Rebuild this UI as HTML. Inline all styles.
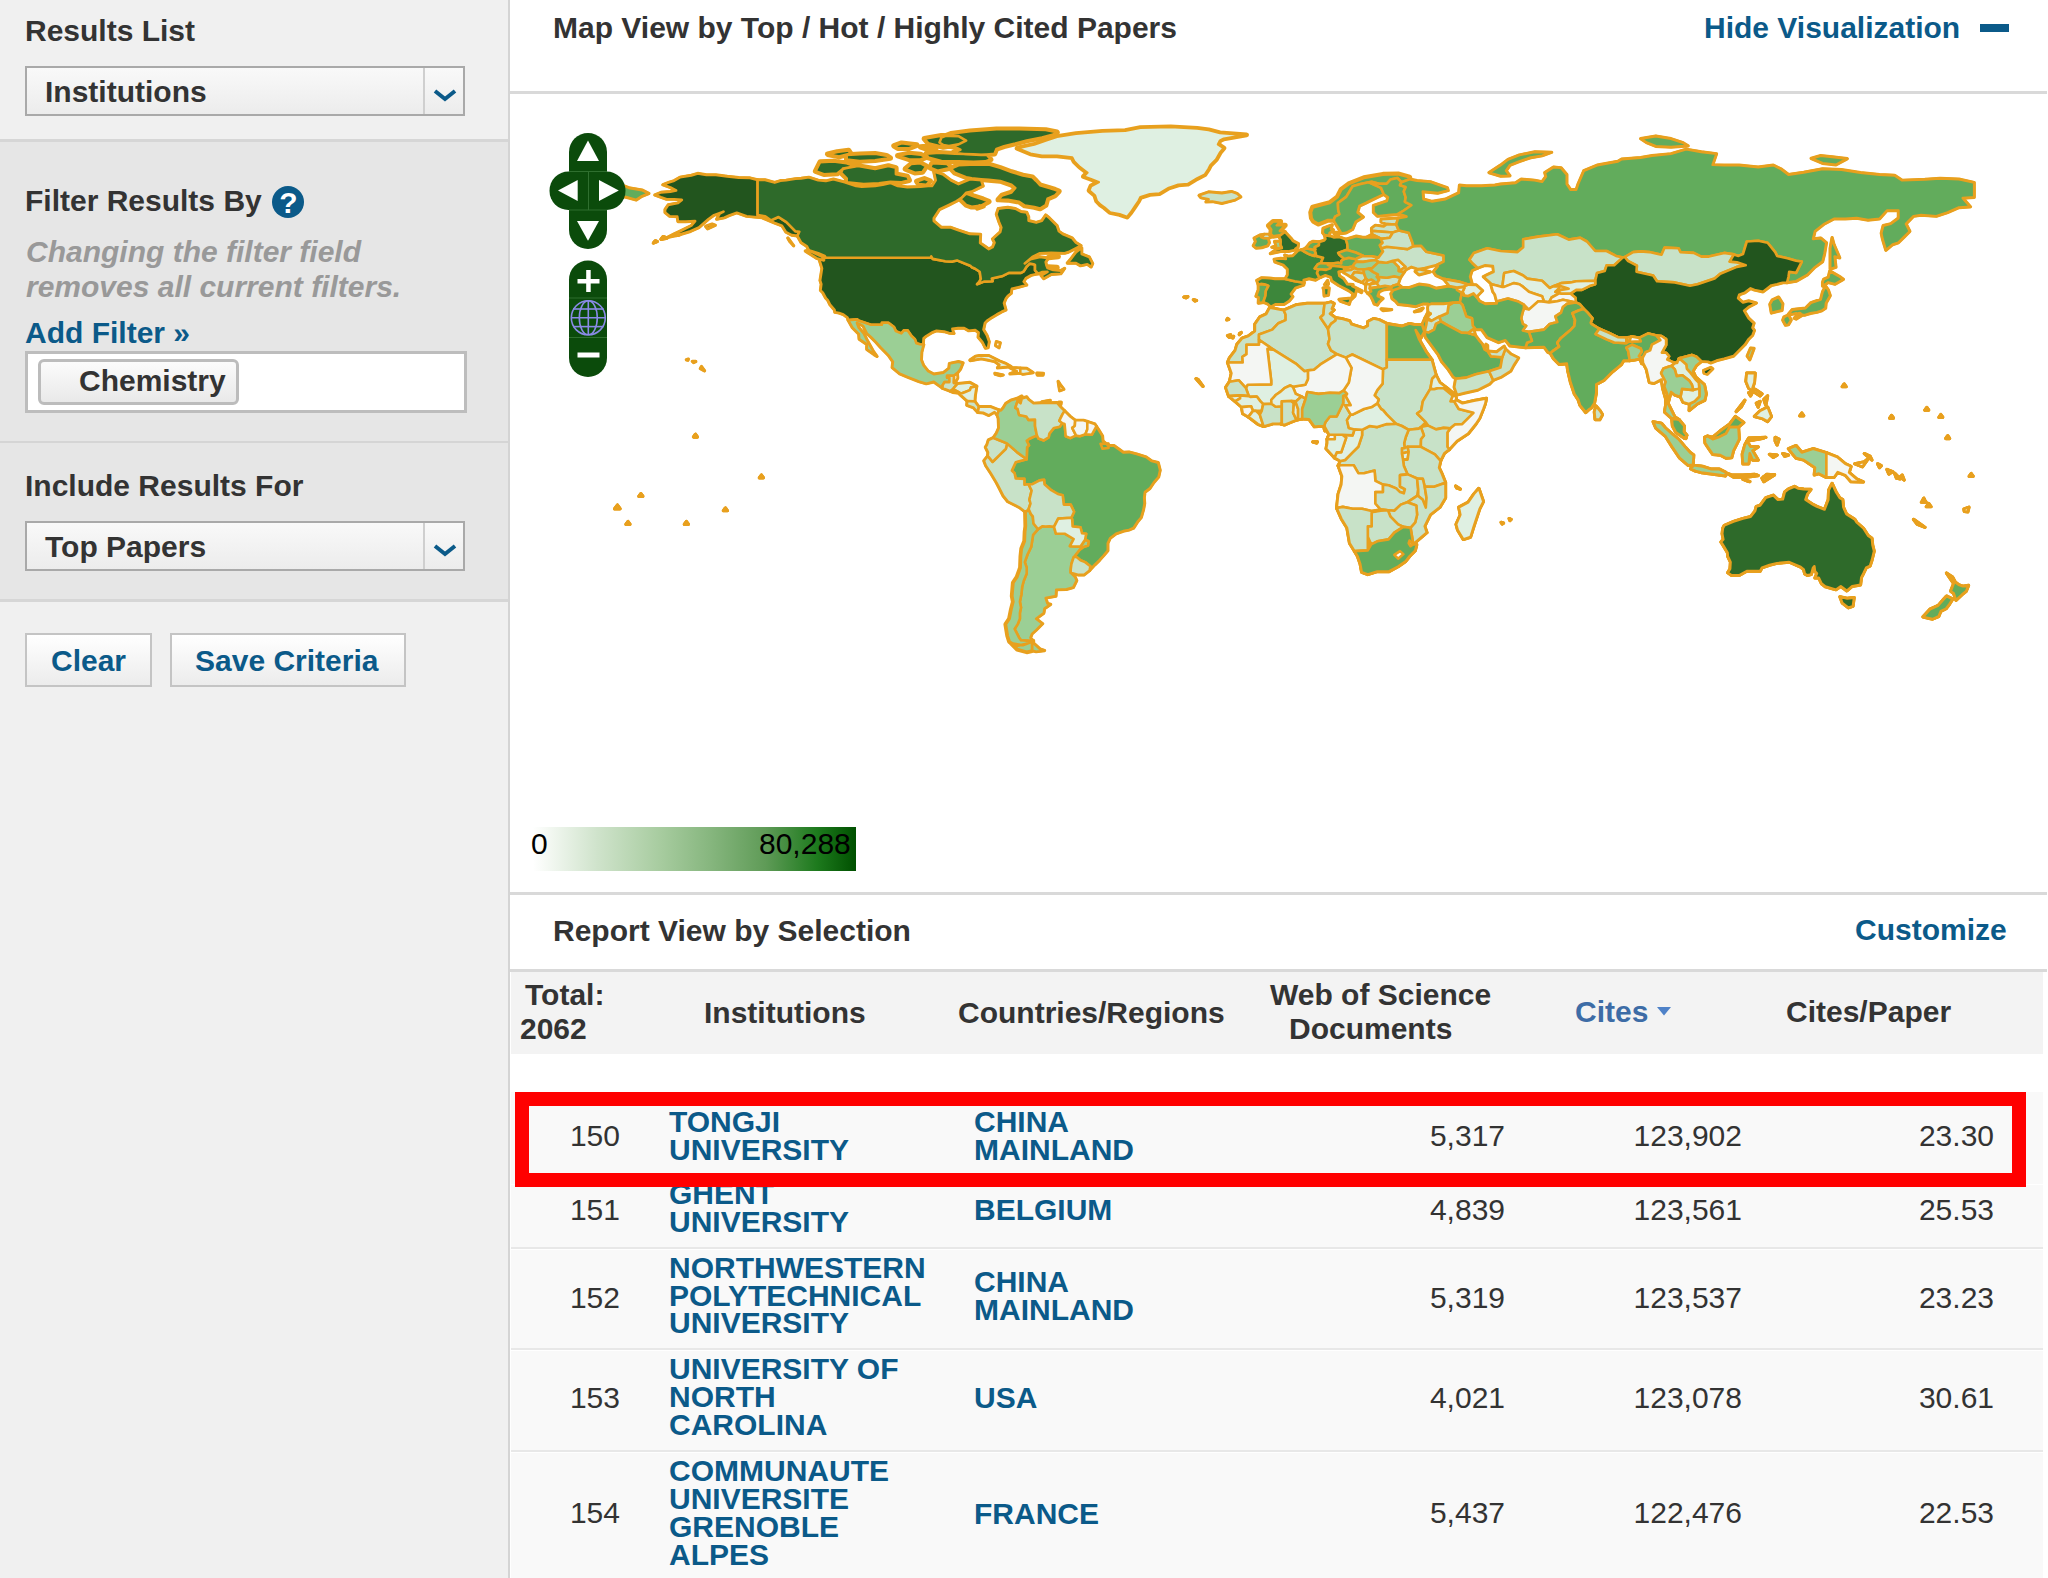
<!DOCTYPE html>
<html><head><meta charset="utf-8"><title>InCites</title>
<style>
html,body{margin:0;padding:0;width:2048px;height:1578px;overflow:hidden;background:#fff;}
body{font-family:"Liberation Sans",sans-serif;color:#333;position:relative;}
.a{position:absolute;white-space:nowrap;}
.b{font-weight:bold;}
.t30{font-size:30px;line-height:34px;}
.blue{color:#0b5a89;}
.sel{position:absolute;box-sizing:border-box;border:2px solid #a9a9a9;background:linear-gradient(#f9f9f9,#ececec);}
.sel .arr{position:absolute;right:0;top:0;bottom:0;width:38px;border-left:2px solid #cfcfcf;}
.btn{position:absolute;box-sizing:border-box;border:2.5px solid #c4c4c4;background:linear-gradient(#ffffff,#ececec);}
.hr{position:absolute;height:2.5px;background:#d9d9d9;}
.row{position:absolute;left:511px;width:1532px;background:#f9f9f9;}
.sep{position:absolute;left:511px;width:1532px;height:2px;background:#e8e8e8;}
.inst{position:absolute;left:669px;font-weight:bold;font-size:30px;line-height:27.5px;color:#0b5a89;white-space:nowrap;}
.ctry{position:absolute;left:974px;font-weight:bold;font-size:30px;line-height:27.5px;color:#0b5a89;white-space:nowrap;}
.num{position:absolute;font-size:30px;line-height:34px;color:#333;text-align:right;white-space:nowrap;}
</style></head><body>
<!-- sidebar -->
<div class="a" style="left:0;top:0;width:509px;height:1578px;background:#f0f0f0;"></div>
<div class="a" style="left:0;top:140px;width:509px;height:461px;background:#e6e6e6;"></div>
<div class="a" style="left:0;top:139px;width:508px;height:2.5px;background:#d6d6d6;"></div>
<div class="a" style="left:0;top:441px;width:509px;height:2px;background:#d5d5d5;"></div>
<div class="a" style="left:0;top:599px;width:508px;height:2.5px;background:#d6d6d6;"></div>
<div class="a" style="left:508px;top:0;width:2px;height:1578px;background:#d4d4d4;"></div>

<div class="a b t30" style="left:25px;top:13.5px;">Results List</div>
<div class="sel" style="left:25px;top:66px;width:440px;height:50px;"><div class="arr"></div></div>
<div class="a b t30" style="left:45px;top:74.5px;">Institutions</div>
<svg class="a" style="left:430px;top:86px;" width="30" height="20" viewBox="0 0 30 20"><path d="M5 5 L15 13 L25 5" fill="none" stroke="#0b5a89" stroke-width="4"/></svg>

<div class="a b t30" style="left:25px;top:184px;">Filter Results By</div>
<svg class="a" style="left:271px;top:185px;" width="34" height="34" viewBox="0 0 34 34"><circle cx="17" cy="17" r="16" fill="#0b5a89"/><text x="17.5" y="27.5" text-anchor="middle" font-family="Liberation Sans" font-weight="bold" font-size="30" fill="#fff">?</text></svg>
<div class="a b t30" style="left:26px;top:235px;font-style:italic;color:#999;">Changing the filter field</div>
<div class="a b t30" style="left:26px;top:270px;font-style:italic;color:#999;">removes all current filters.</div>
<div class="a b t30 blue" style="left:25px;top:315.5px;">Add Filter &raquo;</div>
<div class="a" style="left:25px;top:351px;width:442px;height:62px;box-sizing:border-box;border:3px solid #bdbdbd;background:#fff;"></div>
<div class="a" style="left:38px;top:359px;width:201px;height:46px;box-sizing:border-box;border:3px solid #bcbcbc;border-radius:6px;background:linear-gradient(#fbfbfb,#e9e9e9);"></div>
<div class="a b t30" style="left:79px;top:364px;">Chemistry</div>

<div class="a b t30" style="left:25px;top:468.5px;">Include Results For</div>
<div class="sel" style="left:25px;top:521px;width:440px;height:50px;"><div class="arr"></div></div>
<div class="a b t30" style="left:45px;top:530px;">Top Papers</div>
<svg class="a" style="left:430px;top:541px;" width="30" height="20" viewBox="0 0 30 20"><path d="M5 5 L15 13 L25 5" fill="none" stroke="#0b5a89" stroke-width="4"/></svg>

<div class="btn" style="left:25px;top:633px;width:127px;height:54px;"></div>
<div class="a b t30 blue" style="left:51px;top:644px;">Clear</div>
<div class="btn" style="left:170px;top:633px;width:236px;height:54px;"></div>
<div class="a b t30 blue" style="left:195px;top:644px;">Save Criteria</div>

<!-- main header -->
<div class="a b t30" style="left:553px;top:10.5px;">Map View by Top / Hot / Highly Cited Papers</div>
<div class="a b t30 blue" style="left:1704px;top:10.5px;">Hide Visualization</div>
<div class="a" style="left:1980px;top:24px;width:29px;height:8px;background:#0b5a89;"></div>
<div class="hr" style="left:510px;top:91px;width:1537px;"></div>

<!-- map -->
<svg class="a" style="left:511px;top:94px;" width="1537" height="796" viewBox="0 0 1537 796"><g stroke="#e8a01e" fill="#e8a01e" stroke-linejoin="round"><path d="M308.4 166.0L314.8 163.8L420.2 163.8L420.2 162.3L421.7 164.9L434.2 167.2L441.4 167.6L446.0 166.4L459.2 171.7L460.7 173.2L464.2 174.7L468.7 177.8L469.8 184.9L468.3 188.0L466.1 190.2L472.9 187.6L481.6 187.2L480.8 184.6L491.8 181.9L497.9 178.9L510.0 178.9L512.7 177.4L515.7 172.5L518.7 169.6L522.5 170.2L524.0 171.0L524.0 176.3L527.1 179.7L520.2 181.2L514.9 184.2L512.7 187.6L515.7 191.0L508.5 192.9L500.9 194.8L500.5 196.3L500.2 199.3L496.8 202.0L494.9 204.6L493.0 209.1L494.9 215.9L490.7 217.8L485.8 220.5L480.8 223.5L475.9 226.9L474.0 228.8L472.5 235.6L475.9 241.3L478.2 247.7L477.0 253.7L474.4 254.1L471.4 248.1L467.2 243.2L467.6 238.6L464.2 236.0L457.7 236.7L453.2 234.1L447.1 234.1L441.4 234.8L442.2 238.2L442.9 239.4L438.0 239.0L433.1 237.5L425.5 236.7L421.7 238.2L415.3 242.0L412.6 244.3L412.2 250.0L412.6 250.7L408.8 250.3L405.4 249.2L403.9 245.1L400.5 242.0L396.7 236.4L392.9 236.4L390.3 239.4L384.9 237.1L383.0 233.0L377.4 228.8L370.9 228.8L370.9 230.7L359.9 230.7L345.9 226.1L346.3 225.4L337.2 226.1L336.4 223.5L332.3 220.5L328.1 219.0L323.9 218.2L323.5 215.9L319.0 210.7L316.7 206.1L314.8 204.2L311.8 198.6L309.5 196.3L310.3 190.2L309.1 186.5L311.0 174.4L308.4 166.0ZM246.6 85.9L246.6 121.1L254.2 122.2L259.9 126.4L267.5 123.0L275.4 128.2L284.5 137.3L288.3 137.7L286.4 141.9L280.7 141.1L275.0 138.1L270.9 131.7L263.7 129.0L251.2 123.7L235.6 122.2L225.8 118.8L218.2 121.4L213.3 123.7L205.7 125.2L208.7 119.6L212.5 117.7L203.0 121.1L197.3 125.2L187.9 133.5L179.5 137.3L167.0 141.1L156.4 143.4L163.2 140.0L168.9 137.3L180.3 131.7L184.1 127.1L174.6 127.5L167.0 127.5L166.3 122.6L158.7 122.2L154.1 118.4L154.1 115.4L157.2 110.9L167.0 109.0L170.8 105.9L163.2 105.2L155.6 105.2L150.0 103.3L143.9 101.0L150.0 98.4L159.4 97.6L165.1 96.5L159.4 93.5L151.9 90.8L157.5 88.6L163.2 86.7L168.9 83.3L180.3 81.4L186.7 79.5L195.4 81.0L204.9 81.0L216.3 82.5L227.7 83.6L239.0 84.0ZM189.4 274.5L193.5 276.8L190.5 272.6ZM184.8 267.4L182.6 268.5L181.4 267.4ZM177.3 265.1L175.4 265.8L176.9 266.2ZM201.1 130.1L204.2 131.3L196.6 134.7L194.7 132.4Z" stroke-width="3.3"/><path d="M246.6 85.9L254.2 85.9L263.7 88.6L269.4 86.7L275.0 86.3L284.5 84.8L290.2 84.4L297.8 83.3L307.2 86.3L314.8 87.0L322.4 85.2L333.8 88.2L345.1 92.0L350.8 92.7L364.1 92.0L371.7 90.8L379.3 88.9L386.8 92.0L396.3 93.1L409.6 92.7L417.2 92.0L421.0 92.0L424.7 86.3L422.8 77.6L432.3 80.6L439.9 86.3L447.5 90.1L458.9 85.2L470.2 86.3L472.1 92.0L460.7 97.6L455.1 98.8L451.3 103.3L445.6 107.1L438.0 110.9L428.5 115.4L422.8 124.1L422.8 127.1L430.4 133.5L439.9 133.5L447.5 136.2L458.9 140.0L469.5 140.3L469.1 149.0L474.0 152.4L477.8 155.1L481.6 153.2L483.5 148.7L481.6 144.9L489.2 138.1L490.3 133.5L488.0 127.9L485.4 120.3L487.3 114.6L496.8 113.5L504.3 114.6L510.0 117.7L515.7 118.4L517.6 123.0L517.6 126.7L525.2 128.6L530.9 126.7L534.7 121.1L538.4 124.1L546.0 131.7L547.9 137.3L551.7 140.0L561.2 144.1L565.0 148.7L569.9 151.7L564.2 154.7L557.4 158.1L553.6 159.2L540.3 158.9L529.0 159.2L521.4 163.0L513.8 169.5L519.5 165.3L529.0 163.0L537.3 164.2L534.7 167.9L535.4 171.3L536.5 174.0L542.2 175.9L549.8 176.6L553.6 174.4L549.8 179.7L540.3 180.4L532.8 184.6L530.1 181.5L536.5 177.8L530.9 178.1L527.1 179.7L524.0 176.3L524.0 171.0L522.5 170.2L518.7 169.6L515.7 172.5L512.7 177.4L510.0 178.9L497.9 178.9L491.8 181.9L480.8 184.6L481.6 187.2L472.9 187.6L466.1 190.2L468.3 188.0L469.8 184.9L468.7 177.8L464.2 174.7L460.7 173.2L459.2 171.7L446.0 166.4L441.4 167.6L434.2 167.2L421.7 164.9L420.2 162.3L420.2 163.8L314.8 163.8L313.7 161.9L307.2 159.2L297.8 156.2L295.9 152.4L290.2 148.7L286.4 141.9L288.3 137.7L284.5 137.3L275.4 128.2L267.5 123.0L259.9 126.4L254.2 122.2L246.6 121.1ZM312.9 166.4L305.4 164.2L294.4 157.0L299.7 157.4L311.0 162.6ZM282.6 151.7L276.9 144.1L278.8 147.5ZM556.3 169.1L559.3 165.7L565.0 158.1L570.7 154.0L570.7 160.0L578.2 163.0L581.6 169.5L580.1 172.9L576.3 170.2L569.5 171.7L565.0 169.1Z" stroke-width="3.3"/><path d="M547.9 97.3L544.1 101.4L536.5 104.8L534.7 111.2L529.0 114.6L523.3 113.1L513.8 111.6L508.1 107.8L496.8 105.9L487.3 105.6L491.1 101.4L500.5 98.4L504.3 93.9L500.5 90.8L489.2 87.0L477.8 85.9L470.2 85.2L460.7 84.4L455.1 83.3L443.7 78.7L439.9 74.6L447.5 71.2L458.9 70.8L477.8 70.4L489.2 73.8L500.5 78.0L511.9 81.4L521.4 83.3L525.2 87.0L529.0 91.2L538.4 93.9L544.1 95.7ZM330.0 78.7L335.7 84.4L335.7 88.2L352.7 90.1L367.9 89.3L379.3 87.8L390.6 88.2L398.2 86.3L396.3 82.5L384.9 80.2L384.9 73.8L377.4 71.9L364.1 74.9L347.0 71.9L331.9 74.6ZM304.6 77.2L309.1 68.1L322.4 67.4L335.7 69.3L343.3 71.9L331.9 74.9L326.2 79.5L312.9 80.2ZM470.2 61.0L483.5 59.8L485.4 54.9L493.0 52.3L504.3 49.6L515.7 46.6L530.9 43.6L542.2 40.6L546.0 38.3L534.7 36.0L508.1 35.3L485.4 35.3L458.9 37.2L439.9 39.8L430.4 43.6L428.5 48.5L432.3 51.1L443.7 53.0L449.4 55.7L441.8 58.7L455.1 60.2ZM430.4 67.0L447.5 67.4L462.6 67.8L474.0 67.4L479.7 65.5L475.9 61.0L462.6 60.2L443.7 59.8L428.5 58.7L415.3 59.8L417.2 63.6ZM432.3 53.0L447.5 50.4L455.1 46.6L447.5 42.1L430.4 41.7L413.4 44.7L417.2 49.2ZM455.1 110.9L460.7 112.8L470.2 111.6L477.8 107.5L472.1 105.2L462.6 102.2L455.1 99.5L449.4 105.2ZM394.4 74.9L400.1 70.0L409.6 69.3L415.3 72.3L411.5 78.0L403.9 78.7ZM421.0 69.3L436.1 70.0L439.9 73.8L426.6 76.8L419.1 73.8ZM335.7 65.5L348.9 67.0L364.1 66.3L379.3 64.0L375.5 61.7L364.1 59.8L348.9 60.2L335.7 61.0ZM386.8 61.7L398.2 65.5L409.6 65.5L415.3 63.2L409.6 60.6L398.2 59.5ZM316.7 60.2L328.1 62.5L339.5 59.5L337.6 56.4L326.2 57.9ZM386.8 54.2L398.2 54.2L405.8 51.1L390.6 49.2L383.0 51.9ZM415.3 54.9L424.7 54.9L417.2 52.3L409.6 53.0ZM466.4 113.9L472.1 112.0L468.3 111.2ZM407.7 90.1L415.3 90.8L419.1 87.0L413.4 84.8L405.8 87.4ZM537.7 163.4L547.2 162.6L544.1 161.5ZM536.9 172.9L546.0 173.6L540.3 174.4Z" stroke-width="5.5"/><path d="M616.1 123.0L608.6 120.3L599.1 118.4L593.4 113.5L589.6 110.9L585.8 107.1L583.9 101.4L578.2 96.5L580.1 92.0L587.7 88.2L580.1 85.2L572.5 82.5L576.3 78.7L568.8 73.1L563.1 67.4L561.2 63.6L546.0 61.7L530.9 61.7L519.5 59.8L506.2 54.2L523.3 50.4L534.7 46.6L546.0 42.8L565.0 39.8L591.5 37.5L614.2 36.8L629.4 33.7L659.7 33.0L686.2 34.5L697.6 36.0L709.0 39.0L735.5 40.9L712.8 44.7L709.0 46.6L707.1 50.4L712.8 54.2L709.0 58.7L705.2 65.5L699.5 71.2L697.6 74.9L693.8 80.6L686.2 84.4L676.8 90.1L667.3 90.8L657.8 93.9L648.3 99.5L638.9 100.3L629.4 103.3L627.5 107.1L623.7 112.8L619.9 118.4Z" stroke-width="5.0"/><path d="M688.1 101.4L697.6 98.0L710.9 99.1L720.4 97.6L726.0 99.5L729.8 102.9L724.2 105.9L710.9 109.3L701.4 107.5L695.0 107.8L697.6 105.2L690.0 103.7Z" stroke-width="3.3"/><path d="M337.2 226.1L346.3 225.4L345.9 226.1L359.9 230.7L370.9 230.7L370.9 228.8L377.4 228.8L383.0 233.0L384.9 237.1L390.3 239.4L392.9 236.4L396.7 236.4L400.5 242.0L403.9 245.1L405.4 249.2L408.8 250.3L412.6 250.7L410.7 258.3L410.3 265.8L412.6 271.5L417.2 277.2L422.8 280.2L432.3 278.7L438.0 274.2L438.4 269.6L447.5 267.7L452.0 268.9L449.4 275.3L446.3 279.1L443.1 281.7L436.1 281.7L436.1 283.8L438.4 283.8L438.4 288.1L433.5 288.1L431.6 291.2L431.6 294.2L422.8 287.8L415.3 289.7L407.7 287.4L396.3 282.9L388.7 279.8L381.2 273.4L381.9 267.7L377.4 261.3L369.8 253.7L364.9 248.1L360.3 243.5L355.8 239.4L352.0 231.8L345.9 228.8L347.8 233.7L352.7 239.4L356.5 246.9L362.2 257.1L366.0 262.4L363.0 260.5L355.8 255.3L355.8 250.3L348.2 245.1L347.8 240.1L341.4 233.7Z" stroke-width="3.3"/><path d="M431.6 294.2L431.6 291.2L433.5 288.1L438.4 288.1L438.4 283.8L436.1 283.8L436.1 281.7L443.1 281.7L442.9 288.9L446.7 289.7L442.9 293.8L439.5 297.2Z" stroke-width="3.3"/><path d="M443.1 281.7L446.3 279.1L446.7 284.0L444.1 288.9L442.9 288.9Z" stroke-width="3.3"/><path d="M446.7 289.7L458.9 288.5L465.7 292.3L460.0 293.4L458.9 296.1L452.4 298.7L449.4 299.9L448.2 298.3L442.9 295.7L442.9 293.8Z" stroke-width="3.3"/><path d="M439.5 297.2L442.9 295.7L448.2 298.3L448.2 299.1L441.8 298.3Z" stroke-width="3.3"/><path d="M449.4 299.9L452.4 298.7L458.9 296.1L460.0 293.4L465.7 292.3L464.2 301.8L463.8 307.4L456.2 307.0L448.6 300.2Z" stroke-width="3.3"/><path d="M456.2 307.0L463.8 307.4L467.9 312.7L466.8 318.4L462.6 313.8L455.8 311.2Z" stroke-width="3.3"/><path d="M467.9 312.7L479.7 312.7L488.0 316.1L486.1 321.0L483.5 318.0L477.8 321.4L472.1 318.8L466.8 318.4Z" stroke-width="3.3"/><path d="M458.9 266.2L464.5 262.4L468.3 261.7L477.8 261.7L488.4 267.0L494.1 269.2L500.2 272.6L486.5 273.8L488.4 270.8L483.5 267.4L475.9 265.8L470.2 264.7L459.2 266.6Z" stroke-width="3.3"/><path d="M499.0 273.8L505.1 273.8L509.3 274.2L509.3 279.1L499.0 279.8L505.8 277.2Z" stroke-width="3.3"/><path d="M509.3 274.2L515.7 274.5L522.1 278.7L511.9 280.2L509.3 279.1Z" stroke-width="3.3"/><path d="M483.9 279.4L492.2 281.0L489.5 281.7L484.2 280.2Z" stroke-width="3.3"/><path d="M525.9 279.1L532.4 279.4L532.0 281.0L526.3 281.0Z" stroke-width="3.3"/><path d="M485.4 247.7L489.2 248.8L488.0 253.7L484.6 251.5ZM547.9 308.2L550.2 308.2L549.8 310.8L546.4 310.8ZM552.8 295.3L549.1 290.4L547.2 287.4L548.7 296.8ZM530.9 307.8L539.2 306.3L537.3 308.6Z" stroke-width="3.3"/><path d="M585.4 332.4L587.7 335.8L591.5 342.2L591.9 347.1L597.2 351.6L602.9 351.6L612.3 358.4L618.0 358.1L625.6 360.0L635.1 363.0L640.8 367.1L647.2 368.7L649.1 376.2L647.6 383.0L642.7 388.7L638.9 394.4L633.9 398.1L633.2 403.8L633.6 409.5L632.4 415.9L630.2 423.5L626.7 427.6L622.6 434.0L618.0 435.9L612.3 437.1L605.1 439.7L599.1 444.3L596.8 449.2L596.8 456.7L592.3 462.0L588.5 466.2L583.9 470.7L578.6 476.4L579.4 472.2L574.1 468.1L569.5 466.2L565.3 462.8L562.7 463.2L568.8 455.6L572.5 453.0L577.1 451.4L577.5 447.3L574.1 445.8L575.2 439.7L571.0 439.3L569.5 433.3L561.6 432.5L561.2 425.4L560.4 423.8L563.1 417.8L559.7 410.6L552.8 410.6L551.7 401.2L546.8 400.0L540.3 396.2L533.5 390.2L533.1 385.7L528.6 386.4L521.4 390.2L517.6 390.2L513.4 390.6L513.4 384.9L504.7 384.5L503.6 379.2L500.9 376.6L504.7 368.3L515.7 365.3L516.1 353.2L518.0 351.3L515.7 346.7L518.4 344.8L525.9 341.4L527.4 344.5L532.8 346.4L537.7 343.3L538.4 339.6L543.0 333.9L548.7 332.7L551.3 329.3L553.6 330.1L554.7 342.2L559.3 344.1L563.8 341.8L568.8 342.2L574.4 340.3L580.9 340.7ZM589.6 349.8L597.2 349.8L597.6 353.9L591.5 354.7Z" stroke-width="3.3"/><path d="M562.7 463.2L560.4 470.0L559.7 475.6L559.7 478.7L564.2 483.2L565.7 486.6L562.3 493.4L555.5 495.3L545.3 495.7L544.9 502.1L534.7 504.0L536.5 509.6L539.6 510.4L533.5 514.6L532.8 519.1L525.2 524.8L531.6 529.7L525.2 536.1L521.0 539.9L519.5 543.7L521.8 547.1L510.0 546.3L508.1 543.7L506.2 539.9L503.6 535.0L506.6 530.4L508.9 524.8L508.9 519.1L510.0 513.4L508.9 507.8L510.4 500.2L511.2 492.6L512.7 487.0L515.7 479.4L515.7 473.7L513.8 468.1L516.5 460.5L520.2 453.0L522.1 440.9L527.1 435.2L531.6 432.2L534.7 432.5L538.4 432.2L543.0 432.9L544.9 439.7L553.6 439.7L562.7 445.0L558.9 452.2L569.5 452.6L574.1 445.8L577.5 447.3L577.1 451.4L572.5 453.0L568.8 455.6ZM521.0 547.8L529.0 555.0L533.5 556.5L525.2 557.7L521.0 556.5Z" stroke-width="3.3"/><path d="M517.6 415.1L519.9 420.1L521.8 422.3L522.5 429.5L527.1 435.2L522.1 440.9L520.2 453.0L516.5 460.5L513.8 468.1L515.7 473.7L515.7 479.4L512.7 487.0L511.2 492.6L510.4 500.2L508.9 507.8L510.0 513.4L508.9 519.1L508.9 524.8L506.6 530.4L503.6 535.0L506.2 539.9L508.1 543.7L510.0 546.3L521.8 547.1L513.8 550.1L506.2 552.0L498.6 547.5L496.8 541.8L494.9 530.4L498.6 524.8L500.5 515.3L502.4 507.8L501.3 502.1L502.4 488.9L506.2 483.2L509.6 473.7L510.0 462.4L510.8 454.8L513.8 447.3L514.2 437.8L514.9 432.2L514.6 418.2ZM521.0 547.8L521.0 556.5L515.7 557.7L506.2 555.0L500.5 549.3L511.9 551.2Z" stroke-width="5.0"/><path d="M476.7 361.9L472.9 366.8L474.8 371.7L479.7 379.2L485.4 388.7L488.4 394.4L492.2 401.9L496.8 407.6L508.1 413.3L514.6 418.2L517.6 415.1L519.5 409.5L518.4 405.7L520.6 396.6L517.6 390.2L513.4 390.6L513.4 384.9L504.7 384.5L503.6 379.2L500.9 376.6L504.7 368.3L515.7 365.3L506.2 358.4L496.0 349.4L494.9 354.7L489.2 360.3L483.5 366.0L481.6 367.9Z" stroke-width="3.3"/><path d="M476.7 361.9L481.6 367.9L483.5 366.0L489.2 360.3L494.9 354.7L496.0 349.4L487.7 346.0L482.3 343.7L477.4 346.0L475.9 350.9L474.4 353.2L477.0 358.4Z" stroke-width="3.3"/><path d="M482.3 343.7L487.7 346.0L496.0 349.4L506.2 358.4L515.7 365.3L516.1 353.2L518.0 351.3L515.7 346.7L518.4 344.8L525.9 341.4L524.0 332.0L524.0 325.6L517.6 325.9L515.3 322.5L508.1 321.0L506.6 315.0L504.3 313.8L506.6 307.0L510.8 302.1L506.2 304.4L499.8 306.3L494.9 309.3L492.2 313.8L489.9 316.5L488.0 316.1L486.1 321.0L487.3 324.4L487.7 333.9L485.4 339.2Z" stroke-width="3.3"/><path d="M506.6 307.0L509.6 309.3L510.8 304.4L515.7 302.9L517.6 305.5L522.5 309.3L530.9 308.9L538.4 308.9L546.0 308.6L549.8 313.1L553.6 316.9L551.3 320.6L548.3 326.7L551.3 329.3L548.7 332.7L543.0 333.9L538.4 339.6L537.7 343.3L532.8 346.4L527.4 344.5L525.9 341.4L524.0 332.0L524.0 325.6L517.6 325.9L515.3 322.5L508.1 321.0L506.6 315.0L504.3 313.8Z" stroke-width="3.3"/><path d="M553.6 316.9L559.3 322.5L564.2 326.3L563.8 332.0L561.2 333.9L565.0 341.4L559.3 344.1L554.7 342.2L553.6 330.1L551.3 329.3L548.3 326.7L551.3 320.6Z" stroke-width="3.3"/><path d="M564.2 326.3L572.5 326.3L576.3 327.5L576.3 335.4L574.4 340.3L568.8 342.2L565.0 341.4L561.2 333.9L563.8 332.0Z" stroke-width="3.3"/><path d="M576.3 327.5L583.9 330.1L585.4 332.4L580.9 340.7L574.4 340.3L576.3 335.4Z" stroke-width="3.3"/><path d="M517.6 415.1L519.9 420.1L521.8 422.3L522.5 429.5L527.1 435.2L531.6 432.2L534.7 432.5L538.4 432.2L543.0 432.9L547.2 424.6L560.4 423.8L563.1 417.8L559.7 410.6L552.8 410.6L551.7 401.2L546.8 400.0L540.3 396.2L533.5 390.2L533.1 385.7L528.6 386.4L521.4 390.2L517.6 390.2L520.6 396.6L518.4 405.7L519.5 409.5Z" stroke-width="3.3"/><path d="M543.0 432.9L544.9 439.7L553.6 439.7L562.7 445.0L558.9 452.2L569.5 452.6L574.1 445.8L575.2 439.7L571.0 439.3L569.5 433.3L561.6 432.5L561.2 425.4L560.4 423.8L547.2 424.6Z" stroke-width="3.3"/><path d="M562.7 463.2L565.3 462.8L569.5 466.2L574.1 468.1L579.4 472.2L578.6 476.4L572.9 480.9L567.6 480.9L559.7 478.7L559.7 475.6L560.4 470.0Z" stroke-width="3.3"/><path d="M747.3 190.6L749.9 189.9L754.8 190.6L757.5 191.8L754.8 197.0L754.5 201.6L752.6 207.2L753.0 208.4L747.3 209.1L747.6 203.5L745.0 202.3L747.3 195.9Z" stroke-width="3.3"/><path d="M747.3 190.6L745.8 186.5L750.7 183.8L758.3 184.2L763.9 184.9L774.2 184.9L783.7 187.2L793.1 188.7L792.7 191.0L784.4 194.0L779.9 200.1L781.8 202.7L778.3 206.9L773.0 210.3L764.3 210.3L759.8 212.9L756.7 209.9L753.0 208.4L752.6 207.2L754.5 201.6L754.8 197.0L757.5 191.8L754.8 190.6L749.9 189.9Z" stroke-width="3.3"/><path d="M774.2 184.9L776.5 180.8L776.5 175.1L772.3 171.0L763.9 167.9L763.2 165.3L769.6 164.5L774.9 164.9L773.8 161.1L777.2 162.3L781.8 161.9L787.1 156.6L790.5 155.8L792.4 157.0L796.9 159.6L799.6 160.8L803.4 161.9L805.3 161.9L812.1 163.8L809.8 169.1L806.8 170.2L803.7 174.4L807.5 175.5L806.0 178.9L807.5 181.9L809.4 183.4L804.5 186.1L798.1 184.6L792.7 186.1L793.1 188.7L783.7 187.2ZM816.6 186.5L817.4 189.9L815.9 192.5L813.6 190.6Z" stroke-width="3.3"/><path d="M790.5 155.8L793.9 154.7L797.3 154.7L803.0 155.8L804.5 158.1L803.4 161.9L799.6 160.8L796.9 159.6L792.4 157.0Z" stroke-width="3.3"/><path d="M793.9 154.7L796.2 152.4L798.8 149.0L801.8 147.5L808.3 147.9L807.9 151.3L803.7 153.2L804.5 155.5L803.0 155.8L797.3 154.7Z" stroke-width="3.3"/><path d="M808.3 147.9L813.2 146.4L814.4 144.9L813.6 141.1L818.5 141.9L822.7 143.4L828.4 143.0L834.8 145.3L835.6 147.5L836.3 150.2L836.7 156.2L835.2 156.0L827.2 158.9L828.4 160.8L833.3 164.9L830.3 166.8L830.3 169.5L827.2 168.7L820.8 169.5L817.4 169.5L809.8 169.1L812.1 163.8L805.3 161.9L804.5 158.1L803.0 155.8L804.5 155.5L803.7 153.2L807.9 151.3Z" stroke-width="3.3"/><path d="M803.7 174.4L806.8 170.2L809.8 169.1L817.4 169.5L817.0 171.0L820.8 171.7L819.3 174.4L815.1 175.9L810.9 175.5L807.5 175.5Z" stroke-width="3.3"/><path d="M817.4 169.5L820.8 169.5L827.2 168.7L830.3 169.5L830.3 166.8L833.3 164.9L837.8 163.8L845.1 165.3L845.8 167.6L843.5 169.5L841.6 172.5L836.0 173.6L828.0 172.5L820.8 171.7L817.0 171.0Z" stroke-width="3.3"/><path d="M807.5 175.5L810.9 175.5L815.1 175.9L819.3 174.4L820.8 171.7L828.0 172.5L832.9 173.2L833.3 176.6L827.6 177.8L828.4 181.9L832.5 184.6L836.3 190.2L842.0 190.6L841.3 192.1L851.1 197.0L850.4 198.6L845.4 195.9L843.9 202.0L840.5 205.4L842.0 199.7L837.8 196.7L827.6 191.4L820.8 186.8L819.7 183.1L814.4 181.2L809.4 183.4L807.5 181.9L806.0 178.9ZM828.0 205.4L840.1 204.2L838.2 210.3L829.5 207.2ZM812.1 194.0L818.1 194.0L817.4 201.2L813.2 202.0L812.8 195.9Z" stroke-width="3.3"/><path d="M759.4 159.6L765.1 155.5L770.8 154.0L769.3 150.6L769.6 147.5L769.6 145.6L767.7 142.2L769.6 141.1L773.4 138.1L774.9 138.8L780.2 144.5L781.8 146.8L787.4 149.8L787.1 152.8L784.4 154.7L786.3 155.5L777.2 157.4L769.6 157.4Z" stroke-width="3.3"/><path d="M769.6 147.5L763.6 147.5L765.1 151.7L760.9 153.2L765.1 154.0L770.8 154.0L769.3 150.6Z" stroke-width="3.3"/><path d="M769.6 141.1L762.0 142.2L759.8 140.0L760.2 135.4L757.5 131.7L762.0 127.5L769.6 127.5L765.8 131.3L774.2 131.3L768.9 136.9L773.4 138.1Z" stroke-width="5.0"/><path d="M753.3 140.3L757.5 140.3L760.2 143.0L757.1 144.5L752.2 144.1L749.9 143.0Z" stroke-width="3.3"/><path d="M753.3 140.3L749.9 143.0L752.2 144.1L757.1 144.5L758.3 148.7L756.7 151.7L750.7 153.6L745.0 154.0L742.3 151.7L744.6 147.5L743.1 144.1L748.8 141.1Z" stroke-width="3.3"/><path d="M813.6 141.1L811.7 138.8L812.1 134.3L821.2 130.9L820.0 135.1L822.3 135.8L818.5 139.2L818.5 141.9ZM822.7 138.5L828.8 138.5L826.9 141.5L823.4 140.3Z" stroke-width="3.3"/><path d="M802.6 127.1L807.5 129.8L817.0 126.0L822.7 126.0L824.2 122.6L828.4 120.3L827.2 115.8L826.9 109.0L835.2 102.9L841.6 92.3L849.6 90.1L857.9 88.2L860.6 87.8L868.2 89.7L875.8 89.7L879.5 85.5L886.4 84.0L890.5 88.2L898.5 85.2L898.5 83.3L887.1 80.2L872.0 80.6L853.0 84.0L837.8 90.1L830.3 95.7L826.5 103.3L818.9 109.0L801.8 113.5L800.0 118.4L800.7 124.1Z" stroke-width="5.5"/><path d="M823.4 127.9L828.8 136.6L830.3 139.6L835.2 138.8L841.6 135.4L844.7 127.9L852.3 123.0L846.6 118.4L848.5 112.0L854.9 109.0L862.5 105.2L872.7 100.3L870.1 93.9L857.9 88.2L849.6 90.1L841.6 92.3L835.2 102.9L826.9 109.0L827.2 115.8L828.4 120.3L824.2 122.6L822.7 126.0Z" stroke-width="3.3"/><path d="M872.7 100.3L876.9 103.3L875.8 107.1L862.5 111.6L862.5 118.4L866.3 122.2L877.6 121.1L886.4 120.3L892.8 116.5L900.4 111.2L893.9 107.8L894.7 103.3L892.8 97.6L894.7 93.1L889.0 91.2L890.5 88.2L886.4 84.0L879.5 85.5L875.8 89.7L868.2 89.7L860.6 87.8L857.9 88.2L870.1 93.9Z" stroke-width="3.3"/><path d="M870.1 125.2L887.1 124.1L885.2 130.5L875.8 130.1L870.1 127.9Z" stroke-width="3.3"/><path d="M860.6 134.3L864.4 131.3L872.7 132.4L875.8 130.1L885.2 130.5L887.9 136.6L881.8 138.5L860.6 136.9Z" stroke-width="3.3"/><path d="M860.6 136.9L881.8 138.5L878.8 143.7L870.1 144.9L867.4 143.4L861.3 140.3Z" stroke-width="3.3"/><path d="M855.3 143.4L867.4 143.4L861.3 140.3Z" stroke-width="3.3"/><path d="M834.8 145.3L845.4 142.2L851.5 143.4L855.3 143.4L867.4 143.4L870.1 144.9L871.6 148.7L868.9 151.3L870.4 154.3L872.0 157.4L867.4 163.8L860.6 162.3L853.0 162.3L852.3 161.9L844.7 158.5L837.8 156.6L836.7 156.2L836.3 150.2L835.6 147.5Z" stroke-width="3.3"/><path d="M827.2 158.9L835.2 156.0L836.7 156.2L837.8 156.6L844.7 158.5L852.3 161.9L845.8 164.5L845.1 165.3L837.8 163.8L833.3 164.9L828.4 160.8Z" stroke-width="3.3"/><path d="M852.3 161.9L853.0 162.3L860.6 162.3L866.3 163.4L864.8 166.0L858.7 166.8L852.3 167.9L845.8 167.6L845.1 165.3L845.8 164.5Z" stroke-width="3.3"/><path d="M841.6 172.5L843.5 169.5L845.8 167.6L852.3 167.9L858.7 166.8L864.8 166.0L867.8 167.9L861.0 174.4L857.6 174.7L852.6 175.5L846.6 175.5L843.5 174.0Z" stroke-width="3.3"/><path d="M832.9 173.2L836.0 173.6L841.6 172.5L843.5 174.0L840.1 175.9L833.3 176.6Z" stroke-width="3.3"/><path d="M833.3 176.6L840.1 175.9L843.5 174.0L846.6 175.5L852.6 175.5L853.0 179.3L843.5 178.1L840.9 181.9L847.3 186.5L851.1 188.4L845.4 186.5L837.8 181.5L834.1 179.3L832.5 178.5Z" stroke-width="3.3"/><path d="M840.9 181.9L843.5 178.1L853.0 179.3L854.9 184.6L851.1 188.4L847.3 186.5Z" stroke-width="3.3"/><path d="M852.6 175.5L857.6 174.7L862.5 178.1L867.0 180.4L865.9 182.7L868.2 185.7L865.9 189.1L863.2 187.6L860.6 185.7L856.8 186.5L854.9 184.6L853.0 179.3Z" stroke-width="3.3"/><path d="M851.1 188.4L854.9 184.6L856.8 186.5L854.1 190.2Z" stroke-width="3.3"/><path d="M856.8 186.5L860.6 185.7L863.2 187.6L859.1 190.2L854.1 190.2Z" stroke-width="3.3"/><path d="M859.1 190.2L865.9 189.1L868.2 192.9L858.7 194.4Z" stroke-width="3.3"/><path d="M854.1 190.2L859.1 190.2L858.7 194.4L860.2 197.4L856.8 199.3L854.5 196.7L854.9 191.0Z" stroke-width="3.3"/><path d="M856.8 199.3L860.2 197.4L858.7 194.4L868.2 192.9L873.9 191.8L879.9 192.9L881.8 191.8L879.5 194.8L872.0 195.9L868.2 197.8L866.7 202.0L872.0 204.6L868.2 208.0L866.3 211.0L863.2 209.9L861.7 206.1L859.8 202.3L857.6 200.1ZM870.1 214.8L880.7 215.6L872.0 216.7Z" stroke-width="3.3"/><path d="M865.9 182.7L875.8 183.8L883.3 182.3L889.4 183.8L887.1 190.2L881.8 191.8L879.9 192.9L873.9 191.8L868.2 192.9L865.9 189.1L868.2 185.7Z" stroke-width="3.3"/><path d="M857.6 174.7L861.0 174.4L867.8 167.9L875.4 168.7L881.8 166.8L887.9 173.2L887.9 177.0L893.2 178.1L889.4 183.8L883.3 182.3L875.8 183.8L865.9 182.7L867.0 180.4L862.5 178.1Z" stroke-width="3.3"/><path d="M881.8 166.8L887.1 165.7L894.7 172.9L887.9 177.0L887.9 173.2Z" stroke-width="3.3"/><path d="M864.8 166.0L866.3 163.4L867.4 163.8L872.0 157.4L870.4 154.3L875.8 152.8L887.1 154.0L896.6 155.1L902.3 152.1L909.9 151.7L915.2 157.7L925.8 160.0L932.6 161.5L932.6 167.6L925.8 171.0L913.7 174.0L908.0 175.1L904.2 177.4L908.0 180.8L919.3 177.8L913.7 176.6L906.1 174.7L900.4 172.9L894.7 175.9L893.2 178.1L887.9 177.0L894.7 172.9L887.1 165.7L881.8 166.8L875.4 168.7L867.8 167.9Z" stroke-width="3.3"/><path d="M870.1 144.9L878.8 143.7L881.8 138.5L887.9 136.6L897.7 138.8L901.5 148.7L902.3 152.1L896.6 155.1L887.1 154.0L875.8 152.8L870.4 154.3L868.9 151.3L871.6 148.7Z" stroke-width="3.3"/><path d="M879.5 194.8L881.8 191.8L887.1 190.2L890.9 193.3L882.2 196.3ZM882.2 196.3L890.9 193.3L898.5 193.6L908.0 190.2L917.4 191.4L925.0 194.4L938.3 192.1L945.9 193.6L950.8 198.9L948.9 208.4L941.7 208.8L932.6 209.9L920.1 209.9L918.2 212.9L917.1 209.9L911.8 209.9L904.9 212.5L896.6 211.4L887.1 210.3L884.5 207.2L881.1 204.6L879.9 199.7Z" stroke-width="3.3"/><path d="M903.4 217.8L912.1 214.1L909.9 216.7Z" stroke-width="3.3"/><path d="M898.5 85.2L906.1 86.7L919.3 87.8L936.4 93.9L937.1 96.5L926.9 99.1L911.8 97.6L912.5 105.2L921.2 107.5L934.5 105.2L947.8 98.8L948.5 91.2L955.3 92.0L970.5 92.0L983.8 91.2L989.5 90.1L1004.6 88.9L1010.3 85.2L1023.6 86.3L1031.1 87.8L1034.9 82.5L1033.8 78.7L1042.5 73.1L1050.1 73.8L1055.8 80.6L1055.8 90.1L1059.6 95.7L1065.2 95.7L1067.1 90.1L1072.8 76.8L1086.1 71.2L1106.9 67.4L1110.7 65.1L1129.7 63.6L1141.0 61.7L1160.0 59.8L1175.2 55.3L1190.3 57.9L1205.5 59.8L1201.7 70.8L1213.1 71.2L1228.2 71.2L1247.2 73.1L1262.3 71.2L1269.9 74.9L1277.5 80.6L1292.7 78.4L1311.6 74.9L1330.5 75.7L1349.5 78.7L1368.5 80.6L1383.6 81.4L1391.2 86.3L1413.9 85.5L1429.1 84.4L1448.0 85.2L1463.2 88.6L1463.2 103.3L1451.8 104.1L1459.4 112.8L1448.0 113.5L1436.7 118.4L1425.3 122.2L1410.1 121.1L1402.6 122.2L1398.8 126.0L1395.0 129.8L1398.8 137.3L1393.1 143.0L1387.4 148.7L1381.7 150.6L1374.9 156.2L1371.5 144.9L1370.3 139.2L1372.2 131.7L1379.8 129.8L1387.4 124.1L1387.4 116.5L1376.0 116.5L1368.5 124.8L1357.1 126.0L1345.7 124.1L1334.3 124.8L1323.0 124.8L1313.5 129.8L1304.0 137.3L1302.1 144.9L1309.7 144.1L1315.4 148.7L1313.5 160.0L1311.6 167.6L1304.0 173.2L1296.4 180.8L1285.1 187.2L1277.5 188.4L1276.0 188.7L1277.5 182.7L1278.2 177.8L1285.1 178.9L1290.8 167.6L1285.1 166.8L1276.4 164.2L1266.1 161.9L1264.2 158.1L1256.6 148.7L1247.2 146.8L1235.8 147.5L1232.0 160.0L1227.5 161.9L1222.9 160.4L1213.1 158.9L1197.9 162.6L1190.3 162.6L1182.7 158.9L1169.5 158.1L1167.6 154.3L1153.6 153.6L1150.5 160.8L1138.4 158.1L1129.7 157.4L1122.1 158.1L1113.8 163.0L1111.9 163.4L1105.0 161.9L1095.6 157.0L1084.2 157.0L1075.9 147.5L1069.0 143.7L1057.7 145.6L1046.3 140.3L1027.3 142.6L1012.2 145.3L1012.2 153.2L1006.5 158.1L989.5 157.0L976.2 154.3L962.9 158.9L958.4 165.7L961.0 168.7L966.7 174.0L961.0 176.6L959.1 182.7L961.0 189.5L957.2 190.6L947.8 187.6L932.6 184.9L925.0 181.5L922.4 177.8L926.9 172.1L925.8 171.0L932.6 167.6L932.6 161.5L925.8 160.0L915.2 157.7L909.9 151.7L902.3 152.1L901.5 148.7L897.7 138.8L887.9 136.6L885.2 130.5L887.1 124.1L895.5 122.6L889.0 120.3L886.4 120.3L892.8 116.5L900.4 111.2L893.9 107.8L894.7 103.3L892.8 97.6L894.7 93.1L889.0 91.2L890.5 88.2ZM978.1 78.7L989.5 82.1L998.9 81.8L995.1 76.8L998.9 71.2L1008.4 67.4L1019.8 63.6L1031.1 61.7L1040.6 58.3L1023.6 57.9L1008.4 61.0L997.0 65.5L989.5 71.2L983.8 74.9ZM1135.4 48.5L1144.8 52.3L1160.0 53.0L1177.1 51.9L1171.4 48.5L1160.0 44.7L1144.8 42.1L1129.7 44.7ZM1300.2 64.4L1311.6 69.3L1324.9 70.8L1336.2 64.7L1321.1 62.9L1309.7 61.7ZM1319.2 175.1L1324.9 173.2L1323.7 162.6L1328.7 163.8L1323.0 150.6L1321.1 143.7L1319.2 154.3L1319.2 167.6ZM98.8 88.6L110.2 90.8L117.8 93.9L131.0 96.1L137.8 99.5L131.0 102.2L125.3 105.9L115.9 103.3L106.4 101.4L98.8 103.3Z" stroke-width="3.3"/><path d="M966.7 174.0L974.3 171.3L981.9 172.1L982.6 177.8L976.2 180.8L972.4 182.7L980.7 190.2L991.3 192.9L993.2 178.9L1002.7 177.0L1012.2 181.5L1016.0 184.6L1031.1 186.8L1038.7 194.0L1042.5 192.1L1050.1 189.1L1059.6 188.4L1065.2 187.2L1084.2 186.8L1086.1 178.9L1093.7 177.0L1095.6 171.3L1103.2 171.3L1111.9 163.4L1105.0 161.9L1095.6 157.0L1084.2 157.0L1075.9 147.5L1069.0 143.7L1057.7 145.6L1046.3 140.3L1027.3 142.6L1012.2 145.3L1012.2 153.2L1006.5 158.1L989.5 157.0L976.2 154.3L962.9 158.9L958.4 165.7L961.0 168.7Z" stroke-width="3.3"/><path d="M1113.8 163.0L1122.1 158.1L1129.7 157.4L1138.4 158.1L1150.5 160.8L1153.6 153.6L1167.6 154.3L1169.5 158.1L1182.7 158.9L1190.3 162.6L1197.9 162.6L1213.1 158.9L1222.9 160.4L1218.7 167.6L1225.9 168.3L1234.7 171.3L1225.9 172.9L1209.3 179.7L1203.6 184.6L1186.5 190.2L1179.0 191.8L1163.8 188.4L1146.0 187.2L1142.2 181.5L1125.5 177.8L1125.9 171.7L1116.8 166.8Z" stroke-width="3.3"/><path d="M1059.6 199.7L1065.2 195.9L1070.9 195.9L1078.5 192.1L1084.2 190.2L1084.2 186.8L1086.1 178.9L1093.7 177.0L1095.6 171.3L1103.2 171.3L1111.9 163.4L1113.8 163.0L1116.8 166.8L1125.9 171.7L1125.5 177.8L1142.2 181.5L1146.0 187.2L1163.8 188.4L1179.0 191.8L1186.5 190.2L1203.6 184.6L1209.3 179.7L1225.9 172.9L1234.7 171.3L1225.9 168.3L1218.7 167.6L1222.9 160.4L1227.5 161.9L1232.0 160.0L1235.8 147.5L1247.2 146.8L1256.6 148.7L1264.2 158.1L1266.1 161.9L1276.4 164.2L1285.1 166.8L1290.8 167.6L1285.1 178.9L1278.2 177.8L1277.5 182.7L1276.0 188.7L1271.8 188.7L1266.1 190.2L1260.4 191.4L1252.1 197.8L1243.4 195.9L1239.6 194.4L1233.9 198.6L1228.2 200.8L1227.1 204.2L1232.0 208.4L1237.7 206.9L1245.3 209.1L1237.7 212.9L1233.1 216.7L1237.7 224.3L1243.0 229.2L1241.5 233.7L1243.4 236.4L1241.5 241.3L1237.7 245.1L1233.9 250.7L1228.2 256.4L1222.5 262.1L1213.1 264.7L1205.5 266.6L1199.8 268.9L1197.1 267.7L1190.3 267.4L1185.4 262.8L1180.8 260.9L1171.4 263.6L1168.0 264.3L1166.1 268.9L1164.5 268.9L1160.8 267.7L1156.2 265.5L1158.1 262.4L1155.1 258.7L1150.9 258.7L1155.1 251.1L1155.1 245.1L1150.5 242.0L1145.6 241.6L1137.3 239.4L1128.2 243.9L1120.2 242.4L1115.3 243.5L1106.9 243.2L1097.5 238.6L1088.4 234.8L1080.4 229.9L1079.7 228.8L1081.5 224.3L1076.6 218.6L1072.8 214.8L1069.0 210.3L1064.9 208.4L1064.5 203.8ZM1192.6 276.4L1199.8 273.4L1201.7 274.9L1196.4 280.2L1193.0 279.1Z" stroke-width="3.3"/><path d="M1236.2 262.1L1239.6 254.1L1243.0 254.5L1238.8 265.8Z" stroke-width="3.3"/><path d="M1261.2 206.1L1258.9 210.3L1260.4 219.0L1264.6 217.8L1271.0 216.3L1271.8 209.9L1267.6 203.1Z" stroke-width="3.3"/><path d="M1277.1 220.5L1281.3 215.6L1294.5 214.1L1299.9 208.8L1309.7 205.4L1311.6 197.8L1314.6 192.1L1317.3 195.9L1319.2 201.6L1315.0 209.1L1314.6 214.1L1310.8 216.7L1305.9 218.2L1299.5 219.3L1293.4 221.2L1285.1 219.3L1277.5 220.9ZM1272.9 223.1L1277.5 220.9L1280.1 226.1L1277.5 230.7L1274.5 231.1L1271.8 226.1ZM1283.2 224.3L1288.9 219.0L1291.5 221.2L1285.1 225.0ZM1311.6 192.1L1317.3 188.4L1324.1 190.2L1332.4 185.3L1328.7 182.7L1318.8 177.0L1317.3 183.4L1312.7 185.3L1311.6 188.4Z" stroke-width="3.3"/><path d="M991.3 192.9L993.2 192.9L1002.7 189.1L1008.4 190.2L1012.2 192.9L1017.9 197.8L1023.6 199.7L1031.1 202.3L1033.0 207.6L1038.0 208.4L1040.6 203.5L1048.2 199.3L1050.1 195.9L1057.7 194.8L1050.1 192.1L1042.5 192.1L1038.7 194.0L1031.1 186.8L1016.0 184.6L1012.2 181.5L1002.7 177.0L993.2 178.9Z" stroke-width="3.3"/><path d="M980.0 191.0L981.9 197.8L983.8 200.4L985.7 207.6L997.0 204.6L1006.5 207.2L1012.9 210.7L1017.9 215.6L1027.3 207.2L1033.0 207.6L1031.1 202.3L1023.6 199.7L1017.9 197.8L1012.2 192.9L1008.4 190.2L1002.7 189.1L993.2 192.9L991.3 192.9L980.7 190.2Z" stroke-width="3.3"/><path d="M1050.1 189.1L1059.6 188.4L1065.2 187.2L1084.2 186.8L1084.2 190.2L1078.5 192.1L1070.9 195.9L1065.2 195.9L1059.6 199.7L1050.1 199.7L1044.4 197.8L1050.1 195.9L1057.7 194.8L1050.1 192.1L1042.5 192.1Z" stroke-width="3.3"/><path d="M1038.0 208.4L1046.3 207.2L1052.0 205.7L1064.9 208.4L1064.5 203.8L1059.6 199.7L1050.1 199.7L1044.4 197.8L1048.2 194.0L1048.2 199.3L1040.6 203.5Z" stroke-width="3.3"/><path d="M1017.9 237.9L1033.0 235.6L1038.7 229.9L1046.3 228.0L1044.4 222.4L1050.1 218.6L1052.0 212.9L1055.8 209.9L1064.9 208.4L1052.0 205.7L1046.3 207.2L1038.0 208.4L1033.0 207.6L1027.3 207.2L1017.9 215.6L1012.9 214.4L1011.4 219.3L1010.3 224.3L1011.8 229.9L1015.2 231.8L1011.8 236.4Z" stroke-width="3.3"/><path d="M1014.5 253.7L1023.6 253.4L1033.0 253.0L1036.8 258.3L1039.5 259.4L1041.8 257.1L1048.2 252.6L1046.3 248.8L1050.1 243.9L1059.6 236.0L1063.4 231.8L1064.1 226.1L1061.5 219.3L1067.1 216.7L1072.8 214.8L1069.0 210.3L1064.9 208.4L1055.8 209.9L1052.0 212.9L1050.1 218.6L1044.4 222.4L1046.3 228.0L1038.7 229.9L1033.0 235.6L1017.9 237.9L1020.9 246.9L1016.0 248.8Z" stroke-width="3.3"/><path d="M950.8 198.9L953.4 201.6L957.2 202.0L962.5 199.3L966.3 203.8L968.6 207.2L974.3 209.9L985.7 209.5L985.7 207.6L997.0 204.6L1006.5 207.2L1012.9 210.7L1012.9 214.4L1011.4 219.3L1010.3 224.3L1011.8 229.9L1015.2 231.8L1011.8 236.4L1017.9 237.9L1020.9 246.9L1016.0 248.8L1014.5 253.7L998.9 251.9L994.4 246.2L987.6 248.5L976.2 243.5L970.5 235.6L964.8 235.6L961.8 231.8L961.0 224.3L955.3 222.4L953.4 216.7L951.5 211.0L948.9 208.4Z" stroke-width="3.3"/><path d="M957.2 190.6L965.2 191.0L971.6 196.7L966.7 201.6L966.3 203.8L962.5 199.3L957.2 202.0L953.4 201.6L951.5 197.8L953.4 194.0L951.5 192.9Z" stroke-width="3.3"/><path d="M945.9 193.6L951.5 192.9L953.4 194.0L951.5 197.8L953.4 201.6L950.8 198.9L945.9 195.9Z" stroke-width="3.3"/><path d="M932.6 184.9L947.8 187.6L957.2 190.6L951.5 192.9L945.9 193.6L938.3 192.1Z" stroke-width="3.3"/><path d="M948.9 208.4L941.7 208.8L937.5 211.4L936.4 219.0L928.1 222.7L929.9 227.3L936.4 231.1L950.4 238.6L957.2 239.0L961.8 235.6L964.8 235.6L961.8 231.8L961.0 224.3L955.3 222.4L953.4 216.7L951.5 211.0Z" stroke-width="3.3"/><path d="M916.7 213.7L917.4 210.7L920.1 209.9L932.6 209.9L941.7 208.8L937.5 211.4L936.4 219.0L928.1 222.7L920.5 226.9L915.9 223.1L919.7 219.7L917.1 218.2Z" stroke-width="3.3"/><path d="M914.0 223.9L915.9 223.1L919.7 219.7L917.1 218.2L915.5 220.9Z" stroke-width="3.3"/><path d="M911.0 230.7L914.0 223.9L915.9 223.1L915.9 225.4L915.5 229.9L913.7 237.5L913.3 237.5Z" stroke-width="3.3"/><path d="M913.7 237.9L917.4 238.6L923.1 235.6L925.0 229.9L929.9 227.3L928.1 222.7L920.5 226.9L915.9 225.4L915.5 229.9Z" stroke-width="3.3"/><path d="M913.3 237.5L917.4 238.6L923.1 235.6L925.0 229.9L929.9 227.3L936.4 231.1L950.4 238.6L957.2 239.0L964.4 241.3L968.6 246.9L971.3 250.0L973.5 255.3L976.6 257.1L980.0 262.4L991.3 263.2L989.5 273.4L978.1 277.2L964.8 280.2L955.3 283.6L944.7 284.7L942.1 282.9L937.1 275.3L930.7 267.7L926.9 260.2L921.2 252.6L914.4 243.2Z" stroke-width="3.3"/><path d="M944.7 284.7L955.3 283.6L964.8 280.2L978.1 277.2L982.2 286.3L978.8 290.0L966.7 296.1L953.4 299.1L945.9 301.0L943.2 293.1Z" stroke-width="3.3"/><path d="M978.1 277.2L989.5 273.4L991.3 263.2L994.4 254.9L1000.1 260.2L1007.6 263.9L1002.7 271.5L999.7 277.2L990.6 282.9L982.2 286.3Z" stroke-width="3.3"/><path d="M976.6 257.1L985.7 257.9L993.2 252.2L994.4 254.9L991.3 263.2L980.0 262.4Z" stroke-width="3.3"/><path d="M973.5 255.3L976.6 257.1L976.6 251.5L975.0 250.3Z" stroke-width="3.3"/><path d="M957.2 239.0L964.4 241.3L962.9 235.6L961.8 235.6Z" stroke-width="3.3"/><path d="M1039.5 259.4L1042.5 264.7L1048.2 270.4L1055.8 269.6L1056.9 277.2L1059.6 288.5L1063.4 299.9L1067.1 305.5L1069.0 311.2L1074.7 318.4L1078.5 315.0L1080.4 313.8L1083.4 309.3L1085.3 298.7L1085.3 290.4L1092.9 286.3L1101.3 277.9L1110.4 270.4L1112.6 266.6L1118.3 266.6L1118.3 263.9L1117.2 257.1L1115.3 253.7L1121.3 250.7L1129.7 254.5L1130.8 257.5L1127.8 262.1L1131.6 263.9L1134.6 258.3L1139.2 256.4L1141.0 250.7L1149.4 246.2L1145.6 241.6L1137.3 239.4L1128.2 243.9L1129.7 247.3L1118.3 247.7L1115.3 249.2L1103.2 248.5L1095.6 245.4L1084.6 240.1L1088.4 234.8L1080.4 229.9L1079.7 228.8L1081.5 224.3L1076.6 218.6L1072.8 214.8L1067.1 216.7L1061.5 219.3L1064.1 226.1L1063.4 231.8L1059.6 236.0L1050.1 243.9L1046.3 248.8L1048.2 252.6L1041.8 257.1Z" stroke-width="3.3"/><path d="M1084.6 240.1L1095.6 245.4L1103.2 248.5L1115.3 249.2L1115.3 243.5L1106.9 243.2L1097.5 238.6L1088.4 234.8Z" stroke-width="3.3"/><path d="M1118.3 247.7L1129.7 247.3L1128.2 243.9L1120.2 242.4Z" stroke-width="3.3"/><path d="M1118.3 266.6L1124.0 265.8L1128.9 264.7L1130.8 269.6L1132.0 265.8L1131.6 263.9L1127.8 262.1L1130.8 257.5L1129.7 254.5L1121.3 250.7L1115.3 253.7L1117.2 257.1L1118.3 263.9Z" stroke-width="3.3"/><path d="M1083.4 318.0L1085.0 312.0L1089.1 316.9L1091.4 320.6L1088.7 325.6L1084.2 325.6Z" stroke-width="3.3"/><path d="M1132.0 268.9L1135.4 275.3L1138.4 288.5L1142.9 289.3L1150.5 285.5L1151.7 294.2L1154.7 304.8L1154.7 311.2L1157.0 305.5L1156.2 299.9L1153.2 292.3L1154.7 287.8L1150.1 279.1L1152.4 274.5L1158.1 272.6L1160.4 271.9L1164.5 268.9L1160.8 267.7L1156.2 265.5L1158.1 262.4L1155.1 258.7L1150.9 258.7L1155.1 251.1L1155.1 245.1L1150.5 242.0L1145.6 241.6L1149.4 246.2L1141.0 250.7L1139.2 256.4L1134.6 258.3L1131.6 263.9Z" stroke-width="3.3"/><path d="M1190.3 267.4L1185.4 271.5L1182.0 277.2L1184.6 282.9L1193.4 290.8L1195.2 299.9L1193.7 306.3L1186.5 309.7L1178.2 316.5L1178.6 309.7L1183.5 307.4L1188.4 302.5L1188.4 294.6L1187.7 288.5L1184.6 285.5L1179.7 279.1L1175.9 274.9L1175.2 270.4L1168.0 264.3L1171.4 263.6L1180.8 260.9L1185.4 262.8Z" stroke-width="3.3"/><path d="M1168.0 264.3L1175.2 270.4L1175.9 274.9L1179.7 279.1L1184.6 285.5L1187.7 288.5L1188.4 294.6L1182.4 296.1L1180.8 290.4L1178.2 286.6L1171.4 281.3L1165.7 282.1L1163.8 275.3L1160.4 271.9L1164.5 268.9L1166.1 268.9Z" stroke-width="3.3"/><path d="M1169.5 302.9L1172.1 308.2L1177.1 309.7L1178.6 309.7L1183.5 307.4L1188.4 302.5L1188.4 294.6L1182.4 296.1L1171.0 294.9Z" stroke-width="3.3"/><path d="M1160.4 271.9L1163.8 275.3L1165.7 282.1L1171.4 281.3L1178.2 286.6L1180.8 290.4L1182.4 296.1L1171.0 294.9L1169.5 302.9L1163.8 301.0L1160.0 298.0L1157.0 309.3L1161.1 317.6L1163.8 322.9L1168.0 325.6L1160.8 324.4L1153.6 318.0L1154.7 311.2L1157.0 305.5L1156.2 299.9L1153.2 292.3L1154.7 287.8L1150.1 279.1L1152.4 274.5L1158.1 272.6Z" stroke-width="3.3"/><path d="M1160.8 324.4L1168.0 325.6L1173.3 332.0L1172.9 337.7L1175.9 341.4L1173.3 344.1L1164.9 338.4L1161.5 332.0ZM1196.4 342.2L1201.7 343.3L1209.3 336.9L1218.7 330.1L1224.4 322.5L1232.8 328.6L1227.5 333.1L1218.7 333.1L1215.0 339.6L1207.4 343.3L1201.7 345.2Z" stroke-width="3.3"/><path d="M1193.7 343.3L1196.4 342.2L1201.7 345.2L1207.4 343.3L1215.0 339.6L1218.7 333.1L1227.5 333.1L1228.2 345.2L1226.3 349.0L1222.5 356.6L1220.6 363.7L1215.0 364.1L1209.3 361.1L1201.7 360.3L1197.9 354.7L1194.1 349.0ZM1142.2 327.8L1150.5 329.3L1154.3 333.9L1161.5 340.3L1167.6 345.2L1174.0 352.8L1179.0 358.4L1182.7 361.1L1182.0 370.9L1177.1 371.3L1168.7 364.1L1161.1 352.8L1154.7 342.6L1144.8 333.9ZM1179.7 374.7L1182.7 371.3L1191.5 372.4L1199.8 375.1L1208.1 375.1L1215.0 378.5L1214.6 381.9L1201.7 380.0L1190.3 378.5L1184.3 377.0ZM1232.0 369.8L1237.7 369.8L1238.8 359.2L1241.5 366.0L1247.2 366.0L1241.5 356.6L1247.2 352.8L1239.6 352.8L1235.8 347.1L1252.9 344.1L1254.8 343.3L1237.7 344.1L1233.9 350.9L1231.3 360.3ZM1277.5 354.7L1285.1 351.6L1290.8 358.4L1302.1 354.7L1315.4 358.8L1315.4 383.4L1307.8 379.6L1303.3 380.8L1304.0 373.6L1292.7 366.0L1285.1 364.1L1281.3 359.6ZM1216.8 379.6L1220.6 381.1L1232.0 381.1L1243.4 380.4L1247.2 381.5L1235.8 383.0L1222.5 383.0ZM1232.0 385.3L1238.8 387.6L1235.8 386.8ZM1251.0 384.2L1255.9 380.4L1263.5 380.8L1252.9 387.6ZM1258.5 360.3L1266.1 361.1L1262.3 363.4ZM1264.2 343.3L1268.0 345.2L1266.1 350.9L1264.2 347.1ZM1271.8 359.6L1277.5 361.1L1273.7 362.2Z" stroke-width="3.3"/><path d="M1315.4 358.8L1326.8 363.4L1334.3 369.8L1340.0 372.4L1338.1 378.5L1345.7 384.9L1352.5 387.9L1340.0 387.6L1334.3 381.1L1326.8 378.1L1323.0 383.4L1315.4 383.4ZM1343.8 369.8L1353.3 367.9L1357.1 364.9L1351.4 372.8ZM1353.3 359.6L1359.0 362.2L1360.9 366.0ZM1366.6 369.8L1370.3 371.7L1368.5 373.6Z" stroke-width="3.3"/><path d="M1235.8 279.1L1244.1 279.1L1243.4 288.5L1241.5 294.2L1245.3 296.1L1251.0 299.9L1249.1 301.8L1241.5 296.8L1237.7 294.2L1235.0 287.4ZM1243.4 322.5L1249.1 316.9L1256.6 313.1L1260.4 322.5L1256.6 327.5L1251.0 324.4ZM1225.2 317.6L1233.9 306.3L1230.1 313.1ZM1245.3 309.3L1249.1 307.4L1247.2 313.1ZM1252.9 305.5L1256.6 301.8L1254.8 311.2ZM1239.6 301.8L1241.5 298.0L1237.7 298.7Z" stroke-width="3.3"/><path d="M1252.9 382.6L1263.5 380.8L1254.8 384.9Z" stroke-width="3.3"/><path d="M1173.6 344.1L1175.2 343.7L1174.8 344.5Z" stroke-width="3.3"/><path d="M1213.4 431.4L1222.5 427.6L1232.0 424.6L1239.6 422.7L1244.1 417.0L1245.3 412.5L1249.1 411.4L1254.8 403.8L1262.3 401.2L1266.9 405.7L1271.8 405.3L1273.7 398.1L1277.5 395.1L1283.6 392.5L1287.0 394.4L1292.7 395.1L1299.9 395.5L1296.4 400.0L1294.5 405.7L1302.1 410.6L1305.9 412.5L1313.5 415.5L1317.3 405.7L1317.7 396.2L1321.1 389.4L1324.9 397.8L1328.7 403.8L1331.7 405.7L1332.4 413.3L1335.5 420.1L1343.8 425.4L1345.7 428.4L1352.5 434.4L1357.1 441.6L1360.9 444.3L1361.6 451.1L1363.1 457.1L1360.9 466.2L1359.0 471.9L1355.2 473.7L1352.5 479.4L1350.3 483.6L1349.5 490.8L1341.2 492.3L1335.9 496.8L1329.8 492.3L1324.9 495.7L1314.3 492.6L1310.5 489.6L1307.8 483.9L1304.0 483.9L1305.9 479.4L1304.0 477.5L1303.3 472.2L1302.1 473.7L1300.2 480.5L1296.4 481.3L1293.8 479.8L1292.7 475.6L1289.6 473.0L1278.2 468.1L1266.1 469.2L1258.5 471.1L1251.0 473.7L1249.1 477.1L1235.8 477.1L1228.2 481.3L1220.6 481.3L1216.8 478.7L1219.1 474.9L1219.5 468.1L1216.8 462.4L1216.5 458.6L1213.1 453.0L1210.8 449.2L1210.0 448.0L1212.3 445.4L1211.2 439.7L1211.9 434.0ZM1329.0 502.8L1336.2 504.4L1343.1 503.6L1341.9 512.3L1337.4 513.8L1331.3 508.9Z" stroke-width="3.3"/><path d="M1435.5 479.0L1441.6 483.2L1444.2 488.1L1447.7 490.8L1451.8 492.3L1457.5 491.5L1455.2 497.2L1451.1 500.6L1445.0 506.2L1442.7 499.4L1439.7 497.2L1442.7 489.6ZM1435.5 502.1L1441.6 505.1L1438.6 510.0L1435.2 514.6L1429.8 517.2L1427.6 522.5L1421.5 525.1L1412.0 522.9L1418.9 515.3L1427.2 511.5L1432.1 505.9Z" stroke-width="3.3"/><path d="M1402.6 425.4L1413.9 433.3L1406.3 430.3ZM1453.0 415.1L1457.9 413.3L1456.8 417.8L1453.3 417.4ZM1383.6 379.2L1389.3 384.9L1385.5 384.2ZM1389.3 383.0L1393.1 386.0L1391.2 381.1ZM1412.0 405.7L1413.9 407.6L1412.8 404.2ZM1376.0 375.5L1381.7 377.7L1377.9 380.0Z" stroke-width="3.3"/><path d="M758.6 213.7L772.7 216.3L774.6 220.5L774.6 226.1L767.4 229.2L761.3 235.6L748.0 240.5L748.0 244.3L748.0 250.7L735.5 250.7L735.5 260.2L731.4 262.8L731.7 268.5L716.6 268.5L718.5 263.9L724.2 256.4L726.0 250.3L731.0 244.3L737.4 242.0L743.9 237.1L743.9 230.3L748.8 223.1L755.2 220.1Z" stroke-width="3.3"/><path d="M772.7 216.3L784.8 211.0L796.2 209.5L813.6 209.5L812.8 215.9L812.5 220.5L809.4 223.5L817.0 234.8L818.5 245.1L817.0 250.0L820.0 256.4L826.1 260.2L809.4 270.4L803.0 275.7L796.9 276.4L793.5 277.2L784.8 269.6L762.4 255.6L748.0 245.8L748.0 244.3L748.0 240.5L761.3 235.6L767.4 229.2L774.6 226.1L774.6 220.5Z" stroke-width="3.3"/><path d="M813.6 209.5L820.0 208.0L823.1 209.5L820.8 214.8L823.1 215.9L818.9 219.7L824.6 223.9L824.6 226.5L820.0 229.9L817.0 234.8L809.4 223.5L812.5 220.5L812.8 215.9Z" stroke-width="3.3"/><path d="M824.6 223.9L830.3 224.6L838.6 226.9L840.5 230.3L852.6 234.1L856.8 231.8L856.8 227.7L862.5 224.6L868.2 225.8L875.8 229.6L875.8 235.6L875.8 265.8L875.8 273.4L872.0 275.3L841.3 260.5L834.8 263.6L826.1 260.2L820.0 256.4L817.0 250.0L818.5 245.1L817.0 234.8L820.0 229.9L824.6 226.5Z" stroke-width="3.3"/><path d="M875.8 229.6L890.9 232.2L898.5 229.6L903.4 230.7L911.0 230.7L913.3 237.5L909.9 243.9L908.0 241.3L904.6 236.0L908.0 245.1L915.5 258.3L920.9 265.8L900.4 265.8L875.8 265.8L875.8 235.6Z" stroke-width="3.3"/><path d="M875.8 265.8L900.4 265.8L920.9 265.8L922.4 271.5L925.0 281.0L921.2 284.7L919.3 294.9L911.8 307.4L910.2 316.5L906.1 319.5L914.8 328.2L909.9 333.1L908.0 334.6L897.7 335.8L890.9 332.0L884.8 329.7L875.8 320.6L872.0 316.1L870.1 315.0L866.3 309.3L867.8 305.5L863.6 301.4L866.3 296.1L871.6 289.7L872.0 275.3L875.8 273.4Z" stroke-width="3.3"/><path d="M919.3 294.9L921.2 284.7L925.0 281.0L928.8 288.5L936.4 294.2L944.3 301.0L941.7 301.8L932.6 294.2L926.9 294.2L923.1 295.3Z" stroke-width="3.3"/><path d="M941.7 301.8L944.3 301.0L945.5 305.5L943.2 307.4L939.4 307.4Z" stroke-width="3.3"/><path d="M911.8 307.4L919.3 294.9L923.1 295.3L926.9 294.2L932.6 294.2L941.7 301.8L939.4 307.4L943.2 307.4L947.8 315.0L962.5 318.8L951.2 330.1L944.0 330.5L939.4 334.3L932.6 333.9L925.0 335.4L917.1 331.6L914.8 328.2L906.1 319.5L910.2 316.5Z" stroke-width="3.3"/><path d="M943.2 307.4L945.9 306.3L951.5 309.3L962.9 306.7L975.4 304.4L974.3 309.7L972.4 315.0L968.6 324.4L964.8 330.1L957.2 339.6L945.9 347.1L938.3 355.4L936.4 352.8L936.4 338.4L939.4 334.3L944.0 330.5L951.2 330.1L962.5 318.8L947.8 315.0Z" stroke-width="3.3"/><path d="M938.3 355.4L933.4 359.2L929.6 366.8L923.9 360.3L909.9 352.8L909.9 345.2L912.9 341.4L909.9 333.1L917.1 331.6L925.0 335.4L932.6 333.9L939.4 334.3L936.4 338.4L936.4 352.8Z" stroke-width="3.3"/><path d="M893.6 354.3L896.6 352.8L909.5 352.8L909.9 345.2L912.9 341.4L909.9 333.1L908.0 334.6L897.7 335.8L894.7 343.3L893.2 349.0Z" stroke-width="3.3"/><path d="M890.9 354.3L896.6 352.8L897.7 357.7L890.9 359.6Z" stroke-width="3.3"/><path d="M890.9 359.6L897.7 357.7L896.6 365.6L892.0 365.6Z" stroke-width="3.3"/><path d="M896.6 352.8L909.5 352.8L909.9 352.8L923.9 360.3L929.6 366.8L928.1 373.6L930.7 379.2L934.5 388.7L923.1 392.8L913.7 392.5L911.8 384.9L906.1 384.5L898.5 381.1L896.6 380.4L892.8 371.7L892.0 365.6L896.6 365.6L897.7 357.7Z" stroke-width="3.3"/><path d="M827.2 371.7L830.3 371.3L842.8 371.3L847.3 379.2L853.0 379.2L863.6 376.6L864.4 386.8L872.0 390.6L877.6 391.3L885.2 394.4L889.0 398.1L892.8 399.3L893.9 395.1L889.0 392.5L889.0 381.1L896.6 380.4L892.8 371.7L892.0 365.6L890.9 359.6L890.9 354.3L893.6 354.3L893.2 349.0L894.7 343.3L897.7 335.8L890.9 332.0L884.8 329.7L875.8 330.1L866.3 333.1L858.7 332.0L851.1 335.8L851.1 341.4L847.3 352.8L841.6 358.4L834.1 366.0L829.5 367.1Z" stroke-width="3.3"/><path d="M823.4 363.7L829.5 367.1L834.1 366.0L841.6 358.4L847.3 352.8L851.1 341.4L851.1 335.8L843.5 335.4L841.6 341.4L831.4 340.7L835.2 343.7L830.3 358.1L825.7 358.4Z" stroke-width="3.3"/><path d="M816.2 345.2L818.1 340.7L823.8 340.7L831.4 340.7L835.2 343.7L830.3 358.1L825.7 358.4L823.4 363.7L815.1 354.7L816.2 349.0Z" stroke-width="3.3"/><path d="M818.1 340.7L823.8 340.7L823.8 345.2L816.2 345.2Z" stroke-width="3.3"/><path d="M813.2 332.0L818.1 340.7L823.8 340.7L831.4 340.7L841.6 341.4L843.5 335.4L837.8 333.9L836.0 326.3L839.7 320.6L834.1 311.2L839.7 311.2L834.8 302.1L836.0 299.9L832.2 301.8L832.2 309.3L825.7 322.5L818.9 322.5L814.4 328.2Z" stroke-width="3.3"/><path d="M836.0 326.3L837.8 333.9L843.5 335.4L851.1 335.8L858.7 332.0L866.3 333.1L875.8 330.1L884.8 329.7L875.8 320.6L872.0 316.1L870.1 315.0L866.3 309.3L860.6 313.1L853.0 315.0L841.6 320.6L839.7 320.6Z" stroke-width="3.3"/><path d="M841.3 260.5L872.0 275.3L871.6 289.7L866.3 296.1L863.6 301.4L867.8 305.5L866.3 309.3L860.6 313.1L853.0 315.0L841.6 320.6L839.7 320.6L834.1 311.2L839.7 311.2L834.8 302.1L836.0 299.9L832.5 296.5L837.8 288.5L840.5 273.8L834.8 263.6Z" stroke-width="3.3"/><path d="M796.9 276.4L803.0 275.7L809.4 270.4L826.1 260.2L834.8 263.6L840.5 273.8L837.8 288.5L832.5 296.5L828.4 299.1L818.9 298.7L807.5 299.9L796.2 298.0L794.6 304.8L790.5 302.5L784.8 299.9L781.8 292.7L794.3 290.8L796.9 285.1Z" stroke-width="3.3"/><path d="M762.4 255.6L784.8 269.6L793.5 277.2L796.9 276.4L796.9 285.1L794.3 290.8L781.8 292.7L779.1 291.5L773.4 294.2L769.6 297.6L764.7 301.0L760.5 309.7L752.2 310.1L749.5 307.4L745.8 302.5L739.3 302.9L737.8 302.1L734.8 293.8L736.7 290.8L760.2 290.4L760.2 286.6L756.4 254.9Z" stroke-width="3.3"/><path d="M716.6 268.5L731.7 268.5L731.4 262.8L735.5 260.2L735.5 250.7L748.0 250.7L748.0 245.8L762.4 255.6L756.4 254.9L760.2 286.6L760.2 290.4L736.7 290.8L734.8 293.8L727.9 286.3L718.5 287.8L720.4 279.1Z" stroke-width="3.3"/><path d="M718.5 287.8L727.9 286.3L734.8 293.8L737.8 302.1L729.1 301.4L717.7 302.1L714.7 293.4Z" stroke-width="3.3"/><path d="M717.7 302.1L729.1 301.4L729.1 304.4L724.2 307.4Z" stroke-width="3.3"/><path d="M729.1 301.4L737.8 302.1L739.3 302.9L745.8 302.5L749.5 307.4L752.2 310.1L750.7 316.9L745.0 316.9L742.0 316.9L740.1 312.3L730.6 313.1L724.2 307.4L729.1 304.4Z" stroke-width="3.3"/><path d="M730.6 313.1L740.1 312.3L742.0 316.9L737.4 322.9L731.7 319.5Z" stroke-width="3.3"/><path d="M737.4 322.9L742.0 316.9L745.0 316.9L748.8 320.6L752.6 332.4L746.9 330.1Z" stroke-width="3.3"/><path d="M752.6 332.4L748.8 320.6L750.7 316.9L752.2 310.1L760.5 309.7L764.7 312.7L770.8 312.3L770.8 330.1L769.6 329.7L762.0 329.7Z" stroke-width="3.3"/><path d="M760.5 309.7L760.2 305.9L764.7 301.0L769.6 297.6L773.4 294.2L779.1 291.5L781.8 292.7L784.8 299.9L790.5 302.5L784.8 307.4L780.6 307.0L770.8 307.4L770.8 312.3L764.7 312.7Z" stroke-width="3.3"/><path d="M769.6 329.7L770.8 330.1L770.8 312.3L770.8 307.4L780.6 307.0L782.9 309.3L782.1 318.8L785.5 325.9L779.1 328.6L773.4 330.9Z" stroke-width="3.3"/><path d="M785.5 325.9L782.1 318.8L782.9 309.3L780.6 307.0L784.4 307.4L787.1 315.0L787.1 325.6Z" stroke-width="3.3"/><path d="M787.1 325.6L787.1 315.0L784.4 307.4L784.8 307.4L790.5 302.5L794.6 304.8L791.2 315.0L791.2 324.8Z" stroke-width="3.3"/><path d="M791.2 324.8L791.2 315.0L794.6 304.8L796.2 298.0L807.5 299.9L818.9 298.7L828.4 299.1L832.5 296.5L836.0 299.9L832.2 301.8L832.2 309.3L825.7 322.5L818.9 322.5L814.4 328.2L813.2 332.0L807.5 332.4L803.4 332.7L798.1 325.2Z" stroke-width="3.3"/><path d="M825.7 414.0L831.8 412.9L841.6 414.8L851.1 414.8L860.6 417.0L869.7 415.5L864.4 409.5L864.4 398.1L872.0 398.1L872.0 390.6L864.4 386.8L863.6 376.6L853.0 379.2L847.3 379.2L842.8 371.3L830.3 371.3L827.2 371.7L831.0 382.3L830.3 390.6L827.2 400.0Z" stroke-width="3.3"/><path d="M864.4 398.1L864.4 409.5L869.7 415.5L876.9 416.3L883.3 416.7L889.8 410.6L896.2 408.3L906.1 401.9L907.2 395.5L906.1 384.5L898.5 381.1L896.6 380.4L889.0 381.1L889.0 392.5L893.9 395.1L892.8 399.3L889.0 398.1L885.2 394.4L877.6 391.3L872.0 390.6L872.0 398.1Z" stroke-width="3.3"/><path d="M906.1 384.5L911.8 384.9L913.7 392.5L915.5 403.8L914.8 413.6L911.8 405.7L907.2 401.9L907.2 395.5Z" stroke-width="3.3"/><path d="M934.5 388.7L934.5 403.8L928.8 413.3L919.3 420.8L913.7 432.2L915.9 438.6L905.7 447.3L902.3 450.3L899.6 433.7L904.2 428.4L906.1 420.8L905.3 411.4L896.2 408.3L906.1 401.9L907.2 401.9L911.8 405.7L914.8 413.6L915.5 403.8L913.7 392.5L923.1 392.8Z" stroke-width="3.3"/><path d="M876.9 416.3L883.3 416.7L889.8 410.6L896.2 408.3L905.3 411.4L906.1 420.8L904.2 428.4L899.6 433.7L892.4 432.9L887.1 430.3L879.5 422.7Z" stroke-width="3.3"/><path d="M856.8 432.2L856.8 442.7L860.2 450.3L866.3 447.3L877.6 445.4L883.3 438.6L892.4 432.9L887.1 430.3L879.5 422.7L876.9 416.3L869.7 415.5L860.6 418.2L860.6 432.2Z" stroke-width="3.3"/><path d="M825.7 414.0L831.8 412.9L841.6 414.8L851.1 414.8L860.6 417.0L869.7 415.5L876.9 416.3L869.7 416.7L860.6 418.2L860.6 432.2L856.8 432.2L856.8 442.7L856.8 456.4L843.5 457.1L838.6 449.2L836.0 434.0L830.3 424.6Z" stroke-width="3.3"/><path d="M843.5 457.1L856.8 456.4L860.2 450.3L866.3 447.3L877.6 445.4L883.3 438.6L892.4 432.9L899.6 433.7L902.3 450.3L905.7 450.7L904.2 456.7L898.5 462.4L894.7 467.3L887.1 472.6L878.0 477.5L866.3 477.5L856.8 480.5L850.7 478.3L849.2 470.0L846.6 462.4Z" stroke-width="3.3"/><path d="M883.3 460.9L889.0 457.1L892.4 460.1L887.1 464.7Z" stroke-width="3.3"/><path d="M898.5 446.5L902.3 450.3L899.6 452.2L897.7 449.2Z" stroke-width="3.3"/><path d="M967.8 394.4L972.4 407.6L968.6 415.1L962.9 432.2L959.5 443.1L952.3 445.4L946.6 435.9L945.1 430.3L949.3 420.8L947.8 413.3L957.2 408.3L962.9 400.0Z" stroke-width="3.3"/><path d="M720.4 243.2L722.6 242.4L721.9 243.9ZM716.6 241.6L719.6 240.9L718.1 243.2ZM728.7 239.4L730.2 238.6L728.3 240.5ZM685.1 284.7L687.0 285.5L691.9 292.3L690.8 291.2ZM998.2 424.6L1000.1 425.4L998.9 426.5ZM990.2 428.4L992.5 429.1L991.3 429.9ZM944.7 392.1L945.9 394.0L949.3 395.1ZM801.8 347.9L806.4 347.9L805.6 349.0ZM813.2 334.6L814.7 335.4L814.0 336.9ZM682.5 205.7L685.5 206.5L684.0 206.9ZM673.0 203.1L676.8 202.7L674.9 203.8ZM716.6 224.6L717.7 225.4L715.8 225.8Z" stroke-width="3.3"/><path d="M128.0 402.3L131.8 402.3L129.9 399.7ZM173.5 430.3L177.3 430.3L175.4 427.6ZM212.5 416.7L216.3 416.7L214.4 414.0ZM248.5 383.8L252.3 383.8L250.4 381.1ZM115.1 430.3L118.9 430.3L117.0 427.6ZM103.7 414.8L109.0 414.8L106.4 411.1ZM1415.4 412.7L1420.0 412.7L1417.7 409.6ZM1410.5 408.2L1415.1 408.2L1412.8 405.0ZM1434.8 344.5L1438.6 344.5L1436.7 341.8ZM1378.7 324.1L1382.5 324.1L1380.6 321.4ZM1288.9 321.8L1292.7 321.8L1290.8 319.1ZM1331.3 292.7L1335.1 292.7L1333.2 290.0ZM1413.9 316.1L1417.7 316.1L1415.8 313.5ZM1428.0 323.3L1431.7 323.3L1429.8 320.6ZM182.6 343.0L186.3 343.0L184.5 340.3ZM1458.3 382.3L1462.1 382.3L1460.2 379.6Z" stroke-width="3.3"/><path d="M150.0 145.3L156.0 144.1L152.2 142.6ZM142.4 149.0L146.2 147.5L144.3 146.8ZM165.1 141.5L168.9 140.7L167.0 139.6Z" stroke-width="3.3"/><path d="M1039.5 259.4L1042.5 264.7L1048.2 270.4L1055.8 269.6L1056.9 277.2L1059.6 288.5L1063.4 299.9L1067.1 305.5L1069.0 311.2L1074.7 318.4L1078.5 315.0L1080.4 313.8L1083.4 309.3L1085.3 298.7L1085.3 290.4L1092.9 286.3L1101.3 277.9L1110.4 270.4L1112.6 266.6L1118.3 266.6L1118.3 263.9L1117.2 257.1L1115.3 253.7L1121.3 250.7L1129.7 254.5L1130.8 257.5L1127.8 262.1L1131.6 263.9L1134.6 258.3L1139.2 256.4L1141.0 250.7L1149.4 246.2L1145.6 241.6L1137.3 239.4L1128.2 243.9L1129.7 247.3L1118.3 247.7L1115.3 249.2L1103.2 248.5L1095.6 245.4L1084.6 240.1L1088.4 234.8L1080.4 229.9L1079.7 228.8L1081.5 224.3L1076.6 218.6L1072.8 214.8L1067.1 216.7L1061.5 219.3L1064.1 226.1L1063.4 231.8L1059.6 236.0L1050.1 243.9L1046.3 248.8L1048.2 252.6L1041.8 257.1Z" stroke-width="3.3"/><path d="M1084.6 240.1L1095.6 245.4L1103.2 248.5L1115.3 249.2L1115.3 243.5L1106.9 243.2L1097.5 238.6L1088.4 234.8Z" stroke-width="3.3"/><path d="M1118.3 247.7L1129.7 247.3L1128.2 243.9L1120.2 242.4Z" stroke-width="3.3"/><path d="M1118.3 266.6L1124.0 265.8L1128.9 264.7L1130.8 269.6L1132.0 265.8L1131.6 263.9L1127.8 262.1L1130.8 257.5L1129.7 254.5L1121.3 250.7L1115.3 253.7L1117.2 257.1L1118.3 263.9Z" stroke-width="3.3"/><path d="M1083.4 318.0L1085.0 312.0L1089.1 316.9L1091.4 320.6L1088.7 325.6L1084.2 325.6Z" stroke-width="3.3"/><path d="M1132.0 268.9L1135.4 275.3L1138.4 288.5L1142.9 289.3L1150.5 285.5L1151.7 294.2L1154.7 304.8L1154.7 311.2L1157.0 305.5L1156.2 299.9L1153.2 292.3L1154.7 287.8L1150.1 279.1L1152.4 274.5L1158.1 272.6L1160.4 271.9L1164.5 268.9L1160.8 267.7L1156.2 265.5L1158.1 262.4L1155.1 258.7L1150.9 258.7L1155.1 251.1L1155.1 245.1L1150.5 242.0L1145.6 241.6L1149.4 246.2L1141.0 250.7L1139.2 256.4L1134.6 258.3L1131.6 263.9Z" stroke-width="3.3"/><path d="M1190.3 267.4L1185.4 271.5L1182.0 277.2L1184.6 282.9L1193.4 290.8L1195.2 299.9L1193.7 306.3L1186.5 309.7L1178.2 316.5L1178.6 309.7L1183.5 307.4L1188.4 302.5L1188.4 294.6L1187.7 288.5L1184.6 285.5L1179.7 279.1L1175.9 274.9L1175.2 270.4L1168.0 264.3L1171.4 263.6L1180.8 260.9L1185.4 262.8Z" stroke-width="3.3"/><path d="M1168.0 264.3L1175.2 270.4L1175.9 274.9L1179.7 279.1L1184.6 285.5L1187.7 288.5L1188.4 294.6L1182.4 296.1L1180.8 290.4L1178.2 286.6L1171.4 281.3L1165.7 282.1L1163.8 275.3L1160.4 271.9L1164.5 268.9L1166.1 268.9Z" stroke-width="3.3"/><path d="M1169.5 302.9L1172.1 308.2L1177.1 309.7L1178.6 309.7L1183.5 307.4L1188.4 302.5L1188.4 294.6L1182.4 296.1L1171.0 294.9Z" stroke-width="3.3"/><path d="M1160.4 271.9L1163.8 275.3L1165.7 282.1L1171.4 281.3L1178.2 286.6L1180.8 290.4L1182.4 296.1L1171.0 294.9L1169.5 302.9L1163.8 301.0L1160.0 298.0L1157.0 309.3L1161.1 317.6L1163.8 322.9L1168.0 325.6L1160.8 324.4L1153.6 318.0L1154.7 311.2L1157.0 305.5L1156.2 299.9L1153.2 292.3L1154.7 287.8L1150.1 279.1L1152.4 274.5L1158.1 272.6Z" stroke-width="3.3"/><path d="M1160.8 324.4L1168.0 325.6L1173.3 332.0L1172.9 337.7L1175.9 341.4L1173.3 344.1L1164.9 338.4L1161.5 332.0ZM1196.4 342.2L1201.7 343.3L1209.3 336.9L1218.7 330.1L1224.4 322.5L1232.8 328.6L1227.5 333.1L1218.7 333.1L1215.0 339.6L1207.4 343.3L1201.7 345.2Z" stroke-width="3.3"/><path d="M1193.7 343.3L1196.4 342.2L1201.7 345.2L1207.4 343.3L1215.0 339.6L1218.7 333.1L1227.5 333.1L1228.2 345.2L1226.3 349.0L1222.5 356.6L1220.6 363.7L1215.0 364.1L1209.3 361.1L1201.7 360.3L1197.9 354.7L1194.1 349.0ZM1142.2 327.8L1150.5 329.3L1154.3 333.9L1161.5 340.3L1167.6 345.2L1174.0 352.8L1179.0 358.4L1182.7 361.1L1182.0 370.9L1177.1 371.3L1168.7 364.1L1161.1 352.8L1154.7 342.6L1144.8 333.9ZM1179.7 374.7L1182.7 371.3L1191.5 372.4L1199.8 375.1L1208.1 375.1L1215.0 378.5L1214.6 381.9L1201.7 380.0L1190.3 378.5L1184.3 377.0ZM1232.0 369.8L1237.7 369.8L1238.8 359.2L1241.5 366.0L1247.2 366.0L1241.5 356.6L1247.2 352.8L1239.6 352.8L1235.8 347.1L1252.9 344.1L1254.8 343.3L1237.7 344.1L1233.9 350.9L1231.3 360.3ZM1277.5 354.7L1285.1 351.6L1290.8 358.4L1302.1 354.7L1315.4 358.8L1315.4 383.4L1307.8 379.6L1303.3 380.8L1304.0 373.6L1292.7 366.0L1285.1 364.1L1281.3 359.6ZM1216.8 379.6L1220.6 381.1L1232.0 381.1L1243.4 380.4L1247.2 381.5L1235.8 383.0L1222.5 383.0ZM1232.0 385.3L1238.8 387.6L1235.8 386.8ZM1251.0 384.2L1255.9 380.4L1263.5 380.8L1252.9 387.6ZM1258.5 360.3L1266.1 361.1L1262.3 363.4ZM1264.2 343.3L1268.0 345.2L1266.1 350.9L1264.2 347.1ZM1271.8 359.6L1277.5 361.1L1273.7 362.2Z" stroke-width="3.3"/><path d="M1315.4 358.8L1326.8 363.4L1334.3 369.8L1340.0 372.4L1338.1 378.5L1345.7 384.9L1352.5 387.9L1340.0 387.6L1334.3 381.1L1326.8 378.1L1323.0 383.4L1315.4 383.4ZM1343.8 369.8L1353.3 367.9L1357.1 364.9L1351.4 372.8ZM1353.3 359.6L1359.0 362.2L1360.9 366.0ZM1366.6 369.8L1370.3 371.7L1368.5 373.6Z" stroke-width="3.3"/><path d="M1235.8 279.1L1244.1 279.1L1243.4 288.5L1241.5 294.2L1245.3 296.1L1251.0 299.9L1249.1 301.8L1241.5 296.8L1237.7 294.2L1235.0 287.4ZM1243.4 322.5L1249.1 316.9L1256.6 313.1L1260.4 322.5L1256.6 327.5L1251.0 324.4ZM1225.2 317.6L1233.9 306.3L1230.1 313.1ZM1245.3 309.3L1249.1 307.4L1247.2 313.1ZM1252.9 305.5L1256.6 301.8L1254.8 311.2ZM1239.6 301.8L1241.5 298.0L1237.7 298.7Z" stroke-width="3.3"/><path d="M1252.9 382.6L1263.5 380.8L1254.8 384.9Z" stroke-width="3.3"/><path d="M1173.6 344.1L1175.2 343.7L1174.8 344.5Z" stroke-width="3.3"/><path d="M1213.4 431.4L1222.5 427.6L1232.0 424.6L1239.6 422.7L1244.1 417.0L1245.3 412.5L1249.1 411.4L1254.8 403.8L1262.3 401.2L1266.9 405.7L1271.8 405.3L1273.7 398.1L1277.5 395.1L1283.6 392.5L1287.0 394.4L1292.7 395.1L1299.9 395.5L1296.4 400.0L1294.5 405.7L1302.1 410.6L1305.9 412.5L1313.5 415.5L1317.3 405.7L1317.7 396.2L1321.1 389.4L1324.9 397.8L1328.7 403.8L1331.7 405.7L1332.4 413.3L1335.5 420.1L1343.8 425.4L1345.7 428.4L1352.5 434.4L1357.1 441.6L1360.9 444.3L1361.6 451.1L1363.1 457.1L1360.9 466.2L1359.0 471.9L1355.2 473.7L1352.5 479.4L1350.3 483.6L1349.5 490.8L1341.2 492.3L1335.9 496.8L1329.8 492.3L1324.9 495.7L1314.3 492.6L1310.5 489.6L1307.8 483.9L1304.0 483.9L1305.9 479.4L1304.0 477.5L1303.3 472.2L1302.1 473.7L1300.2 480.5L1296.4 481.3L1293.8 479.8L1292.7 475.6L1289.6 473.0L1278.2 468.1L1266.1 469.2L1258.5 471.1L1251.0 473.7L1249.1 477.1L1235.8 477.1L1228.2 481.3L1220.6 481.3L1216.8 478.7L1219.1 474.9L1219.5 468.1L1216.8 462.4L1216.5 458.6L1213.1 453.0L1210.8 449.2L1210.0 448.0L1212.3 445.4L1211.2 439.7L1211.9 434.0ZM1329.0 502.8L1336.2 504.4L1343.1 503.6L1341.9 512.3L1337.4 513.8L1331.3 508.9Z" stroke-width="3.3"/><path d="M1435.5 479.0L1441.6 483.2L1444.2 488.1L1447.7 490.8L1451.8 492.3L1457.5 491.5L1455.2 497.2L1451.1 500.6L1445.0 506.2L1442.7 499.4L1439.7 497.2L1442.7 489.6ZM1435.5 502.1L1441.6 505.1L1438.6 510.0L1435.2 514.6L1429.8 517.2L1427.6 522.5L1421.5 525.1L1412.0 522.9L1418.9 515.3L1427.2 511.5L1432.1 505.9Z" stroke-width="3.3"/><path d="M1402.6 425.4L1413.9 433.3L1406.3 430.3ZM1453.0 415.1L1457.9 413.3L1456.8 417.8L1453.3 417.4ZM1383.6 379.2L1389.3 384.9L1385.5 384.2ZM1389.3 383.0L1393.1 386.0L1391.2 381.1ZM1412.0 405.7L1413.9 407.6L1412.8 404.2ZM1376.0 375.5L1381.7 377.7L1377.9 380.0Z" stroke-width="3.3"/><path d="M758.6 213.7L772.7 216.3L774.6 220.5L774.6 226.1L767.4 229.2L761.3 235.6L748.0 240.5L748.0 244.3L748.0 250.7L735.5 250.7L735.5 260.2L731.4 262.8L731.7 268.5L716.6 268.5L718.5 263.9L724.2 256.4L726.0 250.3L731.0 244.3L737.4 242.0L743.9 237.1L743.9 230.3L748.8 223.1L755.2 220.1Z" stroke-width="3.3"/><path d="M772.7 216.3L784.8 211.0L796.2 209.5L813.6 209.5L812.8 215.9L812.5 220.5L809.4 223.5L817.0 234.8L818.5 245.1L817.0 250.0L820.0 256.4L826.1 260.2L809.4 270.4L803.0 275.7L796.9 276.4L793.5 277.2L784.8 269.6L762.4 255.6L748.0 245.8L748.0 244.3L748.0 240.5L761.3 235.6L767.4 229.2L774.6 226.1L774.6 220.5Z" stroke-width="3.3"/><path d="M813.6 209.5L820.0 208.0L823.1 209.5L820.8 214.8L823.1 215.9L818.9 219.7L824.6 223.9L824.6 226.5L820.0 229.9L817.0 234.8L809.4 223.5L812.5 220.5L812.8 215.9Z" stroke-width="3.3"/><path d="M824.6 223.9L830.3 224.6L838.6 226.9L840.5 230.3L852.6 234.1L856.8 231.8L856.8 227.7L862.5 224.6L868.2 225.8L875.8 229.6L875.8 235.6L875.8 265.8L875.8 273.4L872.0 275.3L841.3 260.5L834.8 263.6L826.1 260.2L820.0 256.4L817.0 250.0L818.5 245.1L817.0 234.8L820.0 229.9L824.6 226.5Z" stroke-width="3.3"/><path d="M875.8 229.6L890.9 232.2L898.5 229.6L903.4 230.7L911.0 230.7L913.3 237.5L909.9 243.9L908.0 241.3L904.6 236.0L908.0 245.1L915.5 258.3L920.9 265.8L900.4 265.8L875.8 265.8L875.8 235.6Z" stroke-width="3.3"/><path d="M875.8 265.8L900.4 265.8L920.9 265.8L922.4 271.5L925.0 281.0L921.2 284.7L919.3 294.9L911.8 307.4L910.2 316.5L906.1 319.5L914.8 328.2L909.9 333.1L908.0 334.6L897.7 335.8L890.9 332.0L884.8 329.7L875.8 320.6L872.0 316.1L870.1 315.0L866.3 309.3L867.8 305.5L863.6 301.4L866.3 296.1L871.6 289.7L872.0 275.3L875.8 273.4Z" stroke-width="3.3"/><path d="M919.3 294.9L921.2 284.7L925.0 281.0L928.8 288.5L936.4 294.2L944.3 301.0L941.7 301.8L932.6 294.2L926.9 294.2L923.1 295.3Z" stroke-width="3.3"/><path d="M941.7 301.8L944.3 301.0L945.5 305.5L943.2 307.4L939.4 307.4Z" stroke-width="3.3"/><path d="M911.8 307.4L919.3 294.9L923.1 295.3L926.9 294.2L932.6 294.2L941.7 301.8L939.4 307.4L943.2 307.4L947.8 315.0L962.5 318.8L951.2 330.1L944.0 330.5L939.4 334.3L932.6 333.9L925.0 335.4L917.1 331.6L914.8 328.2L906.1 319.5L910.2 316.5Z" stroke-width="3.3"/><path d="M943.2 307.4L945.9 306.3L951.5 309.3L962.9 306.7L975.4 304.4L974.3 309.7L972.4 315.0L968.6 324.4L964.8 330.1L957.2 339.6L945.9 347.1L938.3 355.4L936.4 352.8L936.4 338.4L939.4 334.3L944.0 330.5L951.2 330.1L962.5 318.8L947.8 315.0Z" stroke-width="3.3"/><path d="M938.3 355.4L933.4 359.2L929.6 366.8L923.9 360.3L909.9 352.8L909.9 345.2L912.9 341.4L909.9 333.1L917.1 331.6L925.0 335.4L932.6 333.9L939.4 334.3L936.4 338.4L936.4 352.8Z" stroke-width="3.3"/><path d="M893.6 354.3L896.6 352.8L909.5 352.8L909.9 345.2L912.9 341.4L909.9 333.1L908.0 334.6L897.7 335.8L894.7 343.3L893.2 349.0Z" stroke-width="3.3"/><path d="M890.9 354.3L896.6 352.8L897.7 357.7L890.9 359.6Z" stroke-width="3.3"/><path d="M890.9 359.6L897.7 357.7L896.6 365.6L892.0 365.6Z" stroke-width="3.3"/><path d="M896.6 352.8L909.5 352.8L909.9 352.8L923.9 360.3L929.6 366.8L928.1 373.6L930.7 379.2L934.5 388.7L923.1 392.8L913.7 392.5L911.8 384.9L906.1 384.5L898.5 381.1L896.6 380.4L892.8 371.7L892.0 365.6L896.6 365.6L897.7 357.7Z" stroke-width="3.3"/><path d="M827.2 371.7L830.3 371.3L842.8 371.3L847.3 379.2L853.0 379.2L863.6 376.6L864.4 386.8L872.0 390.6L877.6 391.3L885.2 394.4L889.0 398.1L892.8 399.3L893.9 395.1L889.0 392.5L889.0 381.1L896.6 380.4L892.8 371.7L892.0 365.6L890.9 359.6L890.9 354.3L893.6 354.3L893.2 349.0L894.7 343.3L897.7 335.8L890.9 332.0L884.8 329.7L875.8 330.1L866.3 333.1L858.7 332.0L851.1 335.8L851.1 341.4L847.3 352.8L841.6 358.4L834.1 366.0L829.5 367.1Z" stroke-width="3.3"/><path d="M823.4 363.7L829.5 367.1L834.1 366.0L841.6 358.4L847.3 352.8L851.1 341.4L851.1 335.8L843.5 335.4L841.6 341.4L831.4 340.7L835.2 343.7L830.3 358.1L825.7 358.4Z" stroke-width="3.3"/><path d="M816.2 345.2L818.1 340.7L823.8 340.7L831.4 340.7L835.2 343.7L830.3 358.1L825.7 358.4L823.4 363.7L815.1 354.7L816.2 349.0Z" stroke-width="3.3"/><path d="M818.1 340.7L823.8 340.7L823.8 345.2L816.2 345.2Z" stroke-width="3.3"/><path d="M813.2 332.0L818.1 340.7L823.8 340.7L831.4 340.7L841.6 341.4L843.5 335.4L837.8 333.9L836.0 326.3L839.7 320.6L834.1 311.2L839.7 311.2L834.8 302.1L836.0 299.9L832.2 301.8L832.2 309.3L825.7 322.5L818.9 322.5L814.4 328.2Z" stroke-width="3.3"/><path d="M836.0 326.3L837.8 333.9L843.5 335.4L851.1 335.8L858.7 332.0L866.3 333.1L875.8 330.1L884.8 329.7L875.8 320.6L872.0 316.1L870.1 315.0L866.3 309.3L860.6 313.1L853.0 315.0L841.6 320.6L839.7 320.6Z" stroke-width="3.3"/><path d="M841.3 260.5L872.0 275.3L871.6 289.7L866.3 296.1L863.6 301.4L867.8 305.5L866.3 309.3L860.6 313.1L853.0 315.0L841.6 320.6L839.7 320.6L834.1 311.2L839.7 311.2L834.8 302.1L836.0 299.9L832.5 296.5L837.8 288.5L840.5 273.8L834.8 263.6Z" stroke-width="3.3"/><path d="M796.9 276.4L803.0 275.7L809.4 270.4L826.1 260.2L834.8 263.6L840.5 273.8L837.8 288.5L832.5 296.5L828.4 299.1L818.9 298.7L807.5 299.9L796.2 298.0L794.6 304.8L790.5 302.5L784.8 299.9L781.8 292.7L794.3 290.8L796.9 285.1Z" stroke-width="3.3"/><path d="M762.4 255.6L784.8 269.6L793.5 277.2L796.9 276.4L796.9 285.1L794.3 290.8L781.8 292.7L779.1 291.5L773.4 294.2L769.6 297.6L764.7 301.0L760.5 309.7L752.2 310.1L749.5 307.4L745.8 302.5L739.3 302.9L737.8 302.1L734.8 293.8L736.7 290.8L760.2 290.4L760.2 286.6L756.4 254.9Z" stroke-width="3.3"/><path d="M716.6 268.5L731.7 268.5L731.4 262.8L735.5 260.2L735.5 250.7L748.0 250.7L748.0 245.8L762.4 255.6L756.4 254.9L760.2 286.6L760.2 290.4L736.7 290.8L734.8 293.8L727.9 286.3L718.5 287.8L720.4 279.1Z" stroke-width="3.3"/><path d="M718.5 287.8L727.9 286.3L734.8 293.8L737.8 302.1L729.1 301.4L717.7 302.1L714.7 293.4Z" stroke-width="3.3"/><path d="M717.7 302.1L729.1 301.4L729.1 304.4L724.2 307.4Z" stroke-width="3.3"/><path d="M729.1 301.4L737.8 302.1L739.3 302.9L745.8 302.5L749.5 307.4L752.2 310.1L750.7 316.9L745.0 316.9L742.0 316.9L740.1 312.3L730.6 313.1L724.2 307.4L729.1 304.4Z" stroke-width="3.3"/><path d="M730.6 313.1L740.1 312.3L742.0 316.9L737.4 322.9L731.7 319.5Z" stroke-width="3.3"/><path d="M737.4 322.9L742.0 316.9L745.0 316.9L748.8 320.6L752.6 332.4L746.9 330.1Z" stroke-width="3.3"/><path d="M752.6 332.4L748.8 320.6L750.7 316.9L752.2 310.1L760.5 309.7L764.7 312.7L770.8 312.3L770.8 330.1L769.6 329.7L762.0 329.7Z" stroke-width="3.3"/><path d="M760.5 309.7L760.2 305.9L764.7 301.0L769.6 297.6L773.4 294.2L779.1 291.5L781.8 292.7L784.8 299.9L790.5 302.5L784.8 307.4L780.6 307.0L770.8 307.4L770.8 312.3L764.7 312.7Z" stroke-width="3.3"/><path d="M769.6 329.7L770.8 330.1L770.8 312.3L770.8 307.4L780.6 307.0L782.9 309.3L782.1 318.8L785.5 325.9L779.1 328.6L773.4 330.9Z" stroke-width="3.3"/><path d="M785.5 325.9L782.1 318.8L782.9 309.3L780.6 307.0L784.4 307.4L787.1 315.0L787.1 325.6Z" stroke-width="3.3"/><path d="M787.1 325.6L787.1 315.0L784.4 307.4L784.8 307.4L790.5 302.5L794.6 304.8L791.2 315.0L791.2 324.8Z" stroke-width="3.3"/><path d="M791.2 324.8L791.2 315.0L794.6 304.8L796.2 298.0L807.5 299.9L818.9 298.7L828.4 299.1L832.5 296.5L836.0 299.9L832.2 301.8L832.2 309.3L825.7 322.5L818.9 322.5L814.4 328.2L813.2 332.0L807.5 332.4L803.4 332.7L798.1 325.2Z" stroke-width="3.3"/><path d="M825.7 414.0L831.8 412.9L841.6 414.8L851.1 414.8L860.6 417.0L869.7 415.5L864.4 409.5L864.4 398.1L872.0 398.1L872.0 390.6L864.4 386.8L863.6 376.6L853.0 379.2L847.3 379.2L842.8 371.3L830.3 371.3L827.2 371.7L831.0 382.3L830.3 390.6L827.2 400.0Z" stroke-width="3.3"/><path d="M864.4 398.1L864.4 409.5L869.7 415.5L876.9 416.3L883.3 416.7L889.8 410.6L896.2 408.3L906.1 401.9L907.2 395.5L906.1 384.5L898.5 381.1L896.6 380.4L889.0 381.1L889.0 392.5L893.9 395.1L892.8 399.3L889.0 398.1L885.2 394.4L877.6 391.3L872.0 390.6L872.0 398.1Z" stroke-width="3.3"/><path d="M906.1 384.5L911.8 384.9L913.7 392.5L915.5 403.8L914.8 413.6L911.8 405.7L907.2 401.9L907.2 395.5Z" stroke-width="3.3"/><path d="M934.5 388.7L934.5 403.8L928.8 413.3L919.3 420.8L913.7 432.2L915.9 438.6L905.7 447.3L902.3 450.3L899.6 433.7L904.2 428.4L906.1 420.8L905.3 411.4L896.2 408.3L906.1 401.9L907.2 401.9L911.8 405.7L914.8 413.6L915.5 403.8L913.7 392.5L923.1 392.8Z" stroke-width="3.3"/><path d="M876.9 416.3L883.3 416.7L889.8 410.6L896.2 408.3L905.3 411.4L906.1 420.8L904.2 428.4L899.6 433.7L892.4 432.9L887.1 430.3L879.5 422.7Z" stroke-width="3.3"/><path d="M856.8 432.2L856.8 442.7L860.2 450.3L866.3 447.3L877.6 445.4L883.3 438.6L892.4 432.9L887.1 430.3L879.5 422.7L876.9 416.3L869.7 415.5L860.6 418.2L860.6 432.2Z" stroke-width="3.3"/><path d="M825.7 414.0L831.8 412.9L841.6 414.8L851.1 414.8L860.6 417.0L869.7 415.5L876.9 416.3L869.7 416.7L860.6 418.2L860.6 432.2L856.8 432.2L856.8 442.7L856.8 456.4L843.5 457.1L838.6 449.2L836.0 434.0L830.3 424.6Z" stroke-width="3.3"/><path d="M843.5 457.1L856.8 456.4L860.2 450.3L866.3 447.3L877.6 445.4L883.3 438.6L892.4 432.9L899.6 433.7L902.3 450.3L905.7 450.7L904.2 456.7L898.5 462.4L894.7 467.3L887.1 472.6L878.0 477.5L866.3 477.5L856.8 480.5L850.7 478.3L849.2 470.0L846.6 462.4Z" stroke-width="3.3"/><path d="M883.3 460.9L889.0 457.1L892.4 460.1L887.1 464.7Z" stroke-width="3.3"/><path d="M898.5 446.5L902.3 450.3L899.6 452.2L897.7 449.2Z" stroke-width="3.3"/><path d="M967.8 394.4L972.4 407.6L968.6 415.1L962.9 432.2L959.5 443.1L952.3 445.4L946.6 435.9L945.1 430.3L949.3 420.8L947.8 413.3L957.2 408.3L962.9 400.0Z" stroke-width="3.3"/><path d="M720.4 243.2L722.6 242.4L721.9 243.9ZM716.6 241.6L719.6 240.9L718.1 243.2ZM728.7 239.4L730.2 238.6L728.3 240.5ZM685.1 284.7L687.0 285.5L691.9 292.3L690.8 291.2ZM998.2 424.6L1000.1 425.4L998.9 426.5ZM990.2 428.4L992.5 429.1L991.3 429.9ZM944.7 392.1L945.9 394.0L949.3 395.1ZM801.8 347.9L806.4 347.9L805.6 349.0ZM813.2 334.6L814.7 335.4L814.0 336.9ZM682.5 205.7L685.5 206.5L684.0 206.9ZM673.0 203.1L676.8 202.7L674.9 203.8ZM716.6 224.6L717.7 225.4L715.8 225.8Z" stroke-width="3.3"/><path d="M128.0 402.3L131.8 402.3L129.9 399.7ZM173.5 430.3L177.3 430.3L175.4 427.6ZM212.5 416.7L216.3 416.7L214.4 414.0ZM248.5 383.8L252.3 383.8L250.4 381.1ZM115.1 430.3L118.9 430.3L117.0 427.6ZM103.7 414.8L109.0 414.8L106.4 411.1ZM1415.4 412.7L1420.0 412.7L1417.7 409.6ZM1410.5 408.2L1415.1 408.2L1412.8 405.0ZM1434.8 344.5L1438.6 344.5L1436.7 341.8ZM1378.7 324.1L1382.5 324.1L1380.6 321.4ZM1288.9 321.8L1292.7 321.8L1290.8 319.1ZM1331.3 292.7L1335.1 292.7L1333.2 290.0ZM1413.9 316.1L1417.7 316.1L1415.8 313.5ZM1428.0 323.3L1431.7 323.3L1429.8 320.6ZM182.6 343.0L186.3 343.0L184.5 340.3ZM1458.3 382.3L1462.1 382.3L1460.2 379.6Z" stroke-width="3.3"/><path d="M150.0 145.3L156.0 144.1L152.2 142.6ZM142.4 149.0L146.2 147.5L144.3 146.8ZM165.1 141.5L168.9 140.7L167.0 139.6Z" stroke-width="3.3"/></g><g stroke="#e8a01e" stroke-width="2.6" stroke-linejoin="round"><path d="M308.4 166.0L314.8 163.8L420.2 163.8L420.2 162.3L421.7 164.9L434.2 167.2L441.4 167.6L446.0 166.4L459.2 171.7L460.7 173.2L464.2 174.7L468.7 177.8L469.8 184.9L468.3 188.0L466.1 190.2L472.9 187.6L481.6 187.2L480.8 184.6L491.8 181.9L497.9 178.9L510.0 178.9L512.7 177.4L515.7 172.5L518.7 169.6L522.5 170.2L524.0 171.0L524.0 176.3L527.1 179.7L520.2 181.2L514.9 184.2L512.7 187.6L515.7 191.0L508.5 192.9L500.9 194.8L500.5 196.3L500.2 199.3L496.8 202.0L494.9 204.6L493.0 209.1L494.9 215.9L490.7 217.8L485.8 220.5L480.8 223.5L475.9 226.9L474.0 228.8L472.5 235.6L475.9 241.3L478.2 247.7L477.0 253.7L474.4 254.1L471.4 248.1L467.2 243.2L467.6 238.6L464.2 236.0L457.7 236.7L453.2 234.1L447.1 234.1L441.4 234.8L442.2 238.2L442.9 239.4L438.0 239.0L433.1 237.5L425.5 236.7L421.7 238.2L415.3 242.0L412.6 244.3L412.2 250.0L412.6 250.7L408.8 250.3L405.4 249.2L403.9 245.1L400.5 242.0L396.7 236.4L392.9 236.4L390.3 239.4L384.9 237.1L383.0 233.0L377.4 228.8L370.9 228.8L370.9 230.7L359.9 230.7L345.9 226.1L346.3 225.4L337.2 226.1L336.4 223.5L332.3 220.5L328.1 219.0L323.9 218.2L323.5 215.9L319.0 210.7L316.7 206.1L314.8 204.2L311.8 198.6L309.5 196.3L310.3 190.2L309.1 186.5L311.0 174.4L308.4 166.0ZM246.6 85.9L246.6 121.1L254.2 122.2L259.9 126.4L267.5 123.0L275.4 128.2L284.5 137.3L288.3 137.7L286.4 141.9L280.7 141.1L275.0 138.1L270.9 131.7L263.7 129.0L251.2 123.7L235.6 122.2L225.8 118.8L218.2 121.4L213.3 123.7L205.7 125.2L208.7 119.6L212.5 117.7L203.0 121.1L197.3 125.2L187.9 133.5L179.5 137.3L167.0 141.1L156.4 143.4L163.2 140.0L168.9 137.3L180.3 131.7L184.1 127.1L174.6 127.5L167.0 127.5L166.3 122.6L158.7 122.2L154.1 118.4L154.1 115.4L157.2 110.9L167.0 109.0L170.8 105.9L163.2 105.2L155.6 105.2L150.0 103.3L143.9 101.0L150.0 98.4L159.4 97.6L165.1 96.5L159.4 93.5L151.9 90.8L157.5 88.6L163.2 86.7L168.9 83.3L180.3 81.4L186.7 79.5L195.4 81.0L204.9 81.0L216.3 82.5L227.7 83.6L239.0 84.0ZM189.4 274.5L193.5 276.8L190.5 272.6ZM184.8 267.4L182.6 268.5L181.4 267.4ZM177.3 265.1L175.4 265.8L176.9 266.2ZM201.1 130.1L204.2 131.3L196.6 134.7L194.7 132.4Z" fill="#22551e"/><path d="M246.6 85.9L254.2 85.9L263.7 88.6L269.4 86.7L275.0 86.3L284.5 84.8L290.2 84.4L297.8 83.3L307.2 86.3L314.8 87.0L322.4 85.2L333.8 88.2L345.1 92.0L350.8 92.7L364.1 92.0L371.7 90.8L379.3 88.9L386.8 92.0L396.3 93.1L409.6 92.7L417.2 92.0L421.0 92.0L424.7 86.3L422.8 77.6L432.3 80.6L439.9 86.3L447.5 90.1L458.9 85.2L470.2 86.3L472.1 92.0L460.7 97.6L455.1 98.8L451.3 103.3L445.6 107.1L438.0 110.9L428.5 115.4L422.8 124.1L422.8 127.1L430.4 133.5L439.9 133.5L447.5 136.2L458.9 140.0L469.5 140.3L469.1 149.0L474.0 152.4L477.8 155.1L481.6 153.2L483.5 148.7L481.6 144.9L489.2 138.1L490.3 133.5L488.0 127.9L485.4 120.3L487.3 114.6L496.8 113.5L504.3 114.6L510.0 117.7L515.7 118.4L517.6 123.0L517.6 126.7L525.2 128.6L530.9 126.7L534.7 121.1L538.4 124.1L546.0 131.7L547.9 137.3L551.7 140.0L561.2 144.1L565.0 148.7L569.9 151.7L564.2 154.7L557.4 158.1L553.6 159.2L540.3 158.9L529.0 159.2L521.4 163.0L513.8 169.5L519.5 165.3L529.0 163.0L537.3 164.2L534.7 167.9L535.4 171.3L536.5 174.0L542.2 175.9L549.8 176.6L553.6 174.4L549.8 179.7L540.3 180.4L532.8 184.6L530.1 181.5L536.5 177.8L530.9 178.1L527.1 179.7L524.0 176.3L524.0 171.0L522.5 170.2L518.7 169.6L515.7 172.5L512.7 177.4L510.0 178.9L497.9 178.9L491.8 181.9L480.8 184.6L481.6 187.2L472.9 187.6L466.1 190.2L468.3 188.0L469.8 184.9L468.7 177.8L464.2 174.7L460.7 173.2L459.2 171.7L446.0 166.4L441.4 167.6L434.2 167.2L421.7 164.9L420.2 162.3L420.2 163.8L314.8 163.8L313.7 161.9L307.2 159.2L297.8 156.2L295.9 152.4L290.2 148.7L286.4 141.9L288.3 137.7L284.5 137.3L275.4 128.2L267.5 123.0L259.9 126.4L254.2 122.2L246.6 121.1ZM312.9 166.4L305.4 164.2L294.4 157.0L299.7 157.4L311.0 162.6ZM282.6 151.7L276.9 144.1L278.8 147.5ZM556.3 169.1L559.3 165.7L565.0 158.1L570.7 154.0L570.7 160.0L578.2 163.0L581.6 169.5L580.1 172.9L576.3 170.2L569.5 171.7L565.0 169.1Z" fill="#2e6a2a"/><path d="M547.9 97.3L544.1 101.4L536.5 104.8L534.7 111.2L529.0 114.6L523.3 113.1L513.8 111.6L508.1 107.8L496.8 105.9L487.3 105.6L491.1 101.4L500.5 98.4L504.3 93.9L500.5 90.8L489.2 87.0L477.8 85.9L470.2 85.2L460.7 84.4L455.1 83.3L443.7 78.7L439.9 74.6L447.5 71.2L458.9 70.8L477.8 70.4L489.2 73.8L500.5 78.0L511.9 81.4L521.4 83.3L525.2 87.0L529.0 91.2L538.4 93.9L544.1 95.7ZM330.0 78.7L335.7 84.4L335.7 88.2L352.7 90.1L367.9 89.3L379.3 87.8L390.6 88.2L398.2 86.3L396.3 82.5L384.9 80.2L384.9 73.8L377.4 71.9L364.1 74.9L347.0 71.9L331.9 74.6ZM304.6 77.2L309.1 68.1L322.4 67.4L335.7 69.3L343.3 71.9L331.9 74.9L326.2 79.5L312.9 80.2ZM470.2 61.0L483.5 59.8L485.4 54.9L493.0 52.3L504.3 49.6L515.7 46.6L530.9 43.6L542.2 40.6L546.0 38.3L534.7 36.0L508.1 35.3L485.4 35.3L458.9 37.2L439.9 39.8L430.4 43.6L428.5 48.5L432.3 51.1L443.7 53.0L449.4 55.7L441.8 58.7L455.1 60.2ZM430.4 67.0L447.5 67.4L462.6 67.8L474.0 67.4L479.7 65.5L475.9 61.0L462.6 60.2L443.7 59.8L428.5 58.7L415.3 59.8L417.2 63.6ZM432.3 53.0L447.5 50.4L455.1 46.6L447.5 42.1L430.4 41.7L413.4 44.7L417.2 49.2ZM455.1 110.9L460.7 112.8L470.2 111.6L477.8 107.5L472.1 105.2L462.6 102.2L455.1 99.5L449.4 105.2ZM394.4 74.9L400.1 70.0L409.6 69.3L415.3 72.3L411.5 78.0L403.9 78.7ZM421.0 69.3L436.1 70.0L439.9 73.8L426.6 76.8L419.1 73.8ZM335.7 65.5L348.9 67.0L364.1 66.3L379.3 64.0L375.5 61.7L364.1 59.8L348.9 60.2L335.7 61.0ZM386.8 61.7L398.2 65.5L409.6 65.5L415.3 63.2L409.6 60.6L398.2 59.5ZM316.7 60.2L328.1 62.5L339.5 59.5L337.6 56.4L326.2 57.9ZM386.8 54.2L398.2 54.2L405.8 51.1L390.6 49.2L383.0 51.9ZM415.3 54.9L424.7 54.9L417.2 52.3L409.6 53.0ZM466.4 113.9L472.1 112.0L468.3 111.2ZM407.7 90.1L415.3 90.8L419.1 87.0L413.4 84.8L405.8 87.4ZM537.7 163.4L547.2 162.6L544.1 161.5ZM536.9 172.9L546.0 173.6L540.3 174.4Z" fill="#2e6a2a"/><path d="M616.1 123.0L608.6 120.3L599.1 118.4L593.4 113.5L589.6 110.9L585.8 107.1L583.9 101.4L578.2 96.5L580.1 92.0L587.7 88.2L580.1 85.2L572.5 82.5L576.3 78.7L568.8 73.1L563.1 67.4L561.2 63.6L546.0 61.7L530.9 61.7L519.5 59.8L506.2 54.2L523.3 50.4L534.7 46.6L546.0 42.8L565.0 39.8L591.5 37.5L614.2 36.8L629.4 33.7L659.7 33.0L686.2 34.5L697.6 36.0L709.0 39.0L735.5 40.9L712.8 44.7L709.0 46.6L707.1 50.4L712.8 54.2L709.0 58.7L705.2 65.5L699.5 71.2L697.6 74.9L693.8 80.6L686.2 84.4L676.8 90.1L667.3 90.8L657.8 93.9L648.3 99.5L638.9 100.3L629.4 103.3L627.5 107.1L623.7 112.8L619.9 118.4Z" fill="#dff0e2"/><path d="M688.1 101.4L697.6 98.0L710.9 99.1L720.4 97.6L726.0 99.5L729.8 102.9L724.2 105.9L710.9 109.3L701.4 107.5L695.0 107.8L697.6 105.2L690.0 103.7Z" fill="#c8e2c8"/><path d="M337.2 226.1L346.3 225.4L345.9 226.1L359.9 230.7L370.9 230.7L370.9 228.8L377.4 228.8L383.0 233.0L384.9 237.1L390.3 239.4L392.9 236.4L396.7 236.4L400.5 242.0L403.9 245.1L405.4 249.2L408.8 250.3L412.6 250.7L410.7 258.3L410.3 265.8L412.6 271.5L417.2 277.2L422.8 280.2L432.3 278.7L438.0 274.2L438.4 269.6L447.5 267.7L452.0 268.9L449.4 275.3L446.3 279.1L443.1 281.7L436.1 281.7L436.1 283.8L438.4 283.8L438.4 288.1L433.5 288.1L431.6 291.2L431.6 294.2L422.8 287.8L415.3 289.7L407.7 287.4L396.3 282.9L388.7 279.8L381.2 273.4L381.9 267.7L377.4 261.3L369.8 253.7L364.9 248.1L360.3 243.5L355.8 239.4L352.0 231.8L345.9 228.8L347.8 233.7L352.7 239.4L356.5 246.9L362.2 257.1L366.0 262.4L363.0 260.5L355.8 255.3L355.8 250.3L348.2 245.1L347.8 240.1L341.4 233.7Z" fill="#9bcf95"/><path d="M431.6 294.2L431.6 291.2L433.5 288.1L438.4 288.1L438.4 283.8L436.1 283.8L436.1 281.7L443.1 281.7L442.9 288.9L446.7 289.7L442.9 293.8L439.5 297.2Z" fill="#c8e2c8"/><path d="M443.1 281.7L446.3 279.1L446.7 284.0L444.1 288.9L442.9 288.9Z" fill="#f4f6f3"/><path d="M446.7 289.7L458.9 288.5L465.7 292.3L460.0 293.4L458.9 296.1L452.4 298.7L449.4 299.9L448.2 298.3L442.9 295.7L442.9 293.8Z" fill="#dff0e2"/><path d="M439.5 297.2L442.9 295.7L448.2 298.3L448.2 299.1L441.8 298.3Z" fill="#dff0e2"/><path d="M449.4 299.9L452.4 298.7L458.9 296.1L460.0 293.4L465.7 292.3L464.2 301.8L463.8 307.4L456.2 307.0L448.6 300.2Z" fill="#dff0e2"/><path d="M456.2 307.0L463.8 307.4L467.9 312.7L466.8 318.4L462.6 313.8L455.8 311.2Z" fill="#c8e2c8"/><path d="M467.9 312.7L479.7 312.7L488.0 316.1L486.1 321.0L483.5 318.0L477.8 321.4L472.1 318.8L466.8 318.4Z" fill="#dff0e2"/><path d="M458.9 266.2L464.5 262.4L468.3 261.7L477.8 261.7L488.4 267.0L494.1 269.2L500.2 272.6L486.5 273.8L488.4 270.8L483.5 267.4L475.9 265.8L470.2 264.7L459.2 266.6Z" fill="#dff0e2"/><path d="M499.0 273.8L505.1 273.8L509.3 274.2L509.3 279.1L499.0 279.8L505.8 277.2Z" fill="#f4f6f3"/><path d="M509.3 274.2L515.7 274.5L522.1 278.7L511.9 280.2L509.3 279.1Z" fill="#dff0e2"/><path d="M483.9 279.4L492.2 281.0L489.5 281.7L484.2 280.2Z" fill="#dff0e2"/><path d="M525.9 279.1L532.4 279.4L532.0 281.0L526.3 281.0Z" fill="#c8e2c8"/><path d="M485.4 247.7L489.2 248.8L488.0 253.7L484.6 251.5ZM547.9 308.2L550.2 308.2L549.8 310.8L546.4 310.8ZM552.8 295.3L549.1 290.4L547.2 287.4L548.7 296.8ZM530.9 307.8L539.2 306.3L537.3 308.6Z" fill="#ffffff"/><path d="M585.4 332.4L587.7 335.8L591.5 342.2L591.9 347.1L597.2 351.6L602.9 351.6L612.3 358.4L618.0 358.1L625.6 360.0L635.1 363.0L640.8 367.1L647.2 368.7L649.1 376.2L647.6 383.0L642.7 388.7L638.9 394.4L633.9 398.1L633.2 403.8L633.6 409.5L632.4 415.9L630.2 423.5L626.7 427.6L622.6 434.0L618.0 435.9L612.3 437.1L605.1 439.7L599.1 444.3L596.8 449.2L596.8 456.7L592.3 462.0L588.5 466.2L583.9 470.7L578.6 476.4L579.4 472.2L574.1 468.1L569.5 466.2L565.3 462.8L562.7 463.2L568.8 455.6L572.5 453.0L577.1 451.4L577.5 447.3L574.1 445.8L575.2 439.7L571.0 439.3L569.5 433.3L561.6 432.5L561.2 425.4L560.4 423.8L563.1 417.8L559.7 410.6L552.8 410.6L551.7 401.2L546.8 400.0L540.3 396.2L533.5 390.2L533.1 385.7L528.6 386.4L521.4 390.2L517.6 390.2L513.4 390.6L513.4 384.9L504.7 384.5L503.6 379.2L500.9 376.6L504.7 368.3L515.7 365.3L516.1 353.2L518.0 351.3L515.7 346.7L518.4 344.8L525.9 341.4L527.4 344.5L532.8 346.4L537.7 343.3L538.4 339.6L543.0 333.9L548.7 332.7L551.3 329.3L553.6 330.1L554.7 342.2L559.3 344.1L563.8 341.8L568.8 342.2L574.4 340.3L580.9 340.7ZM589.6 349.8L597.2 349.8L597.6 353.9L591.5 354.7Z" fill="#62ac5c"/><path d="M562.7 463.2L560.4 470.0L559.7 475.6L559.7 478.7L564.2 483.2L565.7 486.6L562.3 493.4L555.5 495.3L545.3 495.7L544.9 502.1L534.7 504.0L536.5 509.6L539.6 510.4L533.5 514.6L532.8 519.1L525.2 524.8L531.6 529.7L525.2 536.1L521.0 539.9L519.5 543.7L521.8 547.1L510.0 546.3L508.1 543.7L506.2 539.9L503.6 535.0L506.6 530.4L508.9 524.8L508.9 519.1L510.0 513.4L508.9 507.8L510.4 500.2L511.2 492.6L512.7 487.0L515.7 479.4L515.7 473.7L513.8 468.1L516.5 460.5L520.2 453.0L522.1 440.9L527.1 435.2L531.6 432.2L534.7 432.5L538.4 432.2L543.0 432.9L544.9 439.7L553.6 439.7L562.7 445.0L558.9 452.2L569.5 452.6L574.1 445.8L577.5 447.3L577.1 451.4L572.5 453.0L568.8 455.6ZM521.0 547.8L529.0 555.0L533.5 556.5L525.2 557.7L521.0 556.5Z" fill="#9bcf95"/><path d="M517.6 415.1L519.9 420.1L521.8 422.3L522.5 429.5L527.1 435.2L522.1 440.9L520.2 453.0L516.5 460.5L513.8 468.1L515.7 473.7L515.7 479.4L512.7 487.0L511.2 492.6L510.4 500.2L508.9 507.8L510.0 513.4L508.9 519.1L508.9 524.8L506.6 530.4L503.6 535.0L506.2 539.9L508.1 543.7L510.0 546.3L521.8 547.1L513.8 550.1L506.2 552.0L498.6 547.5L496.8 541.8L494.9 530.4L498.6 524.8L500.5 515.3L502.4 507.8L501.3 502.1L502.4 488.9L506.2 483.2L509.6 473.7L510.0 462.4L510.8 454.8L513.8 447.3L514.2 437.8L514.9 432.2L514.6 418.2ZM521.0 547.8L521.0 556.5L515.7 557.7L506.2 555.0L500.5 549.3L511.9 551.2Z" fill="#9bcf95"/><path d="M476.7 361.9L472.9 366.8L474.8 371.7L479.7 379.2L485.4 388.7L488.4 394.4L492.2 401.9L496.8 407.6L508.1 413.3L514.6 418.2L517.6 415.1L519.5 409.5L518.4 405.7L520.6 396.6L517.6 390.2L513.4 390.6L513.4 384.9L504.7 384.5L503.6 379.2L500.9 376.6L504.7 368.3L515.7 365.3L506.2 358.4L496.0 349.4L494.9 354.7L489.2 360.3L483.5 366.0L481.6 367.9Z" fill="#c8e2c8"/><path d="M476.7 361.9L481.6 367.9L483.5 366.0L489.2 360.3L494.9 354.7L496.0 349.4L487.7 346.0L482.3 343.7L477.4 346.0L475.9 350.9L474.4 353.2L477.0 358.4Z" fill="#c8e2c8"/><path d="M482.3 343.7L487.7 346.0L496.0 349.4L506.2 358.4L515.7 365.3L516.1 353.2L518.0 351.3L515.7 346.7L518.4 344.8L525.9 341.4L524.0 332.0L524.0 325.6L517.6 325.9L515.3 322.5L508.1 321.0L506.6 315.0L504.3 313.8L506.6 307.0L510.8 302.1L506.2 304.4L499.8 306.3L494.9 309.3L492.2 313.8L489.9 316.5L488.0 316.1L486.1 321.0L487.3 324.4L487.7 333.9L485.4 339.2Z" fill="#9bcf95"/><path d="M506.6 307.0L509.6 309.3L510.8 304.4L515.7 302.9L517.6 305.5L522.5 309.3L530.9 308.9L538.4 308.9L546.0 308.6L549.8 313.1L553.6 316.9L551.3 320.6L548.3 326.7L551.3 329.3L548.7 332.7L543.0 333.9L538.4 339.6L537.7 343.3L532.8 346.4L527.4 344.5L525.9 341.4L524.0 332.0L524.0 325.6L517.6 325.9L515.3 322.5L508.1 321.0L506.6 315.0L504.3 313.8Z" fill="#c8e2c8"/><path d="M553.6 316.9L559.3 322.5L564.2 326.3L563.8 332.0L561.2 333.9L565.0 341.4L559.3 344.1L554.7 342.2L553.6 330.1L551.3 329.3L548.3 326.7L551.3 320.6Z" fill="#f4f6f3"/><path d="M564.2 326.3L572.5 326.3L576.3 327.5L576.3 335.4L574.4 340.3L568.8 342.2L565.0 341.4L561.2 333.9L563.8 332.0Z" fill="#f4f6f3"/><path d="M576.3 327.5L583.9 330.1L585.4 332.4L580.9 340.7L574.4 340.3L576.3 335.4Z" fill="#f4f6f3"/><path d="M517.6 415.1L519.9 420.1L521.8 422.3L522.5 429.5L527.1 435.2L531.6 432.2L534.7 432.5L538.4 432.2L543.0 432.9L547.2 424.6L560.4 423.8L563.1 417.8L559.7 410.6L552.8 410.6L551.7 401.2L546.8 400.0L540.3 396.2L533.5 390.2L533.1 385.7L528.6 386.4L521.4 390.2L517.6 390.2L520.6 396.6L518.4 405.7L519.5 409.5Z" fill="#c8e2c8"/><path d="M543.0 432.9L544.9 439.7L553.6 439.7L562.7 445.0L558.9 452.2L569.5 452.6L574.1 445.8L575.2 439.7L571.0 439.3L569.5 433.3L561.6 432.5L561.2 425.4L560.4 423.8L547.2 424.6Z" fill="#dff0e2"/><path d="M562.7 463.2L565.3 462.8L569.5 466.2L574.1 468.1L579.4 472.2L578.6 476.4L572.9 480.9L567.6 480.9L559.7 478.7L559.7 475.6L560.4 470.0Z" fill="#c8e2c8"/><path d="M747.3 190.6L749.9 189.9L754.8 190.6L757.5 191.8L754.8 197.0L754.5 201.6L752.6 207.2L753.0 208.4L747.3 209.1L747.6 203.5L745.0 202.3L747.3 195.9Z" fill="#62ac5c"/><path d="M747.3 190.6L745.8 186.5L750.7 183.8L758.3 184.2L763.9 184.9L774.2 184.9L783.7 187.2L793.1 188.7L792.7 191.0L784.4 194.0L779.9 200.1L781.8 202.7L778.3 206.9L773.0 210.3L764.3 210.3L759.8 212.9L756.7 209.9L753.0 208.4L752.6 207.2L754.5 201.6L754.8 197.0L757.5 191.8L754.8 190.6L749.9 189.9Z" fill="#3d873b"/><path d="M774.2 184.9L776.5 180.8L776.5 175.1L772.3 171.0L763.9 167.9L763.2 165.3L769.6 164.5L774.9 164.9L773.8 161.1L777.2 162.3L781.8 161.9L787.1 156.6L790.5 155.8L792.4 157.0L796.9 159.6L799.6 160.8L803.4 161.9L805.3 161.9L812.1 163.8L809.8 169.1L806.8 170.2L803.7 174.4L807.5 175.5L806.0 178.9L807.5 181.9L809.4 183.4L804.5 186.1L798.1 184.6L792.7 186.1L793.1 188.7L783.7 187.2ZM816.6 186.5L817.4 189.9L815.9 192.5L813.6 190.6Z" fill="#3d873b"/><path d="M790.5 155.8L793.9 154.7L797.3 154.7L803.0 155.8L804.5 158.1L803.4 161.9L799.6 160.8L796.9 159.6L792.4 157.0Z" fill="#62ac5c"/><path d="M793.9 154.7L796.2 152.4L798.8 149.0L801.8 147.5L808.3 147.9L807.9 151.3L803.7 153.2L804.5 155.5L803.0 155.8L797.3 154.7Z" fill="#62ac5c"/><path d="M808.3 147.9L813.2 146.4L814.4 144.9L813.6 141.1L818.5 141.9L822.7 143.4L828.4 143.0L834.8 145.3L835.6 147.5L836.3 150.2L836.7 156.2L835.2 156.0L827.2 158.9L828.4 160.8L833.3 164.9L830.3 166.8L830.3 169.5L827.2 168.7L820.8 169.5L817.4 169.5L809.8 169.1L812.1 163.8L805.3 161.9L804.5 158.1L803.0 155.8L804.5 155.5L803.7 153.2L807.9 151.3Z" fill="#2e6a2a"/><path d="M803.7 174.4L806.8 170.2L809.8 169.1L817.4 169.5L817.0 171.0L820.8 171.7L819.3 174.4L815.1 175.9L810.9 175.5L807.5 175.5Z" fill="#62ac5c"/><path d="M817.4 169.5L820.8 169.5L827.2 168.7L830.3 169.5L830.3 166.8L833.3 164.9L837.8 163.8L845.1 165.3L845.8 167.6L843.5 169.5L841.6 172.5L836.0 173.6L828.0 172.5L820.8 171.7L817.0 171.0Z" fill="#62ac5c"/><path d="M807.5 175.5L810.9 175.5L815.1 175.9L819.3 174.4L820.8 171.7L828.0 172.5L832.9 173.2L833.3 176.6L827.6 177.8L828.4 181.9L832.5 184.6L836.3 190.2L842.0 190.6L841.3 192.1L851.1 197.0L850.4 198.6L845.4 195.9L843.9 202.0L840.5 205.4L842.0 199.7L837.8 196.7L827.6 191.4L820.8 186.8L819.7 183.1L814.4 181.2L809.4 183.4L807.5 181.9L806.0 178.9ZM828.0 205.4L840.1 204.2L838.2 210.3L829.5 207.2ZM812.1 194.0L818.1 194.0L817.4 201.2L813.2 202.0L812.8 195.9Z" fill="#3d873b"/><path d="M759.4 159.6L765.1 155.5L770.8 154.0L769.3 150.6L769.6 147.5L769.6 145.6L767.7 142.2L769.6 141.1L773.4 138.1L774.9 138.8L780.2 144.5L781.8 146.8L787.4 149.8L787.1 152.8L784.4 154.7L786.3 155.5L777.2 157.4L769.6 157.4Z" fill="#2e6a2a"/><path d="M769.6 147.5L763.6 147.5L765.1 151.7L760.9 153.2L765.1 154.0L770.8 154.0L769.3 150.6Z" fill="#9bcf95"/><path d="M769.6 141.1L762.0 142.2L759.8 140.0L760.2 135.4L757.5 131.7L762.0 127.5L769.6 127.5L765.8 131.3L774.2 131.3L768.9 136.9L773.4 138.1Z" fill="#62ac5c"/><path d="M753.3 140.3L757.5 140.3L760.2 143.0L757.1 144.5L752.2 144.1L749.9 143.0Z" fill="#c8e2c8"/><path d="M753.3 140.3L749.9 143.0L752.2 144.1L757.1 144.5L758.3 148.7L756.7 151.7L750.7 153.6L745.0 154.0L742.3 151.7L744.6 147.5L743.1 144.1L748.8 141.1Z" fill="#62ac5c"/><path d="M813.6 141.1L811.7 138.8L812.1 134.3L821.2 130.9L820.0 135.1L822.3 135.8L818.5 139.2L818.5 141.9ZM822.7 138.5L828.8 138.5L826.9 141.5L823.4 140.3Z" fill="#62ac5c"/><path d="M802.6 127.1L807.5 129.8L817.0 126.0L822.7 126.0L824.2 122.6L828.4 120.3L827.2 115.8L826.9 109.0L835.2 102.9L841.6 92.3L849.6 90.1L857.9 88.2L860.6 87.8L868.2 89.7L875.8 89.7L879.5 85.5L886.4 84.0L890.5 88.2L898.5 85.2L898.5 83.3L887.1 80.2L872.0 80.6L853.0 84.0L837.8 90.1L830.3 95.7L826.5 103.3L818.9 109.0L801.8 113.5L800.0 118.4L800.7 124.1Z" fill="#62ac5c"/><path d="M823.4 127.9L828.8 136.6L830.3 139.6L835.2 138.8L841.6 135.4L844.7 127.9L852.3 123.0L846.6 118.4L848.5 112.0L854.9 109.0L862.5 105.2L872.7 100.3L870.1 93.9L857.9 88.2L849.6 90.1L841.6 92.3L835.2 102.9L826.9 109.0L827.2 115.8L828.4 120.3L824.2 122.6L822.7 126.0Z" fill="#62ac5c"/><path d="M872.7 100.3L876.9 103.3L875.8 107.1L862.5 111.6L862.5 118.4L866.3 122.2L877.6 121.1L886.4 120.3L892.8 116.5L900.4 111.2L893.9 107.8L894.7 103.3L892.8 97.6L894.7 93.1L889.0 91.2L890.5 88.2L886.4 84.0L879.5 85.5L875.8 89.7L868.2 89.7L860.6 87.8L857.9 88.2L870.1 93.9Z" fill="#62ac5c"/><path d="M870.1 125.2L887.1 124.1L885.2 130.5L875.8 130.1L870.1 127.9Z" fill="#c8e2c8"/><path d="M860.6 134.3L864.4 131.3L872.7 132.4L875.8 130.1L885.2 130.5L887.9 136.6L881.8 138.5L860.6 136.9Z" fill="#c8e2c8"/><path d="M860.6 136.9L881.8 138.5L878.8 143.7L870.1 144.9L867.4 143.4L861.3 140.3Z" fill="#c8e2c8"/><path d="M855.3 143.4L867.4 143.4L861.3 140.3Z" fill="#62ac5c"/><path d="M834.8 145.3L845.4 142.2L851.5 143.4L855.3 143.4L867.4 143.4L870.1 144.9L871.6 148.7L868.9 151.3L870.4 154.3L872.0 157.4L867.4 163.8L860.6 162.3L853.0 162.3L852.3 161.9L844.7 158.5L837.8 156.6L836.7 156.2L836.3 150.2L835.6 147.5Z" fill="#62ac5c"/><path d="M827.2 158.9L835.2 156.0L836.7 156.2L837.8 156.6L844.7 158.5L852.3 161.9L845.8 164.5L845.1 165.3L837.8 163.8L833.3 164.9L828.4 160.8Z" fill="#62ac5c"/><path d="M852.3 161.9L853.0 162.3L860.6 162.3L866.3 163.4L864.8 166.0L858.7 166.8L852.3 167.9L845.8 167.6L845.1 165.3L845.8 164.5Z" fill="#c8e2c8"/><path d="M841.6 172.5L843.5 169.5L845.8 167.6L852.3 167.9L858.7 166.8L864.8 166.0L867.8 167.9L861.0 174.4L857.6 174.7L852.6 175.5L846.6 175.5L843.5 174.0Z" fill="#9bcf95"/><path d="M832.9 173.2L836.0 173.6L841.6 172.5L843.5 174.0L840.1 175.9L833.3 176.6Z" fill="#c8e2c8"/><path d="M833.3 176.6L840.1 175.9L843.5 174.0L846.6 175.5L852.6 175.5L853.0 179.3L843.5 178.1L840.9 181.9L847.3 186.5L851.1 188.4L845.4 186.5L837.8 181.5L834.1 179.3L832.5 178.5Z" fill="#c8e2c8"/><path d="M840.9 181.9L843.5 178.1L853.0 179.3L854.9 184.6L851.1 188.4L847.3 186.5Z" fill="#c8e2c8"/><path d="M852.6 175.5L857.6 174.7L862.5 178.1L867.0 180.4L865.9 182.7L868.2 185.7L865.9 189.1L863.2 187.6L860.6 185.7L856.8 186.5L854.9 184.6L853.0 179.3Z" fill="#9bcf95"/><path d="M851.1 188.4L854.9 184.6L856.8 186.5L854.1 190.2Z" fill="#dff0e2"/><path d="M856.8 186.5L860.6 185.7L863.2 187.6L859.1 190.2L854.1 190.2Z" fill="#dff0e2"/><path d="M859.1 190.2L865.9 189.1L868.2 192.9L858.7 194.4Z" fill="#dff0e2"/><path d="M854.1 190.2L859.1 190.2L858.7 194.4L860.2 197.4L856.8 199.3L854.5 196.7L854.9 191.0Z" fill="#dff0e2"/><path d="M856.8 199.3L860.2 197.4L858.7 194.4L868.2 192.9L873.9 191.8L879.9 192.9L881.8 191.8L879.5 194.8L872.0 195.9L868.2 197.8L866.7 202.0L872.0 204.6L868.2 208.0L866.3 211.0L863.2 209.9L861.7 206.1L859.8 202.3L857.6 200.1ZM870.1 214.8L880.7 215.6L872.0 216.7Z" fill="#62ac5c"/><path d="M865.9 182.7L875.8 183.8L883.3 182.3L889.4 183.8L887.1 190.2L881.8 191.8L879.9 192.9L873.9 191.8L868.2 192.9L865.9 189.1L868.2 185.7Z" fill="#c8e2c8"/><path d="M857.6 174.7L861.0 174.4L867.8 167.9L875.4 168.7L881.8 166.8L887.9 173.2L887.9 177.0L893.2 178.1L889.4 183.8L883.3 182.3L875.8 183.8L865.9 182.7L867.0 180.4L862.5 178.1Z" fill="#9bcf95"/><path d="M881.8 166.8L887.1 165.7L894.7 172.9L887.9 177.0L887.9 173.2Z" fill="#dff0e2"/><path d="M864.8 166.0L866.3 163.4L867.4 163.8L872.0 157.4L870.4 154.3L875.8 152.8L887.1 154.0L896.6 155.1L902.3 152.1L909.9 151.7L915.2 157.7L925.8 160.0L932.6 161.5L932.6 167.6L925.8 171.0L913.7 174.0L908.0 175.1L904.2 177.4L908.0 180.8L919.3 177.8L913.7 176.6L906.1 174.7L900.4 172.9L894.7 175.9L893.2 178.1L887.9 177.0L894.7 172.9L887.1 165.7L881.8 166.8L875.4 168.7L867.8 167.9Z" fill="#c8e2c8"/><path d="M870.1 144.9L878.8 143.7L881.8 138.5L887.9 136.6L897.7 138.8L901.5 148.7L902.3 152.1L896.6 155.1L887.1 154.0L875.8 152.8L870.4 154.3L868.9 151.3L871.6 148.7Z" fill="#c8e2c8"/><path d="M879.5 194.8L881.8 191.8L887.1 190.2L890.9 193.3L882.2 196.3ZM882.2 196.3L890.9 193.3L898.5 193.6L908.0 190.2L917.4 191.4L925.0 194.4L938.3 192.1L945.9 193.6L950.8 198.9L948.9 208.4L941.7 208.8L932.6 209.9L920.1 209.9L918.2 212.9L917.1 209.9L911.8 209.9L904.9 212.5L896.6 211.4L887.1 210.3L884.5 207.2L881.1 204.6L879.9 199.7Z" fill="#62ac5c"/><path d="M903.4 217.8L912.1 214.1L909.9 216.7Z" fill="#c8e2c8"/><path d="M898.5 85.2L906.1 86.7L919.3 87.8L936.4 93.9L937.1 96.5L926.9 99.1L911.8 97.6L912.5 105.2L921.2 107.5L934.5 105.2L947.8 98.8L948.5 91.2L955.3 92.0L970.5 92.0L983.8 91.2L989.5 90.1L1004.6 88.9L1010.3 85.2L1023.6 86.3L1031.1 87.8L1034.9 82.5L1033.8 78.7L1042.5 73.1L1050.1 73.8L1055.8 80.6L1055.8 90.1L1059.6 95.7L1065.2 95.7L1067.1 90.1L1072.8 76.8L1086.1 71.2L1106.9 67.4L1110.7 65.1L1129.7 63.6L1141.0 61.7L1160.0 59.8L1175.2 55.3L1190.3 57.9L1205.5 59.8L1201.7 70.8L1213.1 71.2L1228.2 71.2L1247.2 73.1L1262.3 71.2L1269.9 74.9L1277.5 80.6L1292.7 78.4L1311.6 74.9L1330.5 75.7L1349.5 78.7L1368.5 80.6L1383.6 81.4L1391.2 86.3L1413.9 85.5L1429.1 84.4L1448.0 85.2L1463.2 88.6L1463.2 103.3L1451.8 104.1L1459.4 112.8L1448.0 113.5L1436.7 118.4L1425.3 122.2L1410.1 121.1L1402.6 122.2L1398.8 126.0L1395.0 129.8L1398.8 137.3L1393.1 143.0L1387.4 148.7L1381.7 150.6L1374.9 156.2L1371.5 144.9L1370.3 139.2L1372.2 131.7L1379.8 129.8L1387.4 124.1L1387.4 116.5L1376.0 116.5L1368.5 124.8L1357.1 126.0L1345.7 124.1L1334.3 124.8L1323.0 124.8L1313.5 129.8L1304.0 137.3L1302.1 144.9L1309.7 144.1L1315.4 148.7L1313.5 160.0L1311.6 167.6L1304.0 173.2L1296.4 180.8L1285.1 187.2L1277.5 188.4L1276.0 188.7L1277.5 182.7L1278.2 177.8L1285.1 178.9L1290.8 167.6L1285.1 166.8L1276.4 164.2L1266.1 161.9L1264.2 158.1L1256.6 148.7L1247.2 146.8L1235.8 147.5L1232.0 160.0L1227.5 161.9L1222.9 160.4L1213.1 158.9L1197.9 162.6L1190.3 162.6L1182.7 158.9L1169.5 158.1L1167.6 154.3L1153.6 153.6L1150.5 160.8L1138.4 158.1L1129.7 157.4L1122.1 158.1L1113.8 163.0L1111.9 163.4L1105.0 161.9L1095.6 157.0L1084.2 157.0L1075.9 147.5L1069.0 143.7L1057.7 145.6L1046.3 140.3L1027.3 142.6L1012.2 145.3L1012.2 153.2L1006.5 158.1L989.5 157.0L976.2 154.3L962.9 158.9L958.4 165.7L961.0 168.7L966.7 174.0L961.0 176.6L959.1 182.7L961.0 189.5L957.2 190.6L947.8 187.6L932.6 184.9L925.0 181.5L922.4 177.8L926.9 172.1L925.8 171.0L932.6 167.6L932.6 161.5L925.8 160.0L915.2 157.7L909.9 151.7L902.3 152.1L901.5 148.7L897.7 138.8L887.9 136.6L885.2 130.5L887.1 124.1L895.5 122.6L889.0 120.3L886.4 120.3L892.8 116.5L900.4 111.2L893.9 107.8L894.7 103.3L892.8 97.6L894.7 93.1L889.0 91.2L890.5 88.2ZM978.1 78.7L989.5 82.1L998.9 81.8L995.1 76.8L998.9 71.2L1008.4 67.4L1019.8 63.6L1031.1 61.7L1040.6 58.3L1023.6 57.9L1008.4 61.0L997.0 65.5L989.5 71.2L983.8 74.9ZM1135.4 48.5L1144.8 52.3L1160.0 53.0L1177.1 51.9L1171.4 48.5L1160.0 44.7L1144.8 42.1L1129.7 44.7ZM1300.2 64.4L1311.6 69.3L1324.9 70.8L1336.2 64.7L1321.1 62.9L1309.7 61.7ZM1319.2 175.1L1324.9 173.2L1323.7 162.6L1328.7 163.8L1323.0 150.6L1321.1 143.7L1319.2 154.3L1319.2 167.6ZM98.8 88.6L110.2 90.8L117.8 93.9L131.0 96.1L137.8 99.5L131.0 102.2L125.3 105.9L115.9 103.3L106.4 101.4L98.8 103.3Z" fill="#62ac5c"/><path d="M966.7 174.0L974.3 171.3L981.9 172.1L982.6 177.8L976.2 180.8L972.4 182.7L980.7 190.2L991.3 192.9L993.2 178.9L1002.7 177.0L1012.2 181.5L1016.0 184.6L1031.1 186.8L1038.7 194.0L1042.5 192.1L1050.1 189.1L1059.6 188.4L1065.2 187.2L1084.2 186.8L1086.1 178.9L1093.7 177.0L1095.6 171.3L1103.2 171.3L1111.9 163.4L1105.0 161.9L1095.6 157.0L1084.2 157.0L1075.9 147.5L1069.0 143.7L1057.7 145.6L1046.3 140.3L1027.3 142.6L1012.2 145.3L1012.2 153.2L1006.5 158.1L989.5 157.0L976.2 154.3L962.9 158.9L958.4 165.7L961.0 168.7Z" fill="#c8e2c8"/><path d="M1113.8 163.0L1122.1 158.1L1129.7 157.4L1138.4 158.1L1150.5 160.8L1153.6 153.6L1167.6 154.3L1169.5 158.1L1182.7 158.9L1190.3 162.6L1197.9 162.6L1213.1 158.9L1222.9 160.4L1218.7 167.6L1225.9 168.3L1234.7 171.3L1225.9 172.9L1209.3 179.7L1203.6 184.6L1186.5 190.2L1179.0 191.8L1163.8 188.4L1146.0 187.2L1142.2 181.5L1125.5 177.8L1125.9 171.7L1116.8 166.8Z" fill="#c8e2c8"/><path d="M1059.6 199.7L1065.2 195.9L1070.9 195.9L1078.5 192.1L1084.2 190.2L1084.2 186.8L1086.1 178.9L1093.7 177.0L1095.6 171.3L1103.2 171.3L1111.9 163.4L1113.8 163.0L1116.8 166.8L1125.9 171.7L1125.5 177.8L1142.2 181.5L1146.0 187.2L1163.8 188.4L1179.0 191.8L1186.5 190.2L1203.6 184.6L1209.3 179.7L1225.9 172.9L1234.7 171.3L1225.9 168.3L1218.7 167.6L1222.9 160.4L1227.5 161.9L1232.0 160.0L1235.8 147.5L1247.2 146.8L1256.6 148.7L1264.2 158.1L1266.1 161.9L1276.4 164.2L1285.1 166.8L1290.8 167.6L1285.1 178.9L1278.2 177.8L1277.5 182.7L1276.0 188.7L1271.8 188.7L1266.1 190.2L1260.4 191.4L1252.1 197.8L1243.4 195.9L1239.6 194.4L1233.9 198.6L1228.2 200.8L1227.1 204.2L1232.0 208.4L1237.7 206.9L1245.3 209.1L1237.7 212.9L1233.1 216.7L1237.7 224.3L1243.0 229.2L1241.5 233.7L1243.4 236.4L1241.5 241.3L1237.7 245.1L1233.9 250.7L1228.2 256.4L1222.5 262.1L1213.1 264.7L1205.5 266.6L1199.8 268.9L1197.1 267.7L1190.3 267.4L1185.4 262.8L1180.8 260.9L1171.4 263.6L1168.0 264.3L1166.1 268.9L1164.5 268.9L1160.8 267.7L1156.2 265.5L1158.1 262.4L1155.1 258.7L1150.9 258.7L1155.1 251.1L1155.1 245.1L1150.5 242.0L1145.6 241.6L1137.3 239.4L1128.2 243.9L1120.2 242.4L1115.3 243.5L1106.9 243.2L1097.5 238.6L1088.4 234.8L1080.4 229.9L1079.7 228.8L1081.5 224.3L1076.6 218.6L1072.8 214.8L1069.0 210.3L1064.9 208.4L1064.5 203.8ZM1192.6 276.4L1199.8 273.4L1201.7 274.9L1196.4 280.2L1193.0 279.1Z" fill="#22551e"/><path d="M1236.2 262.1L1239.6 254.1L1243.0 254.5L1238.8 265.8Z" fill="#9bcf95"/><path d="M1261.2 206.1L1258.9 210.3L1260.4 219.0L1264.6 217.8L1271.0 216.3L1271.8 209.9L1267.6 203.1Z" fill="#62ac5c"/><path d="M1277.1 220.5L1281.3 215.6L1294.5 214.1L1299.9 208.8L1309.7 205.4L1311.6 197.8L1314.6 192.1L1317.3 195.9L1319.2 201.6L1315.0 209.1L1314.6 214.1L1310.8 216.7L1305.9 218.2L1299.5 219.3L1293.4 221.2L1285.1 219.3L1277.5 220.9ZM1272.9 223.1L1277.5 220.9L1280.1 226.1L1277.5 230.7L1274.5 231.1L1271.8 226.1ZM1283.2 224.3L1288.9 219.0L1291.5 221.2L1285.1 225.0ZM1311.6 192.1L1317.3 188.4L1324.1 190.2L1332.4 185.3L1328.7 182.7L1318.8 177.0L1317.3 183.4L1312.7 185.3L1311.6 188.4Z" fill="#62ac5c"/><path d="M991.3 192.9L993.2 192.9L1002.7 189.1L1008.4 190.2L1012.2 192.9L1017.9 197.8L1023.6 199.7L1031.1 202.3L1033.0 207.6L1038.0 208.4L1040.6 203.5L1048.2 199.3L1050.1 195.9L1057.7 194.8L1050.1 192.1L1042.5 192.1L1038.7 194.0L1031.1 186.8L1016.0 184.6L1012.2 181.5L1002.7 177.0L993.2 178.9Z" fill="#dff0e2"/><path d="M980.0 191.0L981.9 197.8L983.8 200.4L985.7 207.6L997.0 204.6L1006.5 207.2L1012.9 210.7L1017.9 215.6L1027.3 207.2L1033.0 207.6L1031.1 202.3L1023.6 199.7L1017.9 197.8L1012.2 192.9L1008.4 190.2L1002.7 189.1L993.2 192.9L991.3 192.9L980.7 190.2Z" fill="#f4f6f3"/><path d="M1050.1 189.1L1059.6 188.4L1065.2 187.2L1084.2 186.8L1084.2 190.2L1078.5 192.1L1070.9 195.9L1065.2 195.9L1059.6 199.7L1050.1 199.7L1044.4 197.8L1050.1 195.9L1057.7 194.8L1050.1 192.1L1042.5 192.1Z" fill="#dff0e2"/><path d="M1038.0 208.4L1046.3 207.2L1052.0 205.7L1064.9 208.4L1064.5 203.8L1059.6 199.7L1050.1 199.7L1044.4 197.8L1048.2 194.0L1048.2 199.3L1040.6 203.5Z" fill="#f4f6f3"/><path d="M1017.9 237.9L1033.0 235.6L1038.7 229.9L1046.3 228.0L1044.4 222.4L1050.1 218.6L1052.0 212.9L1055.8 209.9L1064.9 208.4L1052.0 205.7L1046.3 207.2L1038.0 208.4L1033.0 207.6L1027.3 207.2L1017.9 215.6L1012.9 214.4L1011.4 219.3L1010.3 224.3L1011.8 229.9L1015.2 231.8L1011.8 236.4Z" fill="#f4f6f3"/><path d="M1014.5 253.7L1023.6 253.4L1033.0 253.0L1036.8 258.3L1039.5 259.4L1041.8 257.1L1048.2 252.6L1046.3 248.8L1050.1 243.9L1059.6 236.0L1063.4 231.8L1064.1 226.1L1061.5 219.3L1067.1 216.7L1072.8 214.8L1069.0 210.3L1064.9 208.4L1055.8 209.9L1052.0 212.9L1050.1 218.6L1044.4 222.4L1046.3 228.0L1038.7 229.9L1033.0 235.6L1017.9 237.9L1020.9 246.9L1016.0 248.8Z" fill="#62ac5c"/><path d="M950.8 198.9L953.4 201.6L957.2 202.0L962.5 199.3L966.3 203.8L968.6 207.2L974.3 209.9L985.7 209.5L985.7 207.6L997.0 204.6L1006.5 207.2L1012.9 210.7L1012.9 214.4L1011.4 219.3L1010.3 224.3L1011.8 229.9L1015.2 231.8L1011.8 236.4L1017.9 237.9L1020.9 246.9L1016.0 248.8L1014.5 253.7L998.9 251.9L994.4 246.2L987.6 248.5L976.2 243.5L970.5 235.6L964.8 235.6L961.8 231.8L961.0 224.3L955.3 222.4L953.4 216.7L951.5 211.0L948.9 208.4Z" fill="#62ac5c"/><path d="M957.2 190.6L965.2 191.0L971.6 196.7L966.7 201.6L966.3 203.8L962.5 199.3L957.2 202.0L953.4 201.6L951.5 197.8L953.4 194.0L951.5 192.9Z" fill="#dff0e2"/><path d="M945.9 193.6L951.5 192.9L953.4 194.0L951.5 197.8L953.4 201.6L950.8 198.9L945.9 195.9Z" fill="#dff0e2"/><path d="M932.6 184.9L947.8 187.6L957.2 190.6L951.5 192.9L945.9 193.6L938.3 192.1Z" fill="#c8e2c8"/><path d="M948.9 208.4L941.7 208.8L937.5 211.4L936.4 219.0L928.1 222.7L929.9 227.3L936.4 231.1L950.4 238.6L957.2 239.0L961.8 235.6L964.8 235.6L961.8 231.8L961.0 224.3L955.3 222.4L953.4 216.7L951.5 211.0Z" fill="#9bcf95"/><path d="M916.7 213.7L917.4 210.7L920.1 209.9L932.6 209.9L941.7 208.8L937.5 211.4L936.4 219.0L928.1 222.7L920.5 226.9L915.9 223.1L919.7 219.7L917.1 218.2Z" fill="#dff0e2"/><path d="M914.0 223.9L915.9 223.1L919.7 219.7L917.1 218.2L915.5 220.9Z" fill="#c8e2c8"/><path d="M911.0 230.7L914.0 223.9L915.9 223.1L915.9 225.4L915.5 229.9L913.7 237.5L913.3 237.5Z" fill="#62ac5c"/><path d="M913.7 237.9L917.4 238.6L923.1 235.6L925.0 229.9L929.9 227.3L928.1 222.7L920.5 226.9L915.9 225.4L915.5 229.9Z" fill="#c8e2c8"/><path d="M913.3 237.5L917.4 238.6L923.1 235.6L925.0 229.9L929.9 227.3L936.4 231.1L950.4 238.6L957.2 239.0L964.4 241.3L968.6 246.9L971.3 250.0L973.5 255.3L976.6 257.1L980.0 262.4L991.3 263.2L989.5 273.4L978.1 277.2L964.8 280.2L955.3 283.6L944.7 284.7L942.1 282.9L937.1 275.3L930.7 267.7L926.9 260.2L921.2 252.6L914.4 243.2Z" fill="#62ac5c"/><path d="M944.7 284.7L955.3 283.6L964.8 280.2L978.1 277.2L982.2 286.3L978.8 290.0L966.7 296.1L953.4 299.1L945.9 301.0L943.2 293.1Z" fill="#c8e2c8"/><path d="M978.1 277.2L989.5 273.4L991.3 263.2L994.4 254.9L1000.1 260.2L1007.6 263.9L1002.7 271.5L999.7 277.2L990.6 282.9L982.2 286.3Z" fill="#c8e2c8"/><path d="M976.6 257.1L985.7 257.9L993.2 252.2L994.4 254.9L991.3 263.2L980.0 262.4Z" fill="#c8e2c8"/><path d="M973.5 255.3L976.6 257.1L976.6 251.5L975.0 250.3Z" fill="#9bcf95"/><path d="M957.2 239.0L964.4 241.3L962.9 235.6L961.8 235.6Z" fill="#c8e2c8"/><path d="M1039.5 259.4L1042.5 264.7L1048.2 270.4L1055.8 269.6L1056.9 277.2L1059.6 288.5L1063.4 299.9L1067.1 305.5L1069.0 311.2L1074.7 318.4L1078.5 315.0L1080.4 313.8L1083.4 309.3L1085.3 298.7L1085.3 290.4L1092.9 286.3L1101.3 277.9L1110.4 270.4L1112.6 266.6L1118.3 266.6L1118.3 263.9L1117.2 257.1L1115.3 253.7L1121.3 250.7L1129.7 254.5L1130.8 257.5L1127.8 262.1L1131.6 263.9L1134.6 258.3L1139.2 256.4L1141.0 250.7L1149.4 246.2L1145.6 241.6L1137.3 239.4L1128.2 243.9L1129.7 247.3L1118.3 247.7L1115.3 249.2L1103.2 248.5L1095.6 245.4L1084.6 240.1L1088.4 234.8L1080.4 229.9L1079.7 228.8L1081.5 224.3L1076.6 218.6L1072.8 214.8L1067.1 216.7L1061.5 219.3L1064.1 226.1L1063.4 231.8L1059.6 236.0L1050.1 243.9L1046.3 248.8L1048.2 252.6L1041.8 257.1Z" fill="#62ac5c"/><path d="M1084.6 240.1L1095.6 245.4L1103.2 248.5L1115.3 249.2L1115.3 243.5L1106.9 243.2L1097.5 238.6L1088.4 234.8Z" fill="#c8e2c8"/><path d="M1118.3 247.7L1129.7 247.3L1128.2 243.9L1120.2 242.4Z" fill="#f4f6f3"/><path d="M1118.3 266.6L1124.0 265.8L1128.9 264.7L1130.8 269.6L1132.0 265.8L1131.6 263.9L1127.8 262.1L1130.8 257.5L1129.7 254.5L1121.3 250.7L1115.3 253.7L1117.2 257.1L1118.3 263.9Z" fill="#9bcf95"/><path d="M1083.4 318.0L1085.0 312.0L1089.1 316.9L1091.4 320.6L1088.7 325.6L1084.2 325.6Z" fill="#c8e2c8"/><path d="M1132.0 268.9L1135.4 275.3L1138.4 288.5L1142.9 289.3L1150.5 285.5L1151.7 294.2L1154.7 304.8L1154.7 311.2L1157.0 305.5L1156.2 299.9L1153.2 292.3L1154.7 287.8L1150.1 279.1L1152.4 274.5L1158.1 272.6L1160.4 271.9L1164.5 268.9L1160.8 267.7L1156.2 265.5L1158.1 262.4L1155.1 258.7L1150.9 258.7L1155.1 251.1L1155.1 245.1L1150.5 242.0L1145.6 241.6L1149.4 246.2L1141.0 250.7L1139.2 256.4L1134.6 258.3L1131.6 263.9Z" fill="#f4f6f3"/><path d="M1190.3 267.4L1185.4 271.5L1182.0 277.2L1184.6 282.9L1193.4 290.8L1195.2 299.9L1193.7 306.3L1186.5 309.7L1178.2 316.5L1178.6 309.7L1183.5 307.4L1188.4 302.5L1188.4 294.6L1187.7 288.5L1184.6 285.5L1179.7 279.1L1175.9 274.9L1175.2 270.4L1168.0 264.3L1171.4 263.6L1180.8 260.9L1185.4 262.8Z" fill="#9bcf95"/><path d="M1168.0 264.3L1175.2 270.4L1175.9 274.9L1179.7 279.1L1184.6 285.5L1187.7 288.5L1188.4 294.6L1182.4 296.1L1180.8 290.4L1178.2 286.6L1171.4 281.3L1165.7 282.1L1163.8 275.3L1160.4 271.9L1164.5 268.9L1166.1 268.9Z" fill="#dff0e2"/><path d="M1169.5 302.9L1172.1 308.2L1177.1 309.7L1178.6 309.7L1183.5 307.4L1188.4 302.5L1188.4 294.6L1182.4 296.1L1171.0 294.9Z" fill="#dff0e2"/><path d="M1160.4 271.9L1163.8 275.3L1165.7 282.1L1171.4 281.3L1178.2 286.6L1180.8 290.4L1182.4 296.1L1171.0 294.9L1169.5 302.9L1163.8 301.0L1160.0 298.0L1157.0 309.3L1161.1 317.6L1163.8 322.9L1168.0 325.6L1160.8 324.4L1153.6 318.0L1154.7 311.2L1157.0 305.5L1156.2 299.9L1153.2 292.3L1154.7 287.8L1150.1 279.1L1152.4 274.5L1158.1 272.6Z" fill="#9bcf95"/><path d="M1160.8 324.4L1168.0 325.6L1173.3 332.0L1172.9 337.7L1175.9 341.4L1173.3 344.1L1164.9 338.4L1161.5 332.0ZM1196.4 342.2L1201.7 343.3L1209.3 336.9L1218.7 330.1L1224.4 322.5L1232.8 328.6L1227.5 333.1L1218.7 333.1L1215.0 339.6L1207.4 343.3L1201.7 345.2Z" fill="#62ac5c"/><path d="M1193.7 343.3L1196.4 342.2L1201.7 345.2L1207.4 343.3L1215.0 339.6L1218.7 333.1L1227.5 333.1L1228.2 345.2L1226.3 349.0L1222.5 356.6L1220.6 363.7L1215.0 364.1L1209.3 361.1L1201.7 360.3L1197.9 354.7L1194.1 349.0ZM1142.2 327.8L1150.5 329.3L1154.3 333.9L1161.5 340.3L1167.6 345.2L1174.0 352.8L1179.0 358.4L1182.7 361.1L1182.0 370.9L1177.1 371.3L1168.7 364.1L1161.1 352.8L1154.7 342.6L1144.8 333.9ZM1179.7 374.7L1182.7 371.3L1191.5 372.4L1199.8 375.1L1208.1 375.1L1215.0 378.5L1214.6 381.9L1201.7 380.0L1190.3 378.5L1184.3 377.0ZM1232.0 369.8L1237.7 369.8L1238.8 359.2L1241.5 366.0L1247.2 366.0L1241.5 356.6L1247.2 352.8L1239.6 352.8L1235.8 347.1L1252.9 344.1L1254.8 343.3L1237.7 344.1L1233.9 350.9L1231.3 360.3ZM1277.5 354.7L1285.1 351.6L1290.8 358.4L1302.1 354.7L1315.4 358.8L1315.4 383.4L1307.8 379.6L1303.3 380.8L1304.0 373.6L1292.7 366.0L1285.1 364.1L1281.3 359.6ZM1216.8 379.6L1220.6 381.1L1232.0 381.1L1243.4 380.4L1247.2 381.5L1235.8 383.0L1222.5 383.0ZM1232.0 385.3L1238.8 387.6L1235.8 386.8ZM1251.0 384.2L1255.9 380.4L1263.5 380.8L1252.9 387.6ZM1258.5 360.3L1266.1 361.1L1262.3 363.4ZM1264.2 343.3L1268.0 345.2L1266.1 350.9L1264.2 347.1ZM1271.8 359.6L1277.5 361.1L1273.7 362.2Z" fill="#9bcf95"/><path d="M1315.4 358.8L1326.8 363.4L1334.3 369.8L1340.0 372.4L1338.1 378.5L1345.7 384.9L1352.5 387.9L1340.0 387.6L1334.3 381.1L1326.8 378.1L1323.0 383.4L1315.4 383.4ZM1343.8 369.8L1353.3 367.9L1357.1 364.9L1351.4 372.8ZM1353.3 359.6L1359.0 362.2L1360.9 366.0ZM1366.6 369.8L1370.3 371.7L1368.5 373.6Z" fill="#f4f6f3"/><path d="M1235.8 279.1L1244.1 279.1L1243.4 288.5L1241.5 294.2L1245.3 296.1L1251.0 299.9L1249.1 301.8L1241.5 296.8L1237.7 294.2L1235.0 287.4ZM1243.4 322.5L1249.1 316.9L1256.6 313.1L1260.4 322.5L1256.6 327.5L1251.0 324.4ZM1225.2 317.6L1233.9 306.3L1230.1 313.1ZM1245.3 309.3L1249.1 307.4L1247.2 313.1ZM1252.9 305.5L1256.6 301.8L1254.8 311.2ZM1239.6 301.8L1241.5 298.0L1237.7 298.7Z" fill="#dff0e2"/><path d="M1252.9 382.6L1263.5 380.8L1254.8 384.9Z" fill="#dff0e2"/><path d="M1173.6 344.1L1175.2 343.7L1174.8 344.5Z" fill="#62ac5c"/><path d="M1213.4 431.4L1222.5 427.6L1232.0 424.6L1239.6 422.7L1244.1 417.0L1245.3 412.5L1249.1 411.4L1254.8 403.8L1262.3 401.2L1266.9 405.7L1271.8 405.3L1273.7 398.1L1277.5 395.1L1283.6 392.5L1287.0 394.4L1292.7 395.1L1299.9 395.5L1296.4 400.0L1294.5 405.7L1302.1 410.6L1305.9 412.5L1313.5 415.5L1317.3 405.7L1317.7 396.2L1321.1 389.4L1324.9 397.8L1328.7 403.8L1331.7 405.7L1332.4 413.3L1335.5 420.1L1343.8 425.4L1345.7 428.4L1352.5 434.4L1357.1 441.6L1360.9 444.3L1361.6 451.1L1363.1 457.1L1360.9 466.2L1359.0 471.9L1355.2 473.7L1352.5 479.4L1350.3 483.6L1349.5 490.8L1341.2 492.3L1335.9 496.8L1329.8 492.3L1324.9 495.7L1314.3 492.6L1310.5 489.6L1307.8 483.9L1304.0 483.9L1305.9 479.4L1304.0 477.5L1303.3 472.2L1302.1 473.7L1300.2 480.5L1296.4 481.3L1293.8 479.8L1292.7 475.6L1289.6 473.0L1278.2 468.1L1266.1 469.2L1258.5 471.1L1251.0 473.7L1249.1 477.1L1235.8 477.1L1228.2 481.3L1220.6 481.3L1216.8 478.7L1219.1 474.9L1219.5 468.1L1216.8 462.4L1216.5 458.6L1213.1 453.0L1210.8 449.2L1210.0 448.0L1212.3 445.4L1211.2 439.7L1211.9 434.0ZM1329.0 502.8L1336.2 504.4L1343.1 503.6L1341.9 512.3L1337.4 513.8L1331.3 508.9Z" fill="#2e6a2a"/><path d="M1435.5 479.0L1441.6 483.2L1444.2 488.1L1447.7 490.8L1451.8 492.3L1457.5 491.5L1455.2 497.2L1451.1 500.6L1445.0 506.2L1442.7 499.4L1439.7 497.2L1442.7 489.6ZM1435.5 502.1L1441.6 505.1L1438.6 510.0L1435.2 514.6L1429.8 517.2L1427.6 522.5L1421.5 525.1L1412.0 522.9L1418.9 515.3L1427.2 511.5L1432.1 505.9Z" fill="#62ac5c"/><path d="M1402.6 425.4L1413.9 433.3L1406.3 430.3ZM1453.0 415.1L1457.9 413.3L1456.8 417.8L1453.3 417.4ZM1383.6 379.2L1389.3 384.9L1385.5 384.2ZM1389.3 383.0L1393.1 386.0L1391.2 381.1ZM1412.0 405.7L1413.9 407.6L1412.8 404.2ZM1376.0 375.5L1381.7 377.7L1377.9 380.0Z" fill="#ffffff"/><path d="M758.6 213.7L772.7 216.3L774.6 220.5L774.6 226.1L767.4 229.2L761.3 235.6L748.0 240.5L748.0 244.3L748.0 250.7L735.5 250.7L735.5 260.2L731.4 262.8L731.7 268.5L716.6 268.5L718.5 263.9L724.2 256.4L726.0 250.3L731.0 244.3L737.4 242.0L743.9 237.1L743.9 230.3L748.8 223.1L755.2 220.1Z" fill="#c8e2c8"/><path d="M772.7 216.3L784.8 211.0L796.2 209.5L813.6 209.5L812.8 215.9L812.5 220.5L809.4 223.5L817.0 234.8L818.5 245.1L817.0 250.0L820.0 256.4L826.1 260.2L809.4 270.4L803.0 275.7L796.9 276.4L793.5 277.2L784.8 269.6L762.4 255.6L748.0 245.8L748.0 244.3L748.0 240.5L761.3 235.6L767.4 229.2L774.6 226.1L774.6 220.5Z" fill="#c8e2c8"/><path d="M813.6 209.5L820.0 208.0L823.1 209.5L820.8 214.8L823.1 215.9L818.9 219.7L824.6 223.9L824.6 226.5L820.0 229.9L817.0 234.8L809.4 223.5L812.5 220.5L812.8 215.9Z" fill="#c8e2c8"/><path d="M824.6 223.9L830.3 224.6L838.6 226.9L840.5 230.3L852.6 234.1L856.8 231.8L856.8 227.7L862.5 224.6L868.2 225.8L875.8 229.6L875.8 235.6L875.8 265.8L875.8 273.4L872.0 275.3L841.3 260.5L834.8 263.6L826.1 260.2L820.0 256.4L817.0 250.0L818.5 245.1L817.0 234.8L820.0 229.9L824.6 226.5Z" fill="#c8e2c8"/><path d="M875.8 229.6L890.9 232.2L898.5 229.6L903.4 230.7L911.0 230.7L913.3 237.5L909.9 243.9L908.0 241.3L904.6 236.0L908.0 245.1L915.5 258.3L920.9 265.8L900.4 265.8L875.8 265.8L875.8 235.6Z" fill="#62ac5c"/><path d="M875.8 265.8L900.4 265.8L920.9 265.8L922.4 271.5L925.0 281.0L921.2 284.7L919.3 294.9L911.8 307.4L910.2 316.5L906.1 319.5L914.8 328.2L909.9 333.1L908.0 334.6L897.7 335.8L890.9 332.0L884.8 329.7L875.8 320.6L872.0 316.1L870.1 315.0L866.3 309.3L867.8 305.5L863.6 301.4L866.3 296.1L871.6 289.7L872.0 275.3L875.8 273.4Z" fill="#c8e2c8"/><path d="M919.3 294.9L921.2 284.7L925.0 281.0L928.8 288.5L936.4 294.2L944.3 301.0L941.7 301.8L932.6 294.2L926.9 294.2L923.1 295.3Z" fill="#dff0e2"/><path d="M941.7 301.8L944.3 301.0L945.5 305.5L943.2 307.4L939.4 307.4Z" fill="#f4f6f3"/><path d="M911.8 307.4L919.3 294.9L923.1 295.3L926.9 294.2L932.6 294.2L941.7 301.8L939.4 307.4L943.2 307.4L947.8 315.0L962.5 318.8L951.2 330.1L944.0 330.5L939.4 334.3L932.6 333.9L925.0 335.4L917.1 331.6L914.8 328.2L906.1 319.5L910.2 316.5Z" fill="#c8e2c8"/><path d="M943.2 307.4L945.9 306.3L951.5 309.3L962.9 306.7L975.4 304.4L974.3 309.7L972.4 315.0L968.6 324.4L964.8 330.1L957.2 339.6L945.9 347.1L938.3 355.4L936.4 352.8L936.4 338.4L939.4 334.3L944.0 330.5L951.2 330.1L962.5 318.8L947.8 315.0Z" fill="#f4f6f3"/><path d="M938.3 355.4L933.4 359.2L929.6 366.8L923.9 360.3L909.9 352.8L909.9 345.2L912.9 341.4L909.9 333.1L917.1 331.6L925.0 335.4L932.6 333.9L939.4 334.3L936.4 338.4L936.4 352.8Z" fill="#c8e2c8"/><path d="M893.6 354.3L896.6 352.8L909.5 352.8L909.9 345.2L912.9 341.4L909.9 333.1L908.0 334.6L897.7 335.8L894.7 343.3L893.2 349.0Z" fill="#c8e2c8"/><path d="M890.9 354.3L896.6 352.8L897.7 357.7L890.9 359.6Z" fill="#c8e2c8"/><path d="M890.9 359.6L897.7 357.7L896.6 365.6L892.0 365.6Z" fill="#dff0e2"/><path d="M896.6 352.8L909.5 352.8L909.9 352.8L923.9 360.3L929.6 366.8L928.1 373.6L930.7 379.2L934.5 388.7L923.1 392.8L913.7 392.5L911.8 384.9L906.1 384.5L898.5 381.1L896.6 380.4L892.8 371.7L892.0 365.6L896.6 365.6L897.7 357.7Z" fill="#c8e2c8"/><path d="M827.2 371.7L830.3 371.3L842.8 371.3L847.3 379.2L853.0 379.2L863.6 376.6L864.4 386.8L872.0 390.6L877.6 391.3L885.2 394.4L889.0 398.1L892.8 399.3L893.9 395.1L889.0 392.5L889.0 381.1L896.6 380.4L892.8 371.7L892.0 365.6L890.9 359.6L890.9 354.3L893.6 354.3L893.2 349.0L894.7 343.3L897.7 335.8L890.9 332.0L884.8 329.7L875.8 330.1L866.3 333.1L858.7 332.0L851.1 335.8L851.1 341.4L847.3 352.8L841.6 358.4L834.1 366.0L829.5 367.1Z" fill="#c8e2c8"/><path d="M823.4 363.7L829.5 367.1L834.1 366.0L841.6 358.4L847.3 352.8L851.1 341.4L851.1 335.8L843.5 335.4L841.6 341.4L831.4 340.7L835.2 343.7L830.3 358.1L825.7 358.4Z" fill="#dff0e2"/><path d="M816.2 345.2L818.1 340.7L823.8 340.7L831.4 340.7L835.2 343.7L830.3 358.1L825.7 358.4L823.4 363.7L815.1 354.7L816.2 349.0Z" fill="#dff0e2"/><path d="M818.1 340.7L823.8 340.7L823.8 345.2L816.2 345.2Z" fill="#f4f6f3"/><path d="M813.2 332.0L818.1 340.7L823.8 340.7L831.4 340.7L841.6 341.4L843.5 335.4L837.8 333.9L836.0 326.3L839.7 320.6L834.1 311.2L839.7 311.2L834.8 302.1L836.0 299.9L832.2 301.8L832.2 309.3L825.7 322.5L818.9 322.5L814.4 328.2Z" fill="#c8e2c8"/><path d="M836.0 326.3L837.8 333.9L843.5 335.4L851.1 335.8L858.7 332.0L866.3 333.1L875.8 330.1L884.8 329.7L875.8 320.6L872.0 316.1L870.1 315.0L866.3 309.3L860.6 313.1L853.0 315.0L841.6 320.6L839.7 320.6Z" fill="#dff0e2"/><path d="M841.3 260.5L872.0 275.3L871.6 289.7L866.3 296.1L863.6 301.4L867.8 305.5L866.3 309.3L860.6 313.1L853.0 315.0L841.6 320.6L839.7 320.6L834.1 311.2L839.7 311.2L834.8 302.1L836.0 299.9L832.5 296.5L837.8 288.5L840.5 273.8L834.8 263.6Z" fill="#f4f6f3"/><path d="M796.9 276.4L803.0 275.7L809.4 270.4L826.1 260.2L834.8 263.6L840.5 273.8L837.8 288.5L832.5 296.5L828.4 299.1L818.9 298.7L807.5 299.9L796.2 298.0L794.6 304.8L790.5 302.5L784.8 299.9L781.8 292.7L794.3 290.8L796.9 285.1Z" fill="#f4f6f3"/><path d="M762.4 255.6L784.8 269.6L793.5 277.2L796.9 276.4L796.9 285.1L794.3 290.8L781.8 292.7L779.1 291.5L773.4 294.2L769.6 297.6L764.7 301.0L760.5 309.7L752.2 310.1L749.5 307.4L745.8 302.5L739.3 302.9L737.8 302.1L734.8 293.8L736.7 290.8L760.2 290.4L760.2 286.6L756.4 254.9Z" fill="#dff0e2"/><path d="M716.6 268.5L731.7 268.5L731.4 262.8L735.5 260.2L735.5 250.7L748.0 250.7L748.0 245.8L762.4 255.6L756.4 254.9L760.2 286.6L760.2 290.4L736.7 290.8L734.8 293.8L727.9 286.3L718.5 287.8L720.4 279.1Z" fill="#f4f6f3"/><path d="M718.5 287.8L727.9 286.3L734.8 293.8L737.8 302.1L729.1 301.4L717.7 302.1L714.7 293.4Z" fill="#c8e2c8"/><path d="M717.7 302.1L729.1 301.4L729.1 304.4L724.2 307.4Z" fill="#dff0e2"/><path d="M729.1 301.4L737.8 302.1L739.3 302.9L745.8 302.5L749.5 307.4L752.2 310.1L750.7 316.9L745.0 316.9L742.0 316.9L740.1 312.3L730.6 313.1L724.2 307.4L729.1 304.4Z" fill="#dff0e2"/><path d="M730.6 313.1L740.1 312.3L742.0 316.9L737.4 322.9L731.7 319.5Z" fill="#f4f6f3"/><path d="M737.4 322.9L742.0 316.9L745.0 316.9L748.8 320.6L752.6 332.4L746.9 330.1Z" fill="#dff0e2"/><path d="M752.6 332.4L748.8 320.6L750.7 316.9L752.2 310.1L760.5 309.7L764.7 312.7L770.8 312.3L770.8 330.1L769.6 329.7L762.0 329.7Z" fill="#c8e2c8"/><path d="M760.5 309.7L760.2 305.9L764.7 301.0L769.6 297.6L773.4 294.2L779.1 291.5L781.8 292.7L784.8 299.9L790.5 302.5L784.8 307.4L780.6 307.0L770.8 307.4L770.8 312.3L764.7 312.7Z" fill="#dff0e2"/><path d="M769.6 329.7L770.8 330.1L770.8 312.3L770.8 307.4L780.6 307.0L782.9 309.3L782.1 318.8L785.5 325.9L779.1 328.6L773.4 330.9Z" fill="#c8e2c8"/><path d="M785.5 325.9L782.1 318.8L782.9 309.3L780.6 307.0L784.4 307.4L787.1 315.0L787.1 325.6Z" fill="#dff0e2"/><path d="M787.1 325.6L787.1 315.0L784.4 307.4L784.8 307.4L790.5 302.5L794.6 304.8L791.2 315.0L791.2 324.8Z" fill="#c8e2c8"/><path d="M791.2 324.8L791.2 315.0L794.6 304.8L796.2 298.0L807.5 299.9L818.9 298.7L828.4 299.1L832.5 296.5L836.0 299.9L832.2 301.8L832.2 309.3L825.7 322.5L818.9 322.5L814.4 328.2L813.2 332.0L807.5 332.4L803.4 332.7L798.1 325.2Z" fill="#9bcf95"/><path d="M825.7 414.0L831.8 412.9L841.6 414.8L851.1 414.8L860.6 417.0L869.7 415.5L864.4 409.5L864.4 398.1L872.0 398.1L872.0 390.6L864.4 386.8L863.6 376.6L853.0 379.2L847.3 379.2L842.8 371.3L830.3 371.3L827.2 371.7L831.0 382.3L830.3 390.6L827.2 400.0Z" fill="#f4f6f3"/><path d="M864.4 398.1L864.4 409.5L869.7 415.5L876.9 416.3L883.3 416.7L889.8 410.6L896.2 408.3L906.1 401.9L907.2 395.5L906.1 384.5L898.5 381.1L896.6 380.4L889.0 381.1L889.0 392.5L893.9 395.1L892.8 399.3L889.0 398.1L885.2 394.4L877.6 391.3L872.0 390.6L872.0 398.1Z" fill="#c8e2c8"/><path d="M906.1 384.5L911.8 384.9L913.7 392.5L915.5 403.8L914.8 413.6L911.8 405.7L907.2 401.9L907.2 395.5Z" fill="#c8e2c8"/><path d="M934.5 388.7L934.5 403.8L928.8 413.3L919.3 420.8L913.7 432.2L915.9 438.6L905.7 447.3L902.3 450.3L899.6 433.7L904.2 428.4L906.1 420.8L905.3 411.4L896.2 408.3L906.1 401.9L907.2 401.9L911.8 405.7L914.8 413.6L915.5 403.8L913.7 392.5L923.1 392.8Z" fill="#c8e2c8"/><path d="M876.9 416.3L883.3 416.7L889.8 410.6L896.2 408.3L905.3 411.4L906.1 420.8L904.2 428.4L899.6 433.7L892.4 432.9L887.1 430.3L879.5 422.7Z" fill="#c8e2c8"/><path d="M856.8 432.2L856.8 442.7L860.2 450.3L866.3 447.3L877.6 445.4L883.3 438.6L892.4 432.9L887.1 430.3L879.5 422.7L876.9 416.3L869.7 415.5L860.6 418.2L860.6 432.2Z" fill="#c8e2c8"/><path d="M825.7 414.0L831.8 412.9L841.6 414.8L851.1 414.8L860.6 417.0L869.7 415.5L876.9 416.3L869.7 416.7L860.6 418.2L860.6 432.2L856.8 432.2L856.8 442.7L856.8 456.4L843.5 457.1L838.6 449.2L836.0 434.0L830.3 424.6Z" fill="#c8e2c8"/><path d="M843.5 457.1L856.8 456.4L860.2 450.3L866.3 447.3L877.6 445.4L883.3 438.6L892.4 432.9L899.6 433.7L902.3 450.3L905.7 450.7L904.2 456.7L898.5 462.4L894.7 467.3L887.1 472.6L878.0 477.5L866.3 477.5L856.8 480.5L850.7 478.3L849.2 470.0L846.6 462.4Z" fill="#62ac5c"/><path d="M883.3 460.9L889.0 457.1L892.4 460.1L887.1 464.7Z" fill="#ffffff"/><path d="M898.5 446.5L902.3 450.3L899.6 452.2L897.7 449.2Z" fill="#c8e2c8"/><path d="M967.8 394.4L972.4 407.6L968.6 415.1L962.9 432.2L959.5 443.1L952.3 445.4L946.6 435.9L945.1 430.3L949.3 420.8L947.8 413.3L957.2 408.3L962.9 400.0Z" fill="#dff0e2"/><path d="M720.4 243.2L722.6 242.4L721.9 243.9ZM716.6 241.6L719.6 240.9L718.1 243.2ZM728.7 239.4L730.2 238.6L728.3 240.5ZM685.1 284.7L687.0 285.5L691.9 292.3L690.8 291.2ZM998.2 424.6L1000.1 425.4L998.9 426.5ZM990.2 428.4L992.5 429.1L991.3 429.9ZM944.7 392.1L945.9 394.0L949.3 395.1ZM801.8 347.9L806.4 347.9L805.6 349.0ZM813.2 334.6L814.7 335.4L814.0 336.9ZM682.5 205.7L685.5 206.5L684.0 206.9ZM673.0 203.1L676.8 202.7L674.9 203.8ZM716.6 224.6L717.7 225.4L715.8 225.8Z" fill="#ffffff"/><path d="M128.0 402.3L131.8 402.3L129.9 399.7ZM173.5 430.3L177.3 430.3L175.4 427.6ZM212.5 416.7L216.3 416.7L214.4 414.0ZM248.5 383.8L252.3 383.8L250.4 381.1ZM115.1 430.3L118.9 430.3L117.0 427.6ZM103.7 414.8L109.0 414.8L106.4 411.1ZM1415.4 412.7L1420.0 412.7L1417.7 409.6ZM1410.5 408.2L1415.1 408.2L1412.8 405.0ZM1434.8 344.5L1438.6 344.5L1436.7 341.8ZM1378.7 324.1L1382.5 324.1L1380.6 321.4ZM1288.9 321.8L1292.7 321.8L1290.8 319.1ZM1331.3 292.7L1335.1 292.7L1333.2 290.0ZM1413.9 316.1L1417.7 316.1L1415.8 313.5ZM1428.0 323.3L1431.7 323.3L1429.8 320.6ZM182.6 343.0L186.3 343.0L184.5 340.3ZM1458.3 382.3L1462.1 382.3L1460.2 379.6Z" fill="#ffffff"/><path d="M150.0 145.3L156.0 144.1L152.2 142.6ZM142.4 149.0L146.2 147.5L144.3 146.8ZM165.1 141.5L168.9 140.7L167.0 139.6Z" fill="#22551e"/><path d="M1039.5 259.4L1042.5 264.7L1048.2 270.4L1055.8 269.6L1056.9 277.2L1059.6 288.5L1063.4 299.9L1067.1 305.5L1069.0 311.2L1074.7 318.4L1078.5 315.0L1080.4 313.8L1083.4 309.3L1085.3 298.7L1085.3 290.4L1092.9 286.3L1101.3 277.9L1110.4 270.4L1112.6 266.6L1118.3 266.6L1118.3 263.9L1117.2 257.1L1115.3 253.7L1121.3 250.7L1129.7 254.5L1130.8 257.5L1127.8 262.1L1131.6 263.9L1134.6 258.3L1139.2 256.4L1141.0 250.7L1149.4 246.2L1145.6 241.6L1137.3 239.4L1128.2 243.9L1129.7 247.3L1118.3 247.7L1115.3 249.2L1103.2 248.5L1095.6 245.4L1084.6 240.1L1088.4 234.8L1080.4 229.9L1079.7 228.8L1081.5 224.3L1076.6 218.6L1072.8 214.8L1067.1 216.7L1061.5 219.3L1064.1 226.1L1063.4 231.8L1059.6 236.0L1050.1 243.9L1046.3 248.8L1048.2 252.6L1041.8 257.1Z" fill="#62ac5c"/><path d="M1084.6 240.1L1095.6 245.4L1103.2 248.5L1115.3 249.2L1115.3 243.5L1106.9 243.2L1097.5 238.6L1088.4 234.8Z" fill="#c8e2c8"/><path d="M1118.3 247.7L1129.7 247.3L1128.2 243.9L1120.2 242.4Z" fill="#f4f6f3"/><path d="M1118.3 266.6L1124.0 265.8L1128.9 264.7L1130.8 269.6L1132.0 265.8L1131.6 263.9L1127.8 262.1L1130.8 257.5L1129.7 254.5L1121.3 250.7L1115.3 253.7L1117.2 257.1L1118.3 263.9Z" fill="#9bcf95"/><path d="M1083.4 318.0L1085.0 312.0L1089.1 316.9L1091.4 320.6L1088.7 325.6L1084.2 325.6Z" fill="#c8e2c8"/><path d="M1132.0 268.9L1135.4 275.3L1138.4 288.5L1142.9 289.3L1150.5 285.5L1151.7 294.2L1154.7 304.8L1154.7 311.2L1157.0 305.5L1156.2 299.9L1153.2 292.3L1154.7 287.8L1150.1 279.1L1152.4 274.5L1158.1 272.6L1160.4 271.9L1164.5 268.9L1160.8 267.7L1156.2 265.5L1158.1 262.4L1155.1 258.7L1150.9 258.7L1155.1 251.1L1155.1 245.1L1150.5 242.0L1145.6 241.6L1149.4 246.2L1141.0 250.7L1139.2 256.4L1134.6 258.3L1131.6 263.9Z" fill="#f4f6f3"/><path d="M1190.3 267.4L1185.4 271.5L1182.0 277.2L1184.6 282.9L1193.4 290.8L1195.2 299.9L1193.7 306.3L1186.5 309.7L1178.2 316.5L1178.6 309.7L1183.5 307.4L1188.4 302.5L1188.4 294.6L1187.7 288.5L1184.6 285.5L1179.7 279.1L1175.9 274.9L1175.2 270.4L1168.0 264.3L1171.4 263.6L1180.8 260.9L1185.4 262.8Z" fill="#9bcf95"/><path d="M1168.0 264.3L1175.2 270.4L1175.9 274.9L1179.7 279.1L1184.6 285.5L1187.7 288.5L1188.4 294.6L1182.4 296.1L1180.8 290.4L1178.2 286.6L1171.4 281.3L1165.7 282.1L1163.8 275.3L1160.4 271.9L1164.5 268.9L1166.1 268.9Z" fill="#dff0e2"/><path d="M1169.5 302.9L1172.1 308.2L1177.1 309.7L1178.6 309.7L1183.5 307.4L1188.4 302.5L1188.4 294.6L1182.4 296.1L1171.0 294.9Z" fill="#dff0e2"/><path d="M1160.4 271.9L1163.8 275.3L1165.7 282.1L1171.4 281.3L1178.2 286.6L1180.8 290.4L1182.4 296.1L1171.0 294.9L1169.5 302.9L1163.8 301.0L1160.0 298.0L1157.0 309.3L1161.1 317.6L1163.8 322.9L1168.0 325.6L1160.8 324.4L1153.6 318.0L1154.7 311.2L1157.0 305.5L1156.2 299.9L1153.2 292.3L1154.7 287.8L1150.1 279.1L1152.4 274.5L1158.1 272.6Z" fill="#9bcf95"/><path d="M1160.8 324.4L1168.0 325.6L1173.3 332.0L1172.9 337.7L1175.9 341.4L1173.3 344.1L1164.9 338.4L1161.5 332.0ZM1196.4 342.2L1201.7 343.3L1209.3 336.9L1218.7 330.1L1224.4 322.5L1232.8 328.6L1227.5 333.1L1218.7 333.1L1215.0 339.6L1207.4 343.3L1201.7 345.2Z" fill="#62ac5c"/><path d="M1193.7 343.3L1196.4 342.2L1201.7 345.2L1207.4 343.3L1215.0 339.6L1218.7 333.1L1227.5 333.1L1228.2 345.2L1226.3 349.0L1222.5 356.6L1220.6 363.7L1215.0 364.1L1209.3 361.1L1201.7 360.3L1197.9 354.7L1194.1 349.0ZM1142.2 327.8L1150.5 329.3L1154.3 333.9L1161.5 340.3L1167.6 345.2L1174.0 352.8L1179.0 358.4L1182.7 361.1L1182.0 370.9L1177.1 371.3L1168.7 364.1L1161.1 352.8L1154.7 342.6L1144.8 333.9ZM1179.7 374.7L1182.7 371.3L1191.5 372.4L1199.8 375.1L1208.1 375.1L1215.0 378.5L1214.6 381.9L1201.7 380.0L1190.3 378.5L1184.3 377.0ZM1232.0 369.8L1237.7 369.8L1238.8 359.2L1241.5 366.0L1247.2 366.0L1241.5 356.6L1247.2 352.8L1239.6 352.8L1235.8 347.1L1252.9 344.1L1254.8 343.3L1237.7 344.1L1233.9 350.9L1231.3 360.3ZM1277.5 354.7L1285.1 351.6L1290.8 358.4L1302.1 354.7L1315.4 358.8L1315.4 383.4L1307.8 379.6L1303.3 380.8L1304.0 373.6L1292.7 366.0L1285.1 364.1L1281.3 359.6ZM1216.8 379.6L1220.6 381.1L1232.0 381.1L1243.4 380.4L1247.2 381.5L1235.8 383.0L1222.5 383.0ZM1232.0 385.3L1238.8 387.6L1235.8 386.8ZM1251.0 384.2L1255.9 380.4L1263.5 380.8L1252.9 387.6ZM1258.5 360.3L1266.1 361.1L1262.3 363.4ZM1264.2 343.3L1268.0 345.2L1266.1 350.9L1264.2 347.1ZM1271.8 359.6L1277.5 361.1L1273.7 362.2Z" fill="#9bcf95"/><path d="M1315.4 358.8L1326.8 363.4L1334.3 369.8L1340.0 372.4L1338.1 378.5L1345.7 384.9L1352.5 387.9L1340.0 387.6L1334.3 381.1L1326.8 378.1L1323.0 383.4L1315.4 383.4ZM1343.8 369.8L1353.3 367.9L1357.1 364.9L1351.4 372.8ZM1353.3 359.6L1359.0 362.2L1360.9 366.0ZM1366.6 369.8L1370.3 371.7L1368.5 373.6Z" fill="#f4f6f3"/><path d="M1235.8 279.1L1244.1 279.1L1243.4 288.5L1241.5 294.2L1245.3 296.1L1251.0 299.9L1249.1 301.8L1241.5 296.8L1237.7 294.2L1235.0 287.4ZM1243.4 322.5L1249.1 316.9L1256.6 313.1L1260.4 322.5L1256.6 327.5L1251.0 324.4ZM1225.2 317.6L1233.9 306.3L1230.1 313.1ZM1245.3 309.3L1249.1 307.4L1247.2 313.1ZM1252.9 305.5L1256.6 301.8L1254.8 311.2ZM1239.6 301.8L1241.5 298.0L1237.7 298.7Z" fill="#dff0e2"/><path d="M1252.9 382.6L1263.5 380.8L1254.8 384.9Z" fill="#dff0e2"/><path d="M1173.6 344.1L1175.2 343.7L1174.8 344.5Z" fill="#62ac5c"/><path d="M1213.4 431.4L1222.5 427.6L1232.0 424.6L1239.6 422.7L1244.1 417.0L1245.3 412.5L1249.1 411.4L1254.8 403.8L1262.3 401.2L1266.9 405.7L1271.8 405.3L1273.7 398.1L1277.5 395.1L1283.6 392.5L1287.0 394.4L1292.7 395.1L1299.9 395.5L1296.4 400.0L1294.5 405.7L1302.1 410.6L1305.9 412.5L1313.5 415.5L1317.3 405.7L1317.7 396.2L1321.1 389.4L1324.9 397.8L1328.7 403.8L1331.7 405.7L1332.4 413.3L1335.5 420.1L1343.8 425.4L1345.7 428.4L1352.5 434.4L1357.1 441.6L1360.9 444.3L1361.6 451.1L1363.1 457.1L1360.9 466.2L1359.0 471.9L1355.2 473.7L1352.5 479.4L1350.3 483.6L1349.5 490.8L1341.2 492.3L1335.9 496.8L1329.8 492.3L1324.9 495.7L1314.3 492.6L1310.5 489.6L1307.8 483.9L1304.0 483.9L1305.9 479.4L1304.0 477.5L1303.3 472.2L1302.1 473.7L1300.2 480.5L1296.4 481.3L1293.8 479.8L1292.7 475.6L1289.6 473.0L1278.2 468.1L1266.1 469.2L1258.5 471.1L1251.0 473.7L1249.1 477.1L1235.8 477.1L1228.2 481.3L1220.6 481.3L1216.8 478.7L1219.1 474.9L1219.5 468.1L1216.8 462.4L1216.5 458.6L1213.1 453.0L1210.8 449.2L1210.0 448.0L1212.3 445.4L1211.2 439.7L1211.9 434.0ZM1329.0 502.8L1336.2 504.4L1343.1 503.6L1341.9 512.3L1337.4 513.8L1331.3 508.9Z" fill="#2e6a2a"/><path d="M1435.5 479.0L1441.6 483.2L1444.2 488.1L1447.7 490.8L1451.8 492.3L1457.5 491.5L1455.2 497.2L1451.1 500.6L1445.0 506.2L1442.7 499.4L1439.7 497.2L1442.7 489.6ZM1435.5 502.1L1441.6 505.1L1438.6 510.0L1435.2 514.6L1429.8 517.2L1427.6 522.5L1421.5 525.1L1412.0 522.9L1418.9 515.3L1427.2 511.5L1432.1 505.9Z" fill="#62ac5c"/><path d="M1402.6 425.4L1413.9 433.3L1406.3 430.3ZM1453.0 415.1L1457.9 413.3L1456.8 417.8L1453.3 417.4ZM1383.6 379.2L1389.3 384.9L1385.5 384.2ZM1389.3 383.0L1393.1 386.0L1391.2 381.1ZM1412.0 405.7L1413.9 407.6L1412.8 404.2ZM1376.0 375.5L1381.7 377.7L1377.9 380.0Z" fill="#ffffff"/><path d="M758.6 213.7L772.7 216.3L774.6 220.5L774.6 226.1L767.4 229.2L761.3 235.6L748.0 240.5L748.0 244.3L748.0 250.7L735.5 250.7L735.5 260.2L731.4 262.8L731.7 268.5L716.6 268.5L718.5 263.9L724.2 256.4L726.0 250.3L731.0 244.3L737.4 242.0L743.9 237.1L743.9 230.3L748.8 223.1L755.2 220.1Z" fill="#c8e2c8"/><path d="M772.7 216.3L784.8 211.0L796.2 209.5L813.6 209.5L812.8 215.9L812.5 220.5L809.4 223.5L817.0 234.8L818.5 245.1L817.0 250.0L820.0 256.4L826.1 260.2L809.4 270.4L803.0 275.7L796.9 276.4L793.5 277.2L784.8 269.6L762.4 255.6L748.0 245.8L748.0 244.3L748.0 240.5L761.3 235.6L767.4 229.2L774.6 226.1L774.6 220.5Z" fill="#c8e2c8"/><path d="M813.6 209.5L820.0 208.0L823.1 209.5L820.8 214.8L823.1 215.9L818.9 219.7L824.6 223.9L824.6 226.5L820.0 229.9L817.0 234.8L809.4 223.5L812.5 220.5L812.8 215.9Z" fill="#c8e2c8"/><path d="M824.6 223.9L830.3 224.6L838.6 226.9L840.5 230.3L852.6 234.1L856.8 231.8L856.8 227.7L862.5 224.6L868.2 225.8L875.8 229.6L875.8 235.6L875.8 265.8L875.8 273.4L872.0 275.3L841.3 260.5L834.8 263.6L826.1 260.2L820.0 256.4L817.0 250.0L818.5 245.1L817.0 234.8L820.0 229.9L824.6 226.5Z" fill="#c8e2c8"/><path d="M875.8 229.6L890.9 232.2L898.5 229.6L903.4 230.7L911.0 230.7L913.3 237.5L909.9 243.9L908.0 241.3L904.6 236.0L908.0 245.1L915.5 258.3L920.9 265.8L900.4 265.8L875.8 265.8L875.8 235.6Z" fill="#62ac5c"/><path d="M875.8 265.8L900.4 265.8L920.9 265.8L922.4 271.5L925.0 281.0L921.2 284.7L919.3 294.9L911.8 307.4L910.2 316.5L906.1 319.5L914.8 328.2L909.9 333.1L908.0 334.6L897.7 335.8L890.9 332.0L884.8 329.7L875.8 320.6L872.0 316.1L870.1 315.0L866.3 309.3L867.8 305.5L863.6 301.4L866.3 296.1L871.6 289.7L872.0 275.3L875.8 273.4Z" fill="#c8e2c8"/><path d="M919.3 294.9L921.2 284.7L925.0 281.0L928.8 288.5L936.4 294.2L944.3 301.0L941.7 301.8L932.6 294.2L926.9 294.2L923.1 295.3Z" fill="#dff0e2"/><path d="M941.7 301.8L944.3 301.0L945.5 305.5L943.2 307.4L939.4 307.4Z" fill="#f4f6f3"/><path d="M911.8 307.4L919.3 294.9L923.1 295.3L926.9 294.2L932.6 294.2L941.7 301.8L939.4 307.4L943.2 307.4L947.8 315.0L962.5 318.8L951.2 330.1L944.0 330.5L939.4 334.3L932.6 333.9L925.0 335.4L917.1 331.6L914.8 328.2L906.1 319.5L910.2 316.5Z" fill="#c8e2c8"/><path d="M943.2 307.4L945.9 306.3L951.5 309.3L962.9 306.7L975.4 304.4L974.3 309.7L972.4 315.0L968.6 324.4L964.8 330.1L957.2 339.6L945.9 347.1L938.3 355.4L936.4 352.8L936.4 338.4L939.4 334.3L944.0 330.5L951.2 330.1L962.5 318.8L947.8 315.0Z" fill="#f4f6f3"/><path d="M938.3 355.4L933.4 359.2L929.6 366.8L923.9 360.3L909.9 352.8L909.9 345.2L912.9 341.4L909.9 333.1L917.1 331.6L925.0 335.4L932.6 333.9L939.4 334.3L936.4 338.4L936.4 352.8Z" fill="#c8e2c8"/><path d="M893.6 354.3L896.6 352.8L909.5 352.8L909.9 345.2L912.9 341.4L909.9 333.1L908.0 334.6L897.7 335.8L894.7 343.3L893.2 349.0Z" fill="#c8e2c8"/><path d="M890.9 354.3L896.6 352.8L897.7 357.7L890.9 359.6Z" fill="#c8e2c8"/><path d="M890.9 359.6L897.7 357.7L896.6 365.6L892.0 365.6Z" fill="#dff0e2"/><path d="M896.6 352.8L909.5 352.8L909.9 352.8L923.9 360.3L929.6 366.8L928.1 373.6L930.7 379.2L934.5 388.7L923.1 392.8L913.7 392.5L911.8 384.9L906.1 384.5L898.5 381.1L896.6 380.4L892.8 371.7L892.0 365.6L896.6 365.6L897.7 357.7Z" fill="#c8e2c8"/><path d="M827.2 371.7L830.3 371.3L842.8 371.3L847.3 379.2L853.0 379.2L863.6 376.6L864.4 386.8L872.0 390.6L877.6 391.3L885.2 394.4L889.0 398.1L892.8 399.3L893.9 395.1L889.0 392.5L889.0 381.1L896.6 380.4L892.8 371.7L892.0 365.6L890.9 359.6L890.9 354.3L893.6 354.3L893.2 349.0L894.7 343.3L897.7 335.8L890.9 332.0L884.8 329.7L875.8 330.1L866.3 333.1L858.7 332.0L851.1 335.8L851.1 341.4L847.3 352.8L841.6 358.4L834.1 366.0L829.5 367.1Z" fill="#c8e2c8"/><path d="M823.4 363.7L829.5 367.1L834.1 366.0L841.6 358.4L847.3 352.8L851.1 341.4L851.1 335.8L843.5 335.4L841.6 341.4L831.4 340.7L835.2 343.7L830.3 358.1L825.7 358.4Z" fill="#dff0e2"/><path d="M816.2 345.2L818.1 340.7L823.8 340.7L831.4 340.7L835.2 343.7L830.3 358.1L825.7 358.4L823.4 363.7L815.1 354.7L816.2 349.0Z" fill="#dff0e2"/><path d="M818.1 340.7L823.8 340.7L823.8 345.2L816.2 345.2Z" fill="#f4f6f3"/><path d="M813.2 332.0L818.1 340.7L823.8 340.7L831.4 340.7L841.6 341.4L843.5 335.4L837.8 333.9L836.0 326.3L839.7 320.6L834.1 311.2L839.7 311.2L834.8 302.1L836.0 299.9L832.2 301.8L832.2 309.3L825.7 322.5L818.9 322.5L814.4 328.2Z" fill="#c8e2c8"/><path d="M836.0 326.3L837.8 333.9L843.5 335.4L851.1 335.8L858.7 332.0L866.3 333.1L875.8 330.1L884.8 329.7L875.8 320.6L872.0 316.1L870.1 315.0L866.3 309.3L860.6 313.1L853.0 315.0L841.6 320.6L839.7 320.6Z" fill="#dff0e2"/><path d="M841.3 260.5L872.0 275.3L871.6 289.7L866.3 296.1L863.6 301.4L867.8 305.5L866.3 309.3L860.6 313.1L853.0 315.0L841.6 320.6L839.7 320.6L834.1 311.2L839.7 311.2L834.8 302.1L836.0 299.9L832.5 296.5L837.8 288.5L840.5 273.8L834.8 263.6Z" fill="#f4f6f3"/><path d="M796.9 276.4L803.0 275.7L809.4 270.4L826.1 260.2L834.8 263.6L840.5 273.8L837.8 288.5L832.5 296.5L828.4 299.1L818.9 298.7L807.5 299.9L796.2 298.0L794.6 304.8L790.5 302.5L784.8 299.9L781.8 292.7L794.3 290.8L796.9 285.1Z" fill="#f4f6f3"/><path d="M762.4 255.6L784.8 269.6L793.5 277.2L796.9 276.4L796.9 285.1L794.3 290.8L781.8 292.7L779.1 291.5L773.4 294.2L769.6 297.6L764.7 301.0L760.5 309.7L752.2 310.1L749.5 307.4L745.8 302.5L739.3 302.9L737.8 302.1L734.8 293.8L736.7 290.8L760.2 290.4L760.2 286.6L756.4 254.9Z" fill="#dff0e2"/><path d="M716.6 268.5L731.7 268.5L731.4 262.8L735.5 260.2L735.5 250.7L748.0 250.7L748.0 245.8L762.4 255.6L756.4 254.9L760.2 286.6L760.2 290.4L736.7 290.8L734.8 293.8L727.9 286.3L718.5 287.8L720.4 279.1Z" fill="#f4f6f3"/><path d="M718.5 287.8L727.9 286.3L734.8 293.8L737.8 302.1L729.1 301.4L717.7 302.1L714.7 293.4Z" fill="#c8e2c8"/><path d="M717.7 302.1L729.1 301.4L729.1 304.4L724.2 307.4Z" fill="#dff0e2"/><path d="M729.1 301.4L737.8 302.1L739.3 302.9L745.8 302.5L749.5 307.4L752.2 310.1L750.7 316.9L745.0 316.9L742.0 316.9L740.1 312.3L730.6 313.1L724.2 307.4L729.1 304.4Z" fill="#dff0e2"/><path d="M730.6 313.1L740.1 312.3L742.0 316.9L737.4 322.9L731.7 319.5Z" fill="#f4f6f3"/><path d="M737.4 322.9L742.0 316.9L745.0 316.9L748.8 320.6L752.6 332.4L746.9 330.1Z" fill="#dff0e2"/><path d="M752.6 332.4L748.8 320.6L750.7 316.9L752.2 310.1L760.5 309.7L764.7 312.7L770.8 312.3L770.8 330.1L769.6 329.7L762.0 329.7Z" fill="#c8e2c8"/><path d="M760.5 309.7L760.2 305.9L764.7 301.0L769.6 297.6L773.4 294.2L779.1 291.5L781.8 292.7L784.8 299.9L790.5 302.5L784.8 307.4L780.6 307.0L770.8 307.4L770.8 312.3L764.7 312.7Z" fill="#dff0e2"/><path d="M769.6 329.7L770.8 330.1L770.8 312.3L770.8 307.4L780.6 307.0L782.9 309.3L782.1 318.8L785.5 325.9L779.1 328.6L773.4 330.9Z" fill="#c8e2c8"/><path d="M785.5 325.9L782.1 318.8L782.9 309.3L780.6 307.0L784.4 307.4L787.1 315.0L787.1 325.6Z" fill="#dff0e2"/><path d="M787.1 325.6L787.1 315.0L784.4 307.4L784.8 307.4L790.5 302.5L794.6 304.8L791.2 315.0L791.2 324.8Z" fill="#c8e2c8"/><path d="M791.2 324.8L791.2 315.0L794.6 304.8L796.2 298.0L807.5 299.9L818.9 298.7L828.4 299.1L832.5 296.5L836.0 299.9L832.2 301.8L832.2 309.3L825.7 322.5L818.9 322.5L814.4 328.2L813.2 332.0L807.5 332.4L803.4 332.7L798.1 325.2Z" fill="#9bcf95"/><path d="M825.7 414.0L831.8 412.9L841.6 414.8L851.1 414.8L860.6 417.0L869.7 415.5L864.4 409.5L864.4 398.1L872.0 398.1L872.0 390.6L864.4 386.8L863.6 376.6L853.0 379.2L847.3 379.2L842.8 371.3L830.3 371.3L827.2 371.7L831.0 382.3L830.3 390.6L827.2 400.0Z" fill="#f4f6f3"/><path d="M864.4 398.1L864.4 409.5L869.7 415.5L876.9 416.3L883.3 416.7L889.8 410.6L896.2 408.3L906.1 401.9L907.2 395.5L906.1 384.5L898.5 381.1L896.6 380.4L889.0 381.1L889.0 392.5L893.9 395.1L892.8 399.3L889.0 398.1L885.2 394.4L877.6 391.3L872.0 390.6L872.0 398.1Z" fill="#c8e2c8"/><path d="M906.1 384.5L911.8 384.9L913.7 392.5L915.5 403.8L914.8 413.6L911.8 405.7L907.2 401.9L907.2 395.5Z" fill="#c8e2c8"/><path d="M934.5 388.7L934.5 403.8L928.8 413.3L919.3 420.8L913.7 432.2L915.9 438.6L905.7 447.3L902.3 450.3L899.6 433.7L904.2 428.4L906.1 420.8L905.3 411.4L896.2 408.3L906.1 401.9L907.2 401.9L911.8 405.7L914.8 413.6L915.5 403.8L913.7 392.5L923.1 392.8Z" fill="#c8e2c8"/><path d="M876.9 416.3L883.3 416.7L889.8 410.6L896.2 408.3L905.3 411.4L906.1 420.8L904.2 428.4L899.6 433.7L892.4 432.9L887.1 430.3L879.5 422.7Z" fill="#c8e2c8"/><path d="M856.8 432.2L856.8 442.7L860.2 450.3L866.3 447.3L877.6 445.4L883.3 438.6L892.4 432.9L887.1 430.3L879.5 422.7L876.9 416.3L869.7 415.5L860.6 418.2L860.6 432.2Z" fill="#c8e2c8"/><path d="M825.7 414.0L831.8 412.9L841.6 414.8L851.1 414.8L860.6 417.0L869.7 415.5L876.9 416.3L869.7 416.7L860.6 418.2L860.6 432.2L856.8 432.2L856.8 442.7L856.8 456.4L843.5 457.1L838.6 449.2L836.0 434.0L830.3 424.6Z" fill="#c8e2c8"/><path d="M843.5 457.1L856.8 456.4L860.2 450.3L866.3 447.3L877.6 445.4L883.3 438.6L892.4 432.9L899.6 433.7L902.3 450.3L905.7 450.7L904.2 456.7L898.5 462.4L894.7 467.3L887.1 472.6L878.0 477.5L866.3 477.5L856.8 480.5L850.7 478.3L849.2 470.0L846.6 462.4Z" fill="#62ac5c"/><path d="M883.3 460.9L889.0 457.1L892.4 460.1L887.1 464.7Z" fill="#ffffff"/><path d="M898.5 446.5L902.3 450.3L899.6 452.2L897.7 449.2Z" fill="#c8e2c8"/><path d="M967.8 394.4L972.4 407.6L968.6 415.1L962.9 432.2L959.5 443.1L952.3 445.4L946.6 435.9L945.1 430.3L949.3 420.8L947.8 413.3L957.2 408.3L962.9 400.0Z" fill="#dff0e2"/><path d="M720.4 243.2L722.6 242.4L721.9 243.9ZM716.6 241.6L719.6 240.9L718.1 243.2ZM728.7 239.4L730.2 238.6L728.3 240.5ZM685.1 284.7L687.0 285.5L691.9 292.3L690.8 291.2ZM998.2 424.6L1000.1 425.4L998.9 426.5ZM990.2 428.4L992.5 429.1L991.3 429.9ZM944.7 392.1L945.9 394.0L949.3 395.1ZM801.8 347.9L806.4 347.9L805.6 349.0ZM813.2 334.6L814.7 335.4L814.0 336.9ZM682.5 205.7L685.5 206.5L684.0 206.9ZM673.0 203.1L676.8 202.7L674.9 203.8ZM716.6 224.6L717.7 225.4L715.8 225.8Z" fill="#ffffff"/><path d="M128.0 402.3L131.8 402.3L129.9 399.7ZM173.5 430.3L177.3 430.3L175.4 427.6ZM212.5 416.7L216.3 416.7L214.4 414.0ZM248.5 383.8L252.3 383.8L250.4 381.1ZM115.1 430.3L118.9 430.3L117.0 427.6ZM103.7 414.8L109.0 414.8L106.4 411.1ZM1415.4 412.7L1420.0 412.7L1417.7 409.6ZM1410.5 408.2L1415.1 408.2L1412.8 405.0ZM1434.8 344.5L1438.6 344.5L1436.7 341.8ZM1378.7 324.1L1382.5 324.1L1380.6 321.4ZM1288.9 321.8L1292.7 321.8L1290.8 319.1ZM1331.3 292.7L1335.1 292.7L1333.2 290.0ZM1413.9 316.1L1417.7 316.1L1415.8 313.5ZM1428.0 323.3L1431.7 323.3L1429.8 320.6ZM182.6 343.0L186.3 343.0L184.5 340.3ZM1458.3 382.3L1462.1 382.3L1460.2 379.6Z" fill="#ffffff"/><path d="M150.0 145.3L156.0 144.1L152.2 142.6ZM142.4 149.0L146.2 147.5L144.3 146.8ZM165.1 141.5L168.9 140.7L167.0 139.6Z" fill="#22551e"/></g>
<g fill="#0b4b0b">
<rect x="58" y="39" width="38" height="116" rx="19" ry="19"/>
<rect x="38.5" y="77.5" width="76" height="38.5" rx="19" ry="19"/>
<rect x="58" y="166.5" width="38" height="116.5" rx="19" ry="19"/>
</g>
<g stroke="#2f6f2f" stroke-width="1">
<line x1="58" y1="77.5" x2="96" y2="77.5"/>
<line x1="58" y1="116" x2="96" y2="116"/>
<line x1="77.5" y1="77.5" x2="77.5" y2="116"/>
<line x1="58" y1="204" x2="96" y2="204"/>
<line x1="58" y1="243.5" x2="96" y2="243.5"/>
</g>
<g fill="#ffffff">
<path d="M77 46.5 L88 67 L66 67 Z"/>
<path d="M77 146.7 L88 127 L66 127 Z"/>
<path d="M47 96.5 L66.70000000000005 86 L66.70000000000005 107 Z"/>
<path d="M107.79999999999995 96.5 L88 86 L88 107 Z"/>
<rect x="66.5" y="185" width="22" height="4.5"/>
<rect x="75.20000000000005" y="176" width="4.5" height="22"/>
<rect x="66.5" y="258.5" width="22" height="5"/>
</g>
<g fill="none" stroke="#8a8ae6" stroke-width="1.6">
<circle cx="77.29999999999995" cy="223.8" r="17"/>
<ellipse cx="77.29999999999995" cy="223.8" rx="9" ry="17"/>
<line x1="60.299999999999955" y1="223.8" x2="94.29999999999995" y2="223.8"/>
<line x1="77.29999999999995" y1="206.8" x2="77.29999999999995" y2="240.8"/>
<line x1="62" y1="215" x2="92.60000000000002" y2="215"/>
<line x1="62" y1="232.60000000000002" x2="92.60000000000002" y2="232.60000000000002"/>
</g>
</svg>

<!-- legend -->
<div class="a" style="left:533px;top:827px;width:323px;height:44px;background:linear-gradient(90deg,#ffffff 0%,#cfe3cb 20%,#a6cb9e 40%,#86b67e 55%,#5f9b57 72%,#1d7a1d 88%,#005000 100%);"></div>
<div class="a t30" style="left:531px;top:826.5px;color:#000;">0</div>
<div class="a t30" style="left:759px;top:826.5px;color:#000;">80,288</div>

<div class="hr" style="left:510px;top:892px;width:1537px;"></div>
<div class="a b t30" style="left:553px;top:913.5px;">Report View by Selection</div>
<div class="a b t30 blue" style="left:1855px;top:913px;">Customize</div>
<div class="hr" style="left:510px;top:969px;width:1537px;"></div>

<!-- table header -->
<div class="a" style="left:511px;top:972px;width:1532px;height:82px;background:#f3f3f3;"></div>
<div class="a b t30" style="left:525px;top:978px;">Total:</div>
<div class="a b t30" style="left:520px;top:1012px;">2062</div>
<div class="a b t30" style="left:704px;top:995.5px;">Institutions</div>
<div class="a b t30" style="left:958px;top:995.5px;">Countries/Regions</div>
<div class="a b t30" style="left:1270px;top:978px;">Web of Science</div>
<div class="a b t30" style="left:1289px;top:1012px;">Documents</div>
<div class="a b t30" style="left:1575px;top:995px;color:#3d6ca6;">Cites</div>
<svg class="a" style="left:1655px;top:1005px;" width="18" height="12" viewBox="0 0 18 12"><path d="M2 2 L16 2 L9 10.5 Z" fill="#4f82c8"/></svg>
<div class="a b t30" style="left:1786px;top:995px;">Cites/Paper</div>

<!-- rows -->
<div class="row" style="top:1092px;height:92px;"></div>
<div class="row" style="top:1185px;height:62px;"></div>
<div class="sep" style="top:1247px;"></div>
<div class="row" style="top:1250px;height:98px;"></div>
<div class="sep" style="top:1348px;"></div>
<div class="row" style="top:1351px;height:99px;"></div>
<div class="sep" style="top:1450px;"></div>
<div class="row" style="top:1453px;height:125px;"></div>

<div class="num" style="left:538px;width:82px;top:1119px;">150</div>
<div class="inst" style="top:1108px;">TONGJI<br>UNIVERSITY</div>
<div class="ctry" style="top:1108px;">CHINA<br>MAINLAND</div>
<div class="num" style="left:1300px;width:205px;top:1119px;">5,317</div>
<div class="num" style="left:1540px;width:202px;top:1119px;">123,902</div>
<div class="num" style="left:1800px;width:194px;top:1119px;">23.30</div>

<div class="num" style="left:538px;width:82px;top:1193px;">151</div>
<div class="inst" style="top:1180px;">GHENT<br>UNIVERSITY</div>
<div class="ctry" style="top:1195.5px;">BELGIUM</div>
<div class="num" style="left:1300px;width:205px;top:1193px;">4,839</div>
<div class="num" style="left:1540px;width:202px;top:1193px;">123,561</div>
<div class="num" style="left:1800px;width:194px;top:1193px;">25.53</div>

<div class="num" style="left:538px;width:82px;top:1281px;">152</div>
<div class="inst" style="top:1254px;">NORTHWESTERN<br>POLYTECHNICAL<br>UNIVERSITY</div>
<div class="ctry" style="top:1268px;">CHINA<br>MAINLAND</div>
<div class="num" style="left:1300px;width:205px;top:1281px;">5,319</div>
<div class="num" style="left:1540px;width:202px;top:1281px;">123,537</div>
<div class="num" style="left:1800px;width:194px;top:1281px;">23.23</div>

<div class="num" style="left:538px;width:82px;top:1381px;">153</div>
<div class="inst" style="top:1355px;line-height:27.8px;">UNIVERSITY OF<br>NORTH<br>CAROLINA</div>
<div class="ctry" style="top:1384px;">USA</div>
<div class="num" style="left:1300px;width:205px;top:1381px;">4,021</div>
<div class="num" style="left:1540px;width:202px;top:1381px;">123,078</div>
<div class="num" style="left:1800px;width:194px;top:1381px;">30.61</div>

<div class="num" style="left:538px;width:82px;top:1496px;">154</div>
<div class="inst" style="top:1456.5px;line-height:28px;">COMMUNAUTE<br>UNIVERSITE<br>GRENOBLE<br>ALPES</div>
<div class="ctry" style="top:1499.5px;">FRANCE</div>
<div class="num" style="left:1300px;width:205px;top:1496px;">5,437</div>
<div class="num" style="left:1540px;width:202px;top:1496px;">122,476</div>
<div class="num" style="left:1800px;width:194px;top:1496px;">22.53</div>

<!-- red highlight -->
<div class="a" style="left:515px;top:1092px;width:1511px;height:95px;box-sizing:border-box;border:14px solid #ff0000;"></div>
</body></html>
